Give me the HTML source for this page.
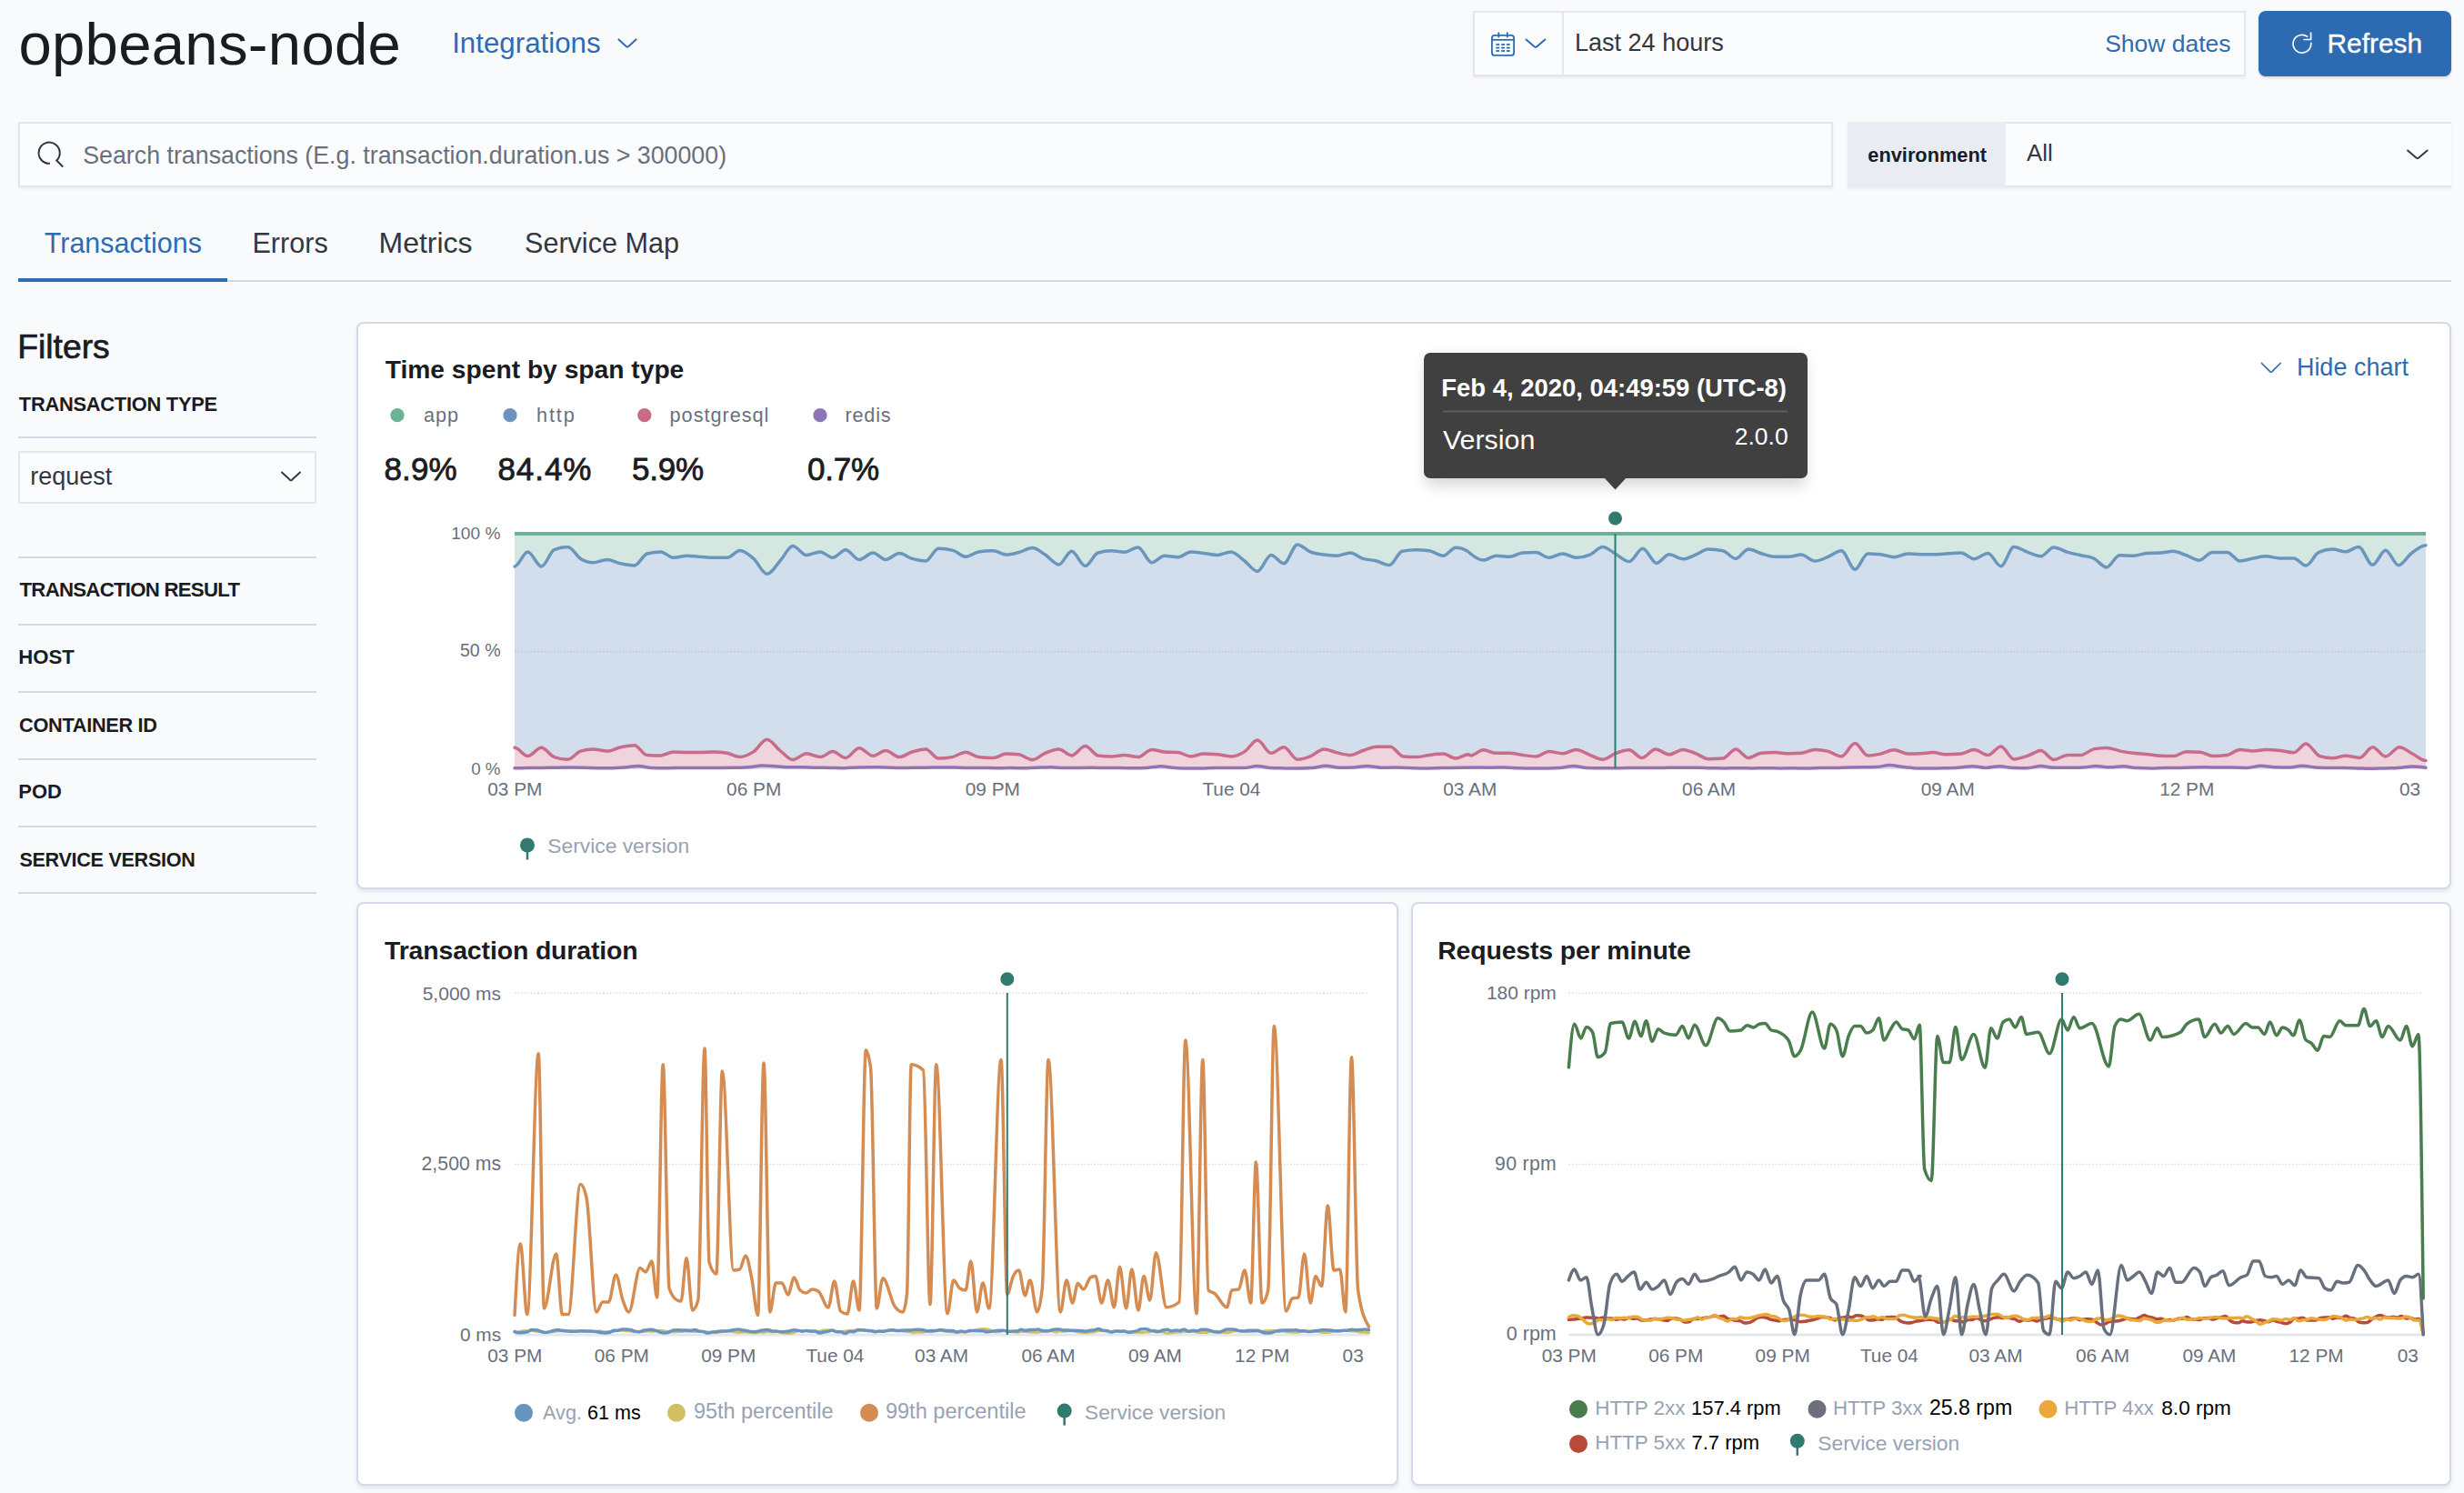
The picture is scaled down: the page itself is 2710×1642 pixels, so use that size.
<!DOCTYPE html>
<html><head><meta charset="utf-8"><style>
html,body{margin:0;padding:0;}
body{width:2710px;height:1642px;position:relative;overflow:hidden;background:#f9fafc;font-family:"Liberation Sans",sans-serif;}
.t{position:absolute;white-space:nowrap;line-height:1;}
.b{position:absolute;box-sizing:border-box;}
svg{position:absolute;left:0;top:0;}
</style></head><body>
<!-- header boxes -->
<div class="b" style="left:1620px;top:12px;width:850px;height:72px;background:#fbfcfd;border:2px solid #e3e6ee;box-shadow:0 2px 2px rgba(152,162,179,.15);"></div>
<div class="b" style="left:1718px;top:14px;width:2px;height:68px;background:#e3e6ee;"></div>
<div class="b" style="left:2484px;top:12px;width:212px;height:72px;background:#2c6ab1;border-radius:8px;box-shadow:0 2px 3px rgba(0,0,0,.12);"></div>
<div class="b" style="left:20px;top:134px;width:1996px;height:72px;background:#fbfcfd;border:2px solid #e3e6ee;box-shadow:0 2px 2px rgba(152,162,179,.15);"></div>
<div class="b" style="left:2032px;top:134px;width:664px;height:72px;background:#fbfcfd;border:2px solid #e3e6ee;border-right:none;box-shadow:0 2px 2px rgba(152,162,179,.15);"></div>
<div class="b" style="left:2032px;top:134px;width:174px;height:72px;background:#e9edf3;"></div>
<!-- tabs -->
<div class="b" style="left:20px;top:308px;width:2676px;height:2px;background:#d3dae6;"></div>
<div class="b" style="left:20px;top:306px;width:230px;height:4px;background:#2f6bb0;"></div>
<!-- filters lines -->
<div class="b" style="left:20px;top:480px;width:328px;height:2px;background:#d3dae6;"></div>
<div class="b" style="left:20px;top:496px;width:328px;height:58px;background:#fbfcfd;border:2px solid #e3e6ee;border-radius:2px;"></div>
<div class="b" style="left:20px;top:612px;width:328px;height:2px;background:#d3dae6;"></div>
<div class="b" style="left:20px;top:686px;width:328px;height:2px;background:#d3dae6;"></div>
<div class="b" style="left:20px;top:760px;width:328px;height:2px;background:#d3dae6;"></div>
<div class="b" style="left:20px;top:834px;width:328px;height:2px;background:#d3dae6;"></div>
<div class="b" style="left:20px;top:908px;width:328px;height:2px;background:#d3dae6;"></div>
<div class="b" style="left:20px;top:981px;width:328px;height:2px;background:#d3dae6;"></div>
<!-- panels -->
<div class="b" style="left:392px;top:354px;width:2304px;height:624px;background:#fff;border:2px solid #d3dae6;border-radius:8px;box-shadow:0 3px 4px rgba(152,162,179,.22);"></div>
<div class="b" style="left:392px;top:992px;width:1146px;height:642px;background:#fff;border:2px solid #d3dae6;border-radius:8px;box-shadow:0 3px 4px rgba(152,162,179,.22);"></div>
<div class="b" style="left:1552px;top:992px;width:1144px;height:642px;background:#fff;border:2px solid #d3dae6;border-radius:8px;box-shadow:0 3px 4px rgba(152,162,179,.22);"></div>
<svg width="2710" height="1642" viewBox="0 0 2710 1642">
<defs><filter id="blur" x="-20%" y="-20%" width="140%" height="140%"><feGaussianBlur stdDeviation="8"/></filter></defs>
<path d="M566.0,587.0 C1266.7,587.0 1967.3,587.0 2668.0,587.0 L2668.0,599.7 C2668.0,599.7 2668.0,599.7 2668.0,599.7 C2662.7,599.7 2657.5,604.6 2652.2,608.5 C2647.5,612.1 2642.7,621.7 2638.0,621.7 C2633.2,621.7 2628.5,605.2 2623.7,605.2 C2619.0,605.2 2614.2,621.3 2609.5,621.3 C2604.4,621.3 2599.2,601.5 2594.1,601.5 C2589.4,601.5 2584.6,606.8 2579.9,606.8 C2575.1,606.8 2570.4,604.1 2565.6,604.1 C2560.5,604.1 2555.4,605.2 2550.3,607.4 C2545.5,609.5 2540.8,622.1 2536.1,622.1 C2531.7,622.1 2527.3,614.0 2522.9,614.0 C2517.8,614.0 2512.7,614.0 2507.6,614.0 C2502.4,614.0 2497.3,611.8 2492.2,611.8 C2487.5,611.8 2482.7,613.2 2478.0,614.0 C2473.2,614.9 2468.5,616.9 2463.7,616.9 C2459.0,616.9 2454.2,607.4 2449.5,607.4 C2444.0,607.4 2438.5,607.4 2433.0,607.4 C2428.3,607.4 2423.6,616.2 2418.8,616.2 C2414.1,616.2 2409.3,612.4 2404.6,610.7 C2399.8,609.1 2395.1,606.3 2390.3,606.3 C2385.6,606.3 2380.8,607.8 2376.1,608.1 C2371.0,608.4 2365.8,608.2 2360.7,608.5 C2356.0,608.8 2351.2,611.2 2346.5,611.2 C2341.4,611.2 2336.3,610.7 2331.1,610.7 C2326.4,610.7 2321.6,623.9 2316.9,623.9 C2312.1,623.9 2307.4,616.2 2302.7,614.0 C2297.9,611.8 2293.2,611.8 2288.4,610.7 C2283.7,609.6 2278.9,608.8 2274.2,607.4 C2269.0,605.9 2263.9,601.9 2258.8,601.9 C2254.1,601.9 2249.3,611.8 2244.6,611.8 C2239.8,611.8 2235.1,609.1 2230.3,607.4 C2225.2,605.7 2220.1,601.5 2215.0,601.5 C2210.2,601.5 2205.5,622.8 2200.7,622.8 C2196.0,622.8 2191.2,608.5 2186.5,608.5 C2181.4,608.5 2176.3,614.7 2171.2,614.7 C2166.4,614.7 2161.7,608.1 2156.9,608.1 C2151.3,608.1 2145.6,608.8 2140.0,609.0 C2135.4,609.3 2130.8,609.7 2126.2,609.7 C2121.6,609.7 2116.9,609.7 2112.3,609.7 C2107.6,609.7 2102.9,609.0 2098.3,609.0 C2093.3,609.0 2088.2,612.7 2083.2,612.7 C2078.2,612.7 2073.2,610.1 2068.2,609.7 C2063.5,609.3 2058.8,609.0 2054.2,609.0 C2049.5,609.0 2044.9,626.2 2040.2,626.2 C2035.2,626.2 2030.2,605.8 2025.1,605.8 C2020.1,605.8 2015.1,610.8 2010.1,612.7 C2005.4,614.5 2000.8,617.0 1996.1,617.0 C1991.1,617.0 1986.1,610.1 1981.0,610.1 C1976.4,610.1 1971.7,612.3 1967.1,612.3 C1962.0,612.3 1957.0,612.3 1952.0,612.3 C1947.3,612.3 1942.7,610.3 1938.0,609.0 C1933.0,607.6 1928.0,604.1 1923.0,604.1 C1918.3,604.1 1913.6,614.4 1909.0,614.4 C1904.3,614.4 1899.7,606.8 1895.0,605.8 C1889.6,604.7 1884.3,604.1 1878.9,604.1 C1874.2,604.1 1869.6,608.3 1864.9,610.1 C1860.2,611.9 1855.6,614.8 1850.9,614.8 C1845.9,614.8 1840.9,609.7 1835.9,609.7 C1831.2,609.7 1826.5,619.4 1821.9,619.4 C1816.9,619.4 1811.8,603.2 1806.8,603.2 C1801.8,603.2 1796.8,617.6 1791.8,617.6 C1786.7,617.6 1781.7,611.8 1776.7,609.0 C1772.0,606.5 1767.4,601.5 1762.7,601.5 C1758.1,601.5 1753.4,608.1 1748.7,610.1 C1743.7,612.2 1738.7,613.3 1733.7,613.3 C1728.7,613.3 1723.6,609.0 1718.6,609.0 C1713.6,609.0 1708.6,613.3 1703.6,613.3 C1698.9,613.3 1694.2,607.5 1689.6,607.5 C1684.6,607.5 1679.5,607.7 1674.5,608.0 C1669.9,608.2 1665.2,612.3 1660.5,612.3 C1655.5,612.3 1650.5,611.2 1645.5,611.2 C1640.8,611.2 1636.2,616.1 1631.5,616.1 C1626.8,616.1 1622.2,612.8 1617.5,609.0 C1616.7,608.4 1615.8,607.5 1615.0,606.9 C1610.4,603.7 1605.8,602.2 1601.2,602.2 C1596.6,602.2 1591.9,611.2 1587.3,611.2 C1582.2,611.2 1577.2,606.5 1572.2,605.8 C1567.2,605.1 1562.2,604.7 1557.1,604.7 C1552.1,604.7 1547.1,605.2 1542.1,606.2 C1537.4,607.2 1532.8,621.5 1528.1,621.5 C1523.4,621.5 1518.8,618.2 1514.1,617.0 C1509.1,615.7 1504.1,616.0 1499.1,614.4 C1494.4,612.9 1489.7,608.0 1485.1,608.0 C1480.1,608.0 1475.0,611.2 1470.0,611.2 C1465.4,611.2 1460.7,610.8 1456.0,610.1 C1451.0,609.4 1446.0,608.9 1441.0,606.9 C1436.3,605.0 1431.7,598.9 1427.0,598.9 C1422.0,598.9 1417.0,619.8 1412.0,619.8 C1407.3,619.8 1402.6,610.5 1398.0,610.5 C1393.0,610.5 1387.9,628.4 1382.9,628.4 C1378.3,628.4 1373.6,620.5 1368.9,617.0 C1363.9,613.3 1358.9,606.9 1353.9,606.9 C1348.9,606.9 1343.8,610.5 1338.8,610.5 C1333.8,610.5 1328.8,609.0 1323.8,608.4 C1319.1,607.8 1314.4,606.9 1309.8,606.9 C1305.1,606.9 1300.5,612.7 1295.8,612.7 C1290.8,612.7 1285.8,611.2 1280.7,611.2 C1276.1,611.2 1271.4,618.7 1266.8,618.7 C1261.7,618.7 1256.7,601.9 1251.7,601.9 C1246.7,601.9 1241.7,607.3 1236.6,607.3 C1232.0,607.3 1227.3,605.8 1222.7,605.8 C1217.6,605.8 1212.6,606.5 1207.6,608.0 C1202.9,609.3 1198.3,622.4 1193.6,622.4 C1188.6,622.4 1183.6,606.2 1178.6,606.2 C1173.9,606.2 1169.2,620.9 1164.6,620.9 C1159.6,620.9 1154.5,613.2 1149.5,610.1 C1144.9,607.2 1140.2,602.6 1135.5,602.6 C1130.5,602.6 1125.5,606.3 1120.5,607.5 C1115.8,608.7 1111.2,610.1 1106.5,610.1 C1101.8,610.1 1097.2,605.8 1092.5,605.8 C1091.7,605.8 1090.8,605.8 1090.0,605.8 C1085.4,605.8 1080.8,606.2 1076.2,606.9 C1071.6,607.6 1066.9,612.3 1062.3,612.3 C1057.6,612.3 1052.9,606.6 1048.3,605.4 C1042.9,603.9 1037.5,603.2 1032.1,603.2 C1027.5,603.2 1022.8,617.0 1018.2,617.0 C1013.1,617.0 1008.1,615.9 1003.1,614.4 C998.4,613.0 993.8,608.6 989.1,608.6 C984.1,608.6 979.1,615.5 974.1,615.5 C969.4,615.5 964.7,608.0 960.1,608.0 C955.1,608.0 950.0,615.5 945.0,615.5 C940.0,615.5 935.0,604.7 930.0,604.7 C925.3,604.7 920.7,613.3 916.0,613.3 C911.3,613.3 906.7,606.9 902.0,606.9 C897.0,606.9 892.0,610.5 887.0,610.5 C881.9,610.5 876.9,600.4 871.9,600.4 C867.6,600.4 863.3,610.8 859.0,615.5 C853.8,621.2 848.7,631.2 843.5,631.2 C838.6,631.2 833.8,618.7 828.9,614.4 C823.9,610.0 818.8,605.4 813.8,605.4 C809.2,605.4 804.5,613.3 799.8,613.3 C794.8,613.3 789.8,613.3 784.8,613.3 C779.8,613.3 774.7,612.6 769.7,612.3 C765.1,611.9 760.4,611.2 755.7,611.2 C750.7,611.2 745.7,613.3 740.7,613.3 C736.0,613.3 731.4,606.9 726.7,606.9 C721.7,606.9 716.7,607.6 711.6,609.0 C707.0,610.4 702.3,621.9 697.7,621.9 C692.6,621.9 687.6,620.9 682.6,619.8 C677.6,618.7 672.6,615.5 667.6,615.5 C662.5,615.5 657.5,618.7 652.5,618.7 C647.8,618.7 643.2,617.3 638.5,614.4 C633.9,611.5 629.2,601.5 624.5,601.5 C619.5,601.5 614.5,602.6 609.5,604.7 C604.8,606.7 600.2,623.0 595.5,623.0 C590.5,623.0 585.5,606.9 580.4,606.9 C575.6,606.9 570.8,623.0 566.0,623.0 C566.0,623.0 566.0,623.0 566.0,623.0 Z" fill="#d4e8e1" stroke="none"/>
<path d="M566.0,623.0 C566.0,623.0 566.0,623.0 566.0,623.0 C570.8,623.0 575.6,606.9 580.4,606.9 C585.5,606.9 590.5,623.0 595.5,623.0 C600.2,623.0 604.8,606.7 609.5,604.7 C614.5,602.6 619.5,601.5 624.5,601.5 C629.2,601.5 633.9,611.5 638.5,614.4 C643.2,617.3 647.8,618.7 652.5,618.7 C657.5,618.7 662.5,615.5 667.6,615.5 C672.6,615.5 677.6,618.7 682.6,619.8 C687.6,620.9 692.6,621.9 697.7,621.9 C702.3,621.9 707.0,610.4 711.6,609.0 C716.7,607.6 721.7,606.9 726.7,606.9 C731.4,606.9 736.0,613.3 740.7,613.3 C745.7,613.3 750.7,611.2 755.7,611.2 C760.4,611.2 765.1,611.9 769.7,612.3 C774.7,612.6 779.8,613.3 784.8,613.3 C789.8,613.3 794.8,613.3 799.8,613.3 C804.5,613.3 809.2,605.4 813.8,605.4 C818.8,605.4 823.9,610.0 828.9,614.4 C833.8,618.7 838.6,631.2 843.5,631.2 C848.7,631.2 853.8,621.2 859.0,615.5 C863.3,610.8 867.6,600.4 871.9,600.4 C876.9,600.4 881.9,610.5 887.0,610.5 C892.0,610.5 897.0,606.9 902.0,606.9 C906.7,606.9 911.3,613.3 916.0,613.3 C920.7,613.3 925.3,604.7 930.0,604.7 C935.0,604.7 940.0,615.5 945.0,615.5 C950.0,615.5 955.1,608.0 960.1,608.0 C964.7,608.0 969.4,615.5 974.1,615.5 C979.1,615.5 984.1,608.6 989.1,608.6 C993.8,608.6 998.4,613.0 1003.1,614.4 C1008.1,615.9 1013.1,617.0 1018.2,617.0 C1022.8,617.0 1027.5,603.2 1032.1,603.2 C1037.5,603.2 1042.9,603.9 1048.3,605.4 C1052.9,606.6 1057.6,612.3 1062.3,612.3 C1066.9,612.3 1071.6,607.6 1076.2,606.9 C1080.8,606.2 1085.4,605.8 1090.0,605.8 C1090.8,605.8 1091.7,605.8 1092.5,605.8 C1097.2,605.8 1101.8,610.1 1106.5,610.1 C1111.2,610.1 1115.8,608.7 1120.5,607.5 C1125.5,606.3 1130.5,602.6 1135.5,602.6 C1140.2,602.6 1144.9,607.2 1149.5,610.1 C1154.5,613.2 1159.6,620.9 1164.6,620.9 C1169.2,620.9 1173.9,606.2 1178.6,606.2 C1183.6,606.2 1188.6,622.4 1193.6,622.4 C1198.3,622.4 1202.9,609.3 1207.6,608.0 C1212.6,606.5 1217.6,605.8 1222.7,605.8 C1227.3,605.8 1232.0,607.3 1236.6,607.3 C1241.7,607.3 1246.7,601.9 1251.7,601.9 C1256.7,601.9 1261.7,618.7 1266.8,618.7 C1271.4,618.7 1276.1,611.2 1280.7,611.2 C1285.8,611.2 1290.8,612.7 1295.8,612.7 C1300.5,612.7 1305.1,606.9 1309.8,606.9 C1314.4,606.9 1319.1,607.8 1323.8,608.4 C1328.8,609.0 1333.8,610.5 1338.8,610.5 C1343.8,610.5 1348.9,606.9 1353.9,606.9 C1358.9,606.9 1363.9,613.3 1368.9,617.0 C1373.6,620.5 1378.3,628.4 1382.9,628.4 C1387.9,628.4 1393.0,610.5 1398.0,610.5 C1402.6,610.5 1407.3,619.8 1412.0,619.8 C1417.0,619.8 1422.0,598.9 1427.0,598.9 C1431.7,598.9 1436.3,605.0 1441.0,606.9 C1446.0,608.9 1451.0,609.4 1456.0,610.1 C1460.7,610.8 1465.4,611.2 1470.0,611.2 C1475.0,611.2 1480.1,608.0 1485.1,608.0 C1489.7,608.0 1494.4,612.9 1499.1,614.4 C1504.1,616.0 1509.1,615.7 1514.1,617.0 C1518.8,618.2 1523.4,621.5 1528.1,621.5 C1532.8,621.5 1537.4,607.2 1542.1,606.2 C1547.1,605.2 1552.1,604.7 1557.1,604.7 C1562.2,604.7 1567.2,605.1 1572.2,605.8 C1577.2,606.5 1582.2,611.2 1587.3,611.2 C1591.9,611.2 1596.6,602.2 1601.2,602.2 C1605.8,602.2 1610.4,603.7 1615.0,606.9 C1615.8,607.5 1616.7,608.4 1617.5,609.0 C1622.2,612.8 1626.8,616.1 1631.5,616.1 C1636.2,616.1 1640.8,611.2 1645.5,611.2 C1650.5,611.2 1655.5,612.3 1660.5,612.3 C1665.2,612.3 1669.9,608.2 1674.5,608.0 C1679.5,607.7 1684.6,607.5 1689.6,607.5 C1694.2,607.5 1698.9,613.3 1703.6,613.3 C1708.6,613.3 1713.6,609.0 1718.6,609.0 C1723.6,609.0 1728.7,613.3 1733.7,613.3 C1738.7,613.3 1743.7,612.2 1748.7,610.1 C1753.4,608.1 1758.1,601.5 1762.7,601.5 C1767.4,601.5 1772.0,606.5 1776.7,609.0 C1781.7,611.8 1786.7,617.6 1791.8,617.6 C1796.8,617.6 1801.8,603.2 1806.8,603.2 C1811.8,603.2 1816.9,619.4 1821.9,619.4 C1826.5,619.4 1831.2,609.7 1835.9,609.7 C1840.9,609.7 1845.9,614.8 1850.9,614.8 C1855.6,614.8 1860.2,611.9 1864.9,610.1 C1869.6,608.3 1874.2,604.1 1878.9,604.1 C1884.3,604.1 1889.6,604.7 1895.0,605.8 C1899.7,606.8 1904.3,614.4 1909.0,614.4 C1913.6,614.4 1918.3,604.1 1923.0,604.1 C1928.0,604.1 1933.0,607.6 1938.0,609.0 C1942.7,610.3 1947.3,612.3 1952.0,612.3 C1957.0,612.3 1962.0,612.3 1967.1,612.3 C1971.7,612.3 1976.4,610.1 1981.0,610.1 C1986.1,610.1 1991.1,617.0 1996.1,617.0 C2000.8,617.0 2005.4,614.5 2010.1,612.7 C2015.1,610.8 2020.1,605.8 2025.1,605.8 C2030.2,605.8 2035.2,626.2 2040.2,626.2 C2044.9,626.2 2049.5,609.0 2054.2,609.0 C2058.8,609.0 2063.5,609.3 2068.2,609.7 C2073.2,610.1 2078.2,612.7 2083.2,612.7 C2088.2,612.7 2093.3,609.0 2098.3,609.0 C2102.9,609.0 2107.6,609.7 2112.3,609.7 C2116.9,609.7 2121.6,609.7 2126.2,609.7 C2130.8,609.7 2135.4,609.3 2140.0,609.0 C2145.6,608.8 2151.3,608.1 2156.9,608.1 C2161.7,608.1 2166.4,614.7 2171.2,614.7 C2176.3,614.7 2181.4,608.5 2186.5,608.5 C2191.2,608.5 2196.0,622.8 2200.7,622.8 C2205.5,622.8 2210.2,601.5 2215.0,601.5 C2220.1,601.5 2225.2,605.7 2230.3,607.4 C2235.1,609.1 2239.8,611.8 2244.6,611.8 C2249.3,611.8 2254.1,601.9 2258.8,601.9 C2263.9,601.9 2269.0,605.9 2274.2,607.4 C2278.9,608.8 2283.7,609.6 2288.4,610.7 C2293.2,611.8 2297.9,611.8 2302.7,614.0 C2307.4,616.2 2312.1,623.9 2316.9,623.9 C2321.6,623.9 2326.4,610.7 2331.1,610.7 C2336.3,610.7 2341.4,611.2 2346.5,611.2 C2351.2,611.2 2356.0,608.8 2360.7,608.5 C2365.8,608.2 2371.0,608.4 2376.1,608.1 C2380.8,607.8 2385.6,606.3 2390.3,606.3 C2395.1,606.3 2399.8,609.1 2404.6,610.7 C2409.3,612.4 2414.1,616.2 2418.8,616.2 C2423.6,616.2 2428.3,607.4 2433.0,607.4 C2438.5,607.4 2444.0,607.4 2449.5,607.4 C2454.2,607.4 2459.0,616.9 2463.7,616.9 C2468.5,616.9 2473.2,614.9 2478.0,614.0 C2482.7,613.2 2487.5,611.8 2492.2,611.8 C2497.3,611.8 2502.4,614.0 2507.6,614.0 C2512.7,614.0 2517.8,614.0 2522.9,614.0 C2527.3,614.0 2531.7,622.1 2536.1,622.1 C2540.8,622.1 2545.5,609.5 2550.3,607.4 C2555.4,605.2 2560.5,604.1 2565.6,604.1 C2570.4,604.1 2575.1,606.8 2579.9,606.8 C2584.6,606.8 2589.4,601.5 2594.1,601.5 C2599.2,601.5 2604.4,621.3 2609.5,621.3 C2614.2,621.3 2619.0,605.2 2623.7,605.2 C2628.5,605.2 2633.2,621.7 2638.0,621.7 C2642.7,621.7 2647.5,612.1 2652.2,608.5 C2657.5,604.6 2662.7,599.7 2668.0,599.7 C2668.0,599.7 2668.0,599.7 2668.0,599.7 L2668.0,836.4 C2667.8,836.4 2667.7,836.4 2667.5,836.4 C2662.8,836.4 2658.0,831.4 2653.3,829.0 C2648.6,826.5 2643.8,821.7 2639.1,821.7 C2633.9,821.7 2628.8,832.0 2623.7,832.0 C2619.0,832.0 2614.2,821.7 2609.5,821.7 C2604.7,821.7 2600.0,833.4 2595.2,833.4 C2590.1,833.4 2585.0,831.2 2579.9,831.2 C2575.1,831.2 2570.4,833.8 2565.6,833.8 C2560.9,833.8 2556.1,833.1 2551.4,831.6 C2546.3,830.0 2541.2,818.0 2536.1,818.0 C2531.7,818.0 2527.3,827.7 2522.9,827.7 C2517.8,827.7 2512.7,826.0 2507.6,825.5 C2502.4,825.0 2497.3,824.6 2492.2,824.6 C2487.5,824.6 2482.7,826.1 2478.0,826.1 C2473.2,826.1 2468.5,824.6 2463.7,824.6 C2459.0,824.6 2454.2,829.8 2449.5,830.5 C2444.4,831.2 2439.3,831.6 2434.1,831.6 C2429.4,831.6 2424.6,827.5 2419.9,827.2 C2414.8,826.9 2409.7,826.8 2404.6,826.8 C2399.8,826.8 2395.1,831.6 2390.3,831.6 C2385.6,831.6 2380.8,831.5 2376.1,831.2 C2371.0,830.9 2365.8,829.9 2360.7,829.4 C2356.0,829.0 2351.2,828.9 2346.5,828.3 C2341.7,827.8 2337.0,827.1 2332.2,826.1 C2327.1,825.1 2322.0,822.4 2316.9,822.4 C2312.1,822.4 2307.4,822.9 2302.7,823.9 C2297.9,825.0 2293.2,830.5 2288.4,830.5 C2283.7,830.5 2278.9,830.5 2274.2,830.5 C2269.0,830.5 2263.9,835.5 2258.8,835.5 C2254.1,835.5 2249.3,825.5 2244.6,825.5 C2239.8,825.5 2235.1,829.6 2230.3,831.2 C2225.2,832.8 2220.1,834.9 2215.0,834.9 C2210.2,834.9 2205.5,821.1 2200.7,821.1 C2196.0,821.1 2191.2,830.5 2186.5,830.5 C2181.4,830.5 2176.3,824.6 2171.2,824.6 C2166.4,824.6 2161.7,828.5 2156.9,829.0 C2151.3,829.5 2145.6,829.8 2140.0,829.8 C2135.4,829.8 2130.8,827.6 2126.2,827.6 C2121.6,827.6 2116.9,828.5 2112.3,828.7 C2107.6,829.0 2102.9,829.1 2098.3,829.1 C2093.3,829.1 2088.2,824.8 2083.2,824.8 C2078.2,824.8 2073.2,828.1 2068.2,829.1 C2063.5,830.1 2058.8,830.9 2054.2,830.9 C2049.5,830.9 2044.9,817.5 2040.2,817.5 C2035.2,817.5 2030.2,831.9 2025.1,831.9 C2020.1,831.9 2015.1,827.4 2010.1,826.1 C2005.4,825.0 2000.8,824.4 1996.1,824.4 C1991.1,824.4 1986.1,828.0 1981.0,828.3 C1976.4,828.6 1971.7,828.7 1967.1,828.7 C1962.0,828.7 1957.0,827.6 1952.0,827.6 C1947.0,827.6 1942.0,827.9 1937.0,828.3 C1932.3,828.7 1927.6,833.5 1923.0,833.5 C1918.3,833.5 1913.6,824.0 1909.0,824.0 C1904.3,824.0 1899.7,833.7 1895.0,834.1 C1889.6,834.5 1884.3,834.7 1878.9,834.7 C1874.2,834.7 1869.6,830.4 1864.9,828.7 C1860.2,827.0 1855.6,824.4 1850.9,824.4 C1845.9,824.4 1840.9,829.8 1835.9,829.8 C1830.8,829.8 1825.8,824.0 1820.8,824.0 C1815.8,824.0 1810.8,833.5 1805.7,833.5 C1801.1,833.5 1796.4,824.8 1791.8,824.8 C1786.7,824.8 1781.7,826.9 1776.7,828.7 C1772.0,830.4 1767.4,835.2 1762.7,835.2 C1758.1,835.2 1753.4,832.2 1748.7,830.4 C1743.7,828.6 1738.7,824.4 1733.7,824.4 C1728.7,824.4 1723.6,828.7 1718.6,828.7 C1713.6,828.7 1708.6,826.6 1703.6,826.6 C1698.9,826.6 1694.2,831.9 1689.6,831.9 C1684.6,831.9 1679.5,831.1 1674.5,830.4 C1669.9,829.8 1665.2,828.3 1660.5,828.3 C1655.5,828.3 1650.5,828.3 1645.5,828.3 C1640.8,828.3 1636.2,824.8 1631.5,824.8 C1626.8,824.8 1622.2,830.9 1617.5,830.9 C1616.7,830.9 1615.8,829.8 1615.0,829.8 C1610.4,829.8 1605.8,834.1 1601.2,834.1 C1596.6,834.1 1591.9,829.1 1587.3,829.1 C1582.2,829.1 1577.2,829.8 1572.2,830.4 C1567.5,831.0 1562.9,832.6 1558.2,832.6 C1553.2,832.6 1548.2,832.4 1543.2,831.9 C1538.5,831.5 1533.8,821.2 1529.2,821.2 C1524.2,821.2 1519.1,821.2 1514.1,821.2 C1509.1,821.2 1504.1,823.9 1499.1,825.5 C1494.4,827.0 1489.7,830.4 1485.1,830.4 C1480.1,830.4 1475.0,828.8 1470.0,827.6 C1465.4,826.6 1460.7,824.0 1456.0,824.0 C1451.0,824.0 1446.0,830.1 1441.0,831.9 C1436.3,833.7 1431.7,835.2 1427.0,835.2 C1422.0,835.2 1417.0,821.8 1412.0,821.8 C1407.3,821.8 1402.6,828.3 1398.0,828.3 C1393.0,828.3 1387.9,814.1 1382.9,814.1 C1378.3,814.1 1373.6,823.6 1368.9,826.6 C1363.9,829.8 1358.9,831.9 1353.9,831.9 C1348.9,831.9 1343.8,830.2 1338.8,829.8 C1333.8,829.4 1328.8,829.1 1323.8,829.1 C1319.1,829.1 1314.4,831.9 1309.8,831.9 C1305.1,831.9 1300.5,828.0 1295.8,827.6 C1290.8,827.2 1285.8,827.4 1280.7,827.0 C1276.1,826.6 1271.4,824.4 1266.8,824.4 C1261.7,824.4 1256.7,832.6 1251.7,832.6 C1246.7,832.6 1241.7,830.4 1236.6,830.4 C1232.0,830.4 1227.3,831.9 1222.7,831.9 C1217.6,831.9 1212.6,831.6 1207.6,830.9 C1202.9,830.2 1198.3,820.5 1193.6,820.5 C1188.6,820.5 1183.6,830.9 1178.6,830.9 C1173.9,830.9 1169.2,824.0 1164.6,824.0 C1159.6,824.0 1154.5,826.2 1149.5,828.3 C1144.9,830.2 1140.2,835.6 1135.5,835.6 C1130.5,835.6 1125.5,830.3 1120.5,829.8 C1115.8,829.4 1111.2,829.1 1106.5,829.1 C1101.8,829.1 1097.2,833.5 1092.5,833.5 C1091.7,833.5 1090.8,833.5 1090.0,833.5 C1085.4,833.5 1080.8,833.2 1076.2,832.6 C1071.6,832.0 1066.9,827.2 1062.3,827.2 C1057.2,827.2 1052.2,831.6 1047.2,832.6 C1042.2,833.6 1037.2,834.1 1032.1,834.1 C1027.5,834.1 1022.8,824.0 1018.2,824.0 C1013.1,824.0 1008.1,825.5 1003.1,827.0 C998.4,828.4 993.8,832.6 989.1,832.6 C984.1,832.6 979.1,825.5 974.1,825.5 C969.4,825.5 964.7,831.3 960.1,831.3 C955.1,831.3 950.0,822.7 945.0,822.7 C940.0,822.7 935.0,833.5 930.0,833.5 C925.3,833.5 920.7,826.6 916.0,826.6 C911.3,826.6 906.7,832.6 902.0,832.6 C897.0,832.6 892.0,828.7 887.0,828.7 C881.9,828.7 876.9,835.6 871.9,835.6 C867.2,835.6 862.6,829.2 857.9,825.5 C853.1,821.7 848.3,813.2 843.5,813.2 C838.6,813.2 833.8,823.4 828.9,826.6 C823.9,829.8 818.8,832.4 813.8,832.4 C809.2,832.4 804.5,829.1 799.8,828.3 C794.8,827.4 789.8,827.0 784.8,827.0 C779.8,827.0 774.7,827.6 769.7,827.6 C765.1,827.6 760.4,827.6 755.7,827.6 C750.7,827.6 745.7,827.0 740.7,827.0 C736.0,827.0 731.4,830.9 726.7,830.9 C721.7,830.9 716.7,830.7 711.6,830.4 C707.0,830.2 702.3,819.7 697.7,819.7 C692.6,819.7 687.6,820.8 682.6,821.8 C677.6,822.9 672.6,826.1 667.6,826.1 C662.5,826.1 657.5,824.0 652.5,824.0 C647.8,824.0 643.2,824.7 638.5,826.1 C633.9,827.6 629.2,835.2 624.5,835.2 C619.5,835.2 614.5,834.3 609.5,832.6 C604.8,831.0 600.2,822.3 595.5,822.3 C590.5,822.3 585.5,831.5 580.4,831.5 C575.6,831.5 570.8,822.3 566.0,822.3 C566.0,822.3 566.0,822.3 566.0,822.3 Z" fill="#d2deeb" stroke="none"/>
<path d="M566.0,822.3 C566.0,822.3 566.0,822.3 566.0,822.3 C570.8,822.3 575.6,831.5 580.4,831.5 C585.5,831.5 590.5,822.3 595.5,822.3 C600.2,822.3 604.8,831.0 609.5,832.6 C614.5,834.3 619.5,835.2 624.5,835.2 C629.2,835.2 633.9,827.6 638.5,826.1 C643.2,824.7 647.8,824.0 652.5,824.0 C657.5,824.0 662.5,826.1 667.6,826.1 C672.6,826.1 677.6,822.9 682.6,821.8 C687.6,820.8 692.6,819.7 697.7,819.7 C702.3,819.7 707.0,830.2 711.6,830.4 C716.7,830.7 721.7,830.9 726.7,830.9 C731.4,830.9 736.0,827.0 740.7,827.0 C745.7,827.0 750.7,827.6 755.7,827.6 C760.4,827.6 765.1,827.6 769.7,827.6 C774.7,827.6 779.8,827.0 784.8,827.0 C789.8,827.0 794.8,827.4 799.8,828.3 C804.5,829.1 809.2,832.4 813.8,832.4 C818.8,832.4 823.9,829.8 828.9,826.6 C833.8,823.4 838.6,813.2 843.5,813.2 C848.3,813.2 853.1,821.7 857.9,825.5 C862.6,829.2 867.2,835.6 871.9,835.6 C876.9,835.6 881.9,828.7 887.0,828.7 C892.0,828.7 897.0,832.6 902.0,832.6 C906.7,832.6 911.3,826.6 916.0,826.6 C920.7,826.6 925.3,833.5 930.0,833.5 C935.0,833.5 940.0,822.7 945.0,822.7 C950.0,822.7 955.1,831.3 960.1,831.3 C964.7,831.3 969.4,825.5 974.1,825.5 C979.1,825.5 984.1,832.6 989.1,832.6 C993.8,832.6 998.4,828.4 1003.1,827.0 C1008.1,825.5 1013.1,824.0 1018.2,824.0 C1022.8,824.0 1027.5,834.1 1032.1,834.1 C1037.2,834.1 1042.2,833.6 1047.2,832.6 C1052.2,831.6 1057.2,827.2 1062.3,827.2 C1066.9,827.2 1071.6,832.0 1076.2,832.6 C1080.8,833.2 1085.4,833.5 1090.0,833.5 C1090.8,833.5 1091.7,833.5 1092.5,833.5 C1097.2,833.5 1101.8,829.1 1106.5,829.1 C1111.2,829.1 1115.8,829.4 1120.5,829.8 C1125.5,830.3 1130.5,835.6 1135.5,835.6 C1140.2,835.6 1144.9,830.2 1149.5,828.3 C1154.5,826.2 1159.6,824.0 1164.6,824.0 C1169.2,824.0 1173.9,830.9 1178.6,830.9 C1183.6,830.9 1188.6,820.5 1193.6,820.5 C1198.3,820.5 1202.9,830.2 1207.6,830.9 C1212.6,831.6 1217.6,831.9 1222.7,831.9 C1227.3,831.9 1232.0,830.4 1236.6,830.4 C1241.7,830.4 1246.7,832.6 1251.7,832.6 C1256.7,832.6 1261.7,824.4 1266.8,824.4 C1271.4,824.4 1276.1,826.6 1280.7,827.0 C1285.8,827.4 1290.8,827.2 1295.8,827.6 C1300.5,828.0 1305.1,831.9 1309.8,831.9 C1314.4,831.9 1319.1,829.1 1323.8,829.1 C1328.8,829.1 1333.8,829.4 1338.8,829.8 C1343.8,830.2 1348.9,831.9 1353.9,831.9 C1358.9,831.9 1363.9,829.8 1368.9,826.6 C1373.6,823.6 1378.3,814.1 1382.9,814.1 C1387.9,814.1 1393.0,828.3 1398.0,828.3 C1402.6,828.3 1407.3,821.8 1412.0,821.8 C1417.0,821.8 1422.0,835.2 1427.0,835.2 C1431.7,835.2 1436.3,833.7 1441.0,831.9 C1446.0,830.1 1451.0,824.0 1456.0,824.0 C1460.7,824.0 1465.4,826.6 1470.0,827.6 C1475.0,828.8 1480.1,830.4 1485.1,830.4 C1489.7,830.4 1494.4,827.0 1499.1,825.5 C1504.1,823.9 1509.1,821.2 1514.1,821.2 C1519.1,821.2 1524.2,821.2 1529.2,821.2 C1533.8,821.2 1538.5,831.5 1543.2,831.9 C1548.2,832.4 1553.2,832.6 1558.2,832.6 C1562.9,832.6 1567.5,831.0 1572.2,830.4 C1577.2,829.8 1582.2,829.1 1587.3,829.1 C1591.9,829.1 1596.6,834.1 1601.2,834.1 C1605.8,834.1 1610.4,829.8 1615.0,829.8 C1615.8,829.8 1616.7,830.9 1617.5,830.9 C1622.2,830.9 1626.8,824.8 1631.5,824.8 C1636.2,824.8 1640.8,828.3 1645.5,828.3 C1650.5,828.3 1655.5,828.3 1660.5,828.3 C1665.2,828.3 1669.9,829.8 1674.5,830.4 C1679.5,831.1 1684.6,831.9 1689.6,831.9 C1694.2,831.9 1698.9,826.6 1703.6,826.6 C1708.6,826.6 1713.6,828.7 1718.6,828.7 C1723.6,828.7 1728.7,824.4 1733.7,824.4 C1738.7,824.4 1743.7,828.6 1748.7,830.4 C1753.4,832.2 1758.1,835.2 1762.7,835.2 C1767.4,835.2 1772.0,830.4 1776.7,828.7 C1781.7,826.9 1786.7,824.8 1791.8,824.8 C1796.4,824.8 1801.1,833.5 1805.7,833.5 C1810.8,833.5 1815.8,824.0 1820.8,824.0 C1825.8,824.0 1830.8,829.8 1835.9,829.8 C1840.9,829.8 1845.9,824.4 1850.9,824.4 C1855.6,824.4 1860.2,827.0 1864.9,828.7 C1869.6,830.4 1874.2,834.7 1878.9,834.7 C1884.3,834.7 1889.6,834.5 1895.0,834.1 C1899.7,833.7 1904.3,824.0 1909.0,824.0 C1913.6,824.0 1918.3,833.5 1923.0,833.5 C1927.6,833.5 1932.3,828.7 1937.0,828.3 C1942.0,827.9 1947.0,827.6 1952.0,827.6 C1957.0,827.6 1962.0,828.7 1967.1,828.7 C1971.7,828.7 1976.4,828.6 1981.0,828.3 C1986.1,828.0 1991.1,824.4 1996.1,824.4 C2000.8,824.4 2005.4,825.0 2010.1,826.1 C2015.1,827.4 2020.1,831.9 2025.1,831.9 C2030.2,831.9 2035.2,817.5 2040.2,817.5 C2044.9,817.5 2049.5,830.9 2054.2,830.9 C2058.8,830.9 2063.5,830.1 2068.2,829.1 C2073.2,828.1 2078.2,824.8 2083.2,824.8 C2088.2,824.8 2093.3,829.1 2098.3,829.1 C2102.9,829.1 2107.6,829.0 2112.3,828.7 C2116.9,828.5 2121.6,827.6 2126.2,827.6 C2130.8,827.6 2135.4,829.8 2140.0,829.8 C2145.6,829.8 2151.3,829.5 2156.9,829.0 C2161.7,828.5 2166.4,824.6 2171.2,824.6 C2176.3,824.6 2181.4,830.5 2186.5,830.5 C2191.2,830.5 2196.0,821.1 2200.7,821.1 C2205.5,821.1 2210.2,834.9 2215.0,834.9 C2220.1,834.9 2225.2,832.8 2230.3,831.2 C2235.1,829.6 2239.8,825.5 2244.6,825.5 C2249.3,825.5 2254.1,835.5 2258.8,835.5 C2263.9,835.5 2269.0,830.5 2274.2,830.5 C2278.9,830.5 2283.7,830.5 2288.4,830.5 C2293.2,830.5 2297.9,825.0 2302.7,823.9 C2307.4,822.9 2312.1,822.4 2316.9,822.4 C2322.0,822.4 2327.1,825.1 2332.2,826.1 C2337.0,827.1 2341.7,827.8 2346.5,828.3 C2351.2,828.9 2356.0,829.0 2360.7,829.4 C2365.8,829.9 2371.0,830.9 2376.1,831.2 C2380.8,831.5 2385.6,831.6 2390.3,831.6 C2395.1,831.6 2399.8,826.8 2404.6,826.8 C2409.7,826.8 2414.8,826.9 2419.9,827.2 C2424.6,827.5 2429.4,831.6 2434.1,831.6 C2439.3,831.6 2444.4,831.2 2449.5,830.5 C2454.2,829.8 2459.0,824.6 2463.7,824.6 C2468.5,824.6 2473.2,826.1 2478.0,826.1 C2482.7,826.1 2487.5,824.6 2492.2,824.6 C2497.3,824.6 2502.4,825.0 2507.6,825.5 C2512.7,826.0 2517.8,827.7 2522.9,827.7 C2527.3,827.7 2531.7,818.0 2536.1,818.0 C2541.2,818.0 2546.3,830.0 2551.4,831.6 C2556.1,833.1 2560.9,833.8 2565.6,833.8 C2570.4,833.8 2575.1,831.2 2579.9,831.2 C2585.0,831.2 2590.1,833.4 2595.2,833.4 C2600.0,833.4 2604.7,821.7 2609.5,821.7 C2614.2,821.7 2619.0,832.0 2623.7,832.0 C2628.8,832.0 2633.9,821.7 2639.1,821.7 C2643.8,821.7 2648.6,826.5 2653.3,829.0 C2658.0,831.4 2662.8,836.4 2667.5,836.4 C2667.7,836.4 2667.8,836.4 2668.0,836.4 L2668.0,844.2 C2663.0,843.6 2657.9,842.9 2652.9,842.9 C2647.8,842.9 2642.8,844.1 2637.8,844.4 C2632.7,844.7 2627.7,844.7 2622.6,844.9 C2617.6,845.0 2612.6,845.2 2607.5,845.2 C2602.5,845.2 2597.4,845.0 2592.4,844.9 C2587.3,844.8 2582.3,844.6 2577.3,844.6 C2572.2,844.5 2567.2,844.5 2562.1,844.5 C2557.1,844.4 2552.1,844.3 2547.0,843.9 C2542.0,843.6 2536.9,842.3 2531.9,842.3 C2526.9,842.3 2521.8,844.1 2516.8,844.1 C2511.7,844.1 2506.7,844.0 2501.7,843.8 C2496.6,843.6 2491.6,842.3 2486.5,842.3 C2481.5,842.3 2476.5,844.4 2471.4,844.4 C2466.4,844.4 2461.3,843.9 2456.3,843.9 C2451.2,843.9 2446.2,844.0 2441.2,844.0 C2436.1,844.0 2431.1,843.8 2426.0,843.8 C2421.0,843.8 2416.0,843.9 2410.9,844.0 C2405.9,844.1 2400.8,844.4 2395.8,844.5 C2390.8,844.5 2385.7,844.5 2380.7,844.5 C2375.6,844.6 2370.6,844.9 2365.6,844.9 C2360.5,844.9 2355.5,844.8 2350.4,844.6 C2345.4,844.5 2340.4,842.7 2335.3,842.7 C2330.3,842.7 2325.2,843.8 2320.2,843.8 C2315.1,843.8 2310.1,842.6 2305.1,842.6 C2300.0,842.6 2295.0,843.9 2289.9,844.1 C2284.9,844.3 2279.9,844.3 2274.8,844.3 C2269.8,844.3 2264.7,844.3 2259.7,844.3 C2254.7,844.3 2249.6,842.6 2244.6,842.6 C2239.5,842.6 2234.5,844.7 2229.5,844.7 C2224.4,844.7 2219.4,844.6 2214.3,844.5 C2209.3,844.3 2204.2,842.7 2199.2,842.7 C2194.2,842.7 2189.1,844.4 2184.1,844.4 C2179.0,844.4 2174.0,842.7 2169.0,842.7 C2163.9,842.7 2158.9,843.9 2153.8,844.3 C2148.8,844.6 2143.8,844.7 2138.7,844.8 C2133.7,844.9 2128.6,845.0 2123.6,845.0 C2118.6,845.0 2113.5,845.0 2108.5,845.0 C2103.4,844.9 2098.4,844.1 2093.4,843.6 C2088.3,843.0 2083.3,841.6 2078.2,841.6 C2073.2,841.6 2068.1,843.5 2063.1,843.6 C2058.1,843.8 2053.0,843.8 2048.0,843.8 C2042.9,843.9 2037.9,843.9 2032.9,844.0 C2027.8,844.1 2022.8,844.5 2017.7,844.5 C2012.7,844.5 2007.7,844.4 2002.6,844.4 C1997.6,844.4 1992.5,845.0 1987.5,845.0 C1982.5,845.0 1977.4,844.8 1972.4,844.8 C1967.3,844.8 1962.3,844.9 1957.3,844.9 C1952.2,844.9 1947.2,844.7 1942.1,844.7 C1937.1,844.7 1932.0,844.9 1927.0,844.9 C1922.0,844.9 1916.9,844.7 1911.9,844.7 C1906.8,844.7 1901.8,844.9 1896.8,844.9 C1891.7,844.9 1886.7,844.8 1881.6,844.8 C1876.6,844.7 1871.6,844.2 1866.5,844.2 C1861.5,844.2 1856.4,844.3 1851.4,844.3 C1846.4,844.3 1841.3,844.3 1836.3,844.3 C1831.2,844.3 1826.2,844.6 1821.2,844.6 C1816.1,844.6 1811.1,844.6 1806.0,844.6 C1801.0,844.6 1795.9,844.5 1790.9,844.5 C1785.9,844.5 1780.8,844.8 1775.8,844.8 C1770.7,844.8 1765.7,844.8 1760.7,844.8 C1755.6,844.8 1750.6,844.7 1745.5,844.4 C1740.5,844.1 1735.5,842.4 1730.4,842.4 C1725.4,842.4 1720.3,844.3 1715.3,844.6 C1710.3,844.8 1705.2,844.9 1700.2,845.0 C1695.1,845.0 1690.1,845.0 1685.1,845.0 C1680.0,845.0 1675.0,844.9 1669.9,844.8 C1664.9,844.6 1659.8,844.0 1654.8,844.0 C1649.8,844.0 1644.7,844.2 1639.7,844.2 C1634.6,844.2 1629.6,844.1 1624.6,844.1 C1619.5,844.1 1614.5,844.2 1609.4,844.3 C1604.4,844.3 1599.4,844.3 1594.3,844.4 C1589.3,844.5 1584.2,844.7 1579.2,844.8 C1574.2,844.9 1569.1,845.0 1564.1,845.0 C1559.0,845.0 1554.0,844.8 1548.9,844.6 C1543.9,844.5 1538.9,844.1 1533.8,844.1 C1528.8,844.1 1523.7,844.2 1518.7,844.2 C1513.7,844.2 1508.6,842.5 1503.6,842.5 C1498.5,842.5 1493.5,843.8 1488.5,844.0 C1483.4,844.2 1478.4,844.3 1473.3,844.3 C1468.3,844.3 1463.3,842.2 1458.2,842.2 C1453.2,842.2 1448.1,844.2 1443.1,844.6 C1438.1,844.9 1433.0,845.1 1428.0,845.1 C1422.9,845.1 1417.9,845.0 1412.8,844.9 C1407.8,844.8 1402.8,844.8 1397.7,844.5 C1392.7,844.3 1387.6,842.6 1382.6,842.6 C1377.6,842.6 1372.5,844.6 1367.5,844.6 C1362.4,844.6 1357.4,844.5 1352.4,844.5 C1347.3,844.5 1342.3,844.5 1337.2,844.5 C1332.2,844.5 1327.2,844.9 1322.1,845.0 C1317.1,845.1 1312.0,845.1 1307.0,845.1 C1302.0,845.1 1296.9,844.8 1291.9,844.5 C1286.8,844.1 1281.8,842.8 1276.7,842.8 C1271.7,842.8 1266.7,844.2 1261.6,844.4 C1256.6,844.7 1251.5,844.8 1246.5,844.8 C1241.5,844.8 1236.4,844.6 1231.4,844.6 C1226.3,844.6 1221.3,844.6 1216.3,844.6 C1211.2,844.6 1206.2,844.3 1201.1,844.3 C1196.1,844.3 1191.1,844.3 1186.0,844.4 C1181.0,844.4 1175.9,844.6 1170.9,844.6 C1165.9,844.6 1160.8,843.7 1155.8,843.7 C1150.7,843.7 1145.7,844.0 1140.6,844.2 C1135.6,844.3 1130.6,844.7 1125.5,844.7 C1120.5,844.7 1115.4,844.6 1110.4,844.6 C1105.4,844.6 1100.3,844.7 1095.3,844.7 C1090.2,844.7 1085.2,844.5 1080.2,844.5 C1075.1,844.4 1070.1,844.5 1065.0,844.4 C1060.0,844.4 1055.0,844.2 1049.9,844.1 C1044.9,844.0 1039.8,843.9 1034.8,843.9 C1029.8,843.9 1024.7,844.1 1019.7,844.2 C1014.6,844.2 1009.6,844.2 1004.5,844.3 C999.5,844.3 994.5,844.5 989.4,844.5 C984.4,844.5 979.3,843.9 974.3,843.9 C969.3,843.9 964.2,843.8 959.2,843.8 C954.1,843.8 949.1,843.9 944.1,844.0 C939.0,844.1 934.0,844.7 928.9,844.7 C923.9,844.7 918.9,844.5 913.8,844.4 C908.8,844.3 903.7,844.4 898.7,844.3 C893.6,844.3 888.6,843.8 883.6,843.8 C878.5,843.8 873.5,843.8 868.4,843.8 C863.4,843.8 858.4,843.0 853.3,842.7 C848.3,842.4 843.2,842.1 838.2,842.1 C833.2,842.1 828.1,843.4 823.1,843.7 C818.0,844.1 813.0,844.3 808.0,844.3 C802.9,844.4 797.9,844.4 792.8,844.4 C787.8,844.5 782.8,844.5 777.7,844.5 C772.7,844.5 767.6,844.4 762.6,844.4 C757.5,844.4 752.5,844.4 747.5,844.5 C742.4,844.6 737.4,844.8 732.3,844.8 C727.3,844.8 722.3,844.8 717.2,844.6 C712.2,844.5 707.1,842.4 702.1,842.4 C697.1,842.4 692.0,843.6 687.0,844.0 C681.9,844.4 676.9,844.8 671.9,844.8 C666.8,844.8 661.8,844.8 656.7,844.7 C651.7,844.6 646.7,844.4 641.6,844.3 C636.6,844.2 631.5,844.1 626.5,844.1 C621.4,844.1 616.4,844.2 611.4,844.2 C606.3,844.3 601.3,844.3 596.2,844.4 C591.2,844.5 586.2,844.6 581.1,844.6 C576.1,844.6 571.0,844.7 566.0,844.7 Z" fill="#efd4de" stroke="none"/>
<path d="M566.0,844.7 C571.0,844.7 576.1,844.6 581.1,844.6 C586.2,844.6 591.2,844.5 596.2,844.4 C601.3,844.3 606.3,844.3 611.4,844.2 C616.4,844.2 621.4,844.1 626.5,844.1 C631.5,844.1 636.6,844.2 641.6,844.3 C646.7,844.4 651.7,844.6 656.7,844.7 C661.8,844.8 666.8,844.8 671.9,844.8 C676.9,844.8 681.9,844.4 687.0,844.0 C692.0,843.6 697.1,842.4 702.1,842.4 C707.1,842.4 712.2,844.5 717.2,844.6 C722.3,844.8 727.3,844.8 732.3,844.8 C737.4,844.8 742.4,844.6 747.5,844.5 C752.5,844.4 757.5,844.4 762.6,844.4 C767.6,844.4 772.7,844.5 777.7,844.5 C782.8,844.5 787.8,844.5 792.8,844.4 C797.9,844.4 802.9,844.4 808.0,844.3 C813.0,844.3 818.0,844.1 823.1,843.7 C828.1,843.4 833.2,842.1 838.2,842.1 C843.2,842.1 848.3,842.4 853.3,842.7 C858.4,843.0 863.4,843.8 868.4,843.8 C873.5,843.8 878.5,843.8 883.6,843.8 C888.6,843.8 893.6,844.3 898.7,844.3 C903.7,844.4 908.8,844.3 913.8,844.4 C918.9,844.5 923.9,844.7 928.9,844.7 C934.0,844.7 939.0,844.1 944.1,844.0 C949.1,843.9 954.1,843.8 959.2,843.8 C964.2,843.8 969.3,843.9 974.3,843.9 C979.3,843.9 984.4,844.5 989.4,844.5 C994.5,844.5 999.5,844.3 1004.5,844.3 C1009.6,844.2 1014.6,844.2 1019.7,844.2 C1024.7,844.1 1029.8,843.9 1034.8,843.9 C1039.8,843.9 1044.9,844.0 1049.9,844.1 C1055.0,844.2 1060.0,844.4 1065.0,844.4 C1070.1,844.5 1075.1,844.4 1080.2,844.5 C1085.2,844.5 1090.2,844.7 1095.3,844.7 C1100.3,844.7 1105.4,844.6 1110.4,844.6 C1115.4,844.6 1120.5,844.7 1125.5,844.7 C1130.6,844.7 1135.6,844.3 1140.6,844.2 C1145.7,844.0 1150.7,843.7 1155.8,843.7 C1160.8,843.7 1165.9,844.6 1170.9,844.6 C1175.9,844.6 1181.0,844.4 1186.0,844.4 C1191.1,844.3 1196.1,844.3 1201.1,844.3 C1206.2,844.3 1211.2,844.6 1216.3,844.6 C1221.3,844.6 1226.3,844.6 1231.4,844.6 C1236.4,844.6 1241.5,844.8 1246.5,844.8 C1251.5,844.8 1256.6,844.7 1261.6,844.4 C1266.7,844.2 1271.7,842.8 1276.7,842.8 C1281.8,842.8 1286.8,844.1 1291.9,844.5 C1296.9,844.8 1302.0,845.1 1307.0,845.1 C1312.0,845.1 1317.1,845.1 1322.1,845.0 C1327.2,844.9 1332.2,844.5 1337.2,844.5 C1342.3,844.5 1347.3,844.5 1352.4,844.5 C1357.4,844.5 1362.4,844.6 1367.5,844.6 C1372.5,844.6 1377.6,842.6 1382.6,842.6 C1387.6,842.6 1392.7,844.3 1397.7,844.5 C1402.8,844.8 1407.8,844.8 1412.8,844.9 C1417.9,845.0 1422.9,845.1 1428.0,845.1 C1433.0,845.1 1438.1,844.9 1443.1,844.6 C1448.1,844.2 1453.2,842.2 1458.2,842.2 C1463.3,842.2 1468.3,844.3 1473.3,844.3 C1478.4,844.3 1483.4,844.2 1488.5,844.0 C1493.5,843.8 1498.5,842.5 1503.6,842.5 C1508.6,842.5 1513.7,844.2 1518.7,844.2 C1523.7,844.2 1528.8,844.1 1533.8,844.1 C1538.9,844.1 1543.9,844.5 1548.9,844.6 C1554.0,844.8 1559.0,845.0 1564.1,845.0 C1569.1,845.0 1574.2,844.9 1579.2,844.8 C1584.2,844.7 1589.3,844.5 1594.3,844.4 C1599.4,844.3 1604.4,844.3 1609.4,844.3 C1614.5,844.2 1619.5,844.1 1624.6,844.1 C1629.6,844.1 1634.6,844.2 1639.7,844.2 C1644.7,844.2 1649.8,844.0 1654.8,844.0 C1659.8,844.0 1664.9,844.6 1669.9,844.8 C1675.0,844.9 1680.0,845.0 1685.1,845.0 C1690.1,845.0 1695.1,845.0 1700.2,845.0 C1705.2,844.9 1710.3,844.8 1715.3,844.6 C1720.3,844.3 1725.4,842.4 1730.4,842.4 C1735.5,842.4 1740.5,844.1 1745.5,844.4 C1750.6,844.7 1755.6,844.8 1760.7,844.8 C1765.7,844.8 1770.7,844.8 1775.8,844.8 C1780.8,844.8 1785.9,844.5 1790.9,844.5 C1795.9,844.5 1801.0,844.6 1806.0,844.6 C1811.1,844.6 1816.1,844.6 1821.2,844.6 C1826.2,844.6 1831.2,844.3 1836.3,844.3 C1841.3,844.3 1846.4,844.3 1851.4,844.3 C1856.4,844.3 1861.5,844.2 1866.5,844.2 C1871.6,844.2 1876.6,844.7 1881.6,844.8 C1886.7,844.8 1891.7,844.9 1896.8,844.9 C1901.8,844.9 1906.8,844.7 1911.9,844.7 C1916.9,844.7 1922.0,844.9 1927.0,844.9 C1932.0,844.9 1937.1,844.7 1942.1,844.7 C1947.2,844.7 1952.2,844.9 1957.3,844.9 C1962.3,844.9 1967.3,844.8 1972.4,844.8 C1977.4,844.8 1982.5,845.0 1987.5,845.0 C1992.5,845.0 1997.6,844.4 2002.6,844.4 C2007.7,844.4 2012.7,844.5 2017.7,844.5 C2022.8,844.5 2027.8,844.1 2032.9,844.0 C2037.9,843.9 2042.9,843.9 2048.0,843.8 C2053.0,843.8 2058.1,843.8 2063.1,843.6 C2068.1,843.5 2073.2,841.6 2078.2,841.6 C2083.3,841.6 2088.3,843.0 2093.4,843.6 C2098.4,844.1 2103.4,844.9 2108.5,845.0 C2113.5,845.0 2118.6,845.0 2123.6,845.0 C2128.6,845.0 2133.7,844.9 2138.7,844.8 C2143.8,844.7 2148.8,844.6 2153.8,844.3 C2158.9,843.9 2163.9,842.7 2169.0,842.7 C2174.0,842.7 2179.0,844.4 2184.1,844.4 C2189.1,844.4 2194.2,842.7 2199.2,842.7 C2204.2,842.7 2209.3,844.3 2214.3,844.5 C2219.4,844.6 2224.4,844.7 2229.5,844.7 C2234.5,844.7 2239.5,842.6 2244.6,842.6 C2249.6,842.6 2254.7,844.3 2259.7,844.3 C2264.7,844.3 2269.8,844.3 2274.8,844.3 C2279.9,844.3 2284.9,844.3 2289.9,844.1 C2295.0,843.9 2300.0,842.6 2305.1,842.6 C2310.1,842.6 2315.1,843.8 2320.2,843.8 C2325.2,843.8 2330.3,842.7 2335.3,842.7 C2340.4,842.7 2345.4,844.5 2350.4,844.6 C2355.5,844.8 2360.5,844.9 2365.6,844.9 C2370.6,844.9 2375.6,844.6 2380.7,844.5 C2385.7,844.5 2390.8,844.5 2395.8,844.5 C2400.8,844.4 2405.9,844.1 2410.9,844.0 C2416.0,843.9 2421.0,843.8 2426.0,843.8 C2431.1,843.8 2436.1,844.0 2441.2,844.0 C2446.2,844.0 2451.2,843.9 2456.3,843.9 C2461.3,843.9 2466.4,844.4 2471.4,844.4 C2476.5,844.4 2481.5,842.3 2486.5,842.3 C2491.6,842.3 2496.6,843.6 2501.7,843.8 C2506.7,844.0 2511.7,844.1 2516.8,844.1 C2521.8,844.1 2526.9,842.3 2531.9,842.3 C2536.9,842.3 2542.0,843.6 2547.0,843.9 C2552.1,844.3 2557.1,844.4 2562.1,844.5 C2567.2,844.5 2572.2,844.5 2577.3,844.6 C2582.3,844.6 2587.3,844.8 2592.4,844.9 C2597.4,845.0 2602.5,845.2 2607.5,845.2 C2612.6,845.2 2617.6,845.0 2622.6,844.9 C2627.7,844.7 2632.7,844.7 2637.8,844.4 C2642.8,844.1 2647.8,842.9 2652.9,842.9 C2657.9,842.9 2663.0,843.6 2668.0,844.2 L2668.0,846.0 C1967.3,846.0 1266.7,846.0 566.0,846.0 Z" fill="#e2dbea" stroke="none"/>
<line x1="566" y1="716.6" x2="2668" y2="716.6" stroke="#c3cad6" stroke-width="1.6" stroke-dasharray="1.6 2"/>
<line x1="566" y1="587" x2="2668" y2="587" stroke="#69b296" stroke-width="4"/>
<path d="M566.0,623.0 C566.0,623.0 566.0,623.0 566.0,623.0 C570.8,623.0 575.6,606.9 580.4,606.9 C585.5,606.9 590.5,623.0 595.5,623.0 C600.2,623.0 604.8,606.7 609.5,604.7 C614.5,602.6 619.5,601.5 624.5,601.5 C629.2,601.5 633.9,611.5 638.5,614.4 C643.2,617.3 647.8,618.7 652.5,618.7 C657.5,618.7 662.5,615.5 667.6,615.5 C672.6,615.5 677.6,618.7 682.6,619.8 C687.6,620.9 692.6,621.9 697.7,621.9 C702.3,621.9 707.0,610.4 711.6,609.0 C716.7,607.6 721.7,606.9 726.7,606.9 C731.4,606.9 736.0,613.3 740.7,613.3 C745.7,613.3 750.7,611.2 755.7,611.2 C760.4,611.2 765.1,611.9 769.7,612.3 C774.7,612.6 779.8,613.3 784.8,613.3 C789.8,613.3 794.8,613.3 799.8,613.3 C804.5,613.3 809.2,605.4 813.8,605.4 C818.8,605.4 823.9,610.0 828.9,614.4 C833.8,618.7 838.6,631.2 843.5,631.2 C848.7,631.2 853.8,621.2 859.0,615.5 C863.3,610.8 867.6,600.4 871.9,600.4 C876.9,600.4 881.9,610.5 887.0,610.5 C892.0,610.5 897.0,606.9 902.0,606.9 C906.7,606.9 911.3,613.3 916.0,613.3 C920.7,613.3 925.3,604.7 930.0,604.7 C935.0,604.7 940.0,615.5 945.0,615.5 C950.0,615.5 955.1,608.0 960.1,608.0 C964.7,608.0 969.4,615.5 974.1,615.5 C979.1,615.5 984.1,608.6 989.1,608.6 C993.8,608.6 998.4,613.0 1003.1,614.4 C1008.1,615.9 1013.1,617.0 1018.2,617.0 C1022.8,617.0 1027.5,603.2 1032.1,603.2 C1037.5,603.2 1042.9,603.9 1048.3,605.4 C1052.9,606.6 1057.6,612.3 1062.3,612.3 C1066.9,612.3 1071.6,607.6 1076.2,606.9 C1080.8,606.2 1085.4,605.8 1090.0,605.8 C1090.8,605.8 1091.7,605.8 1092.5,605.8 C1097.2,605.8 1101.8,610.1 1106.5,610.1 C1111.2,610.1 1115.8,608.7 1120.5,607.5 C1125.5,606.3 1130.5,602.6 1135.5,602.6 C1140.2,602.6 1144.9,607.2 1149.5,610.1 C1154.5,613.2 1159.6,620.9 1164.6,620.9 C1169.2,620.9 1173.9,606.2 1178.6,606.2 C1183.6,606.2 1188.6,622.4 1193.6,622.4 C1198.3,622.4 1202.9,609.3 1207.6,608.0 C1212.6,606.5 1217.6,605.8 1222.7,605.8 C1227.3,605.8 1232.0,607.3 1236.6,607.3 C1241.7,607.3 1246.7,601.9 1251.7,601.9 C1256.7,601.9 1261.7,618.7 1266.8,618.7 C1271.4,618.7 1276.1,611.2 1280.7,611.2 C1285.8,611.2 1290.8,612.7 1295.8,612.7 C1300.5,612.7 1305.1,606.9 1309.8,606.9 C1314.4,606.9 1319.1,607.8 1323.8,608.4 C1328.8,609.0 1333.8,610.5 1338.8,610.5 C1343.8,610.5 1348.9,606.9 1353.9,606.9 C1358.9,606.9 1363.9,613.3 1368.9,617.0 C1373.6,620.5 1378.3,628.4 1382.9,628.4 C1387.9,628.4 1393.0,610.5 1398.0,610.5 C1402.6,610.5 1407.3,619.8 1412.0,619.8 C1417.0,619.8 1422.0,598.9 1427.0,598.9 C1431.7,598.9 1436.3,605.0 1441.0,606.9 C1446.0,608.9 1451.0,609.4 1456.0,610.1 C1460.7,610.8 1465.4,611.2 1470.0,611.2 C1475.0,611.2 1480.1,608.0 1485.1,608.0 C1489.7,608.0 1494.4,612.9 1499.1,614.4 C1504.1,616.0 1509.1,615.7 1514.1,617.0 C1518.8,618.2 1523.4,621.5 1528.1,621.5 C1532.8,621.5 1537.4,607.2 1542.1,606.2 C1547.1,605.2 1552.1,604.7 1557.1,604.7 C1562.2,604.7 1567.2,605.1 1572.2,605.8 C1577.2,606.5 1582.2,611.2 1587.3,611.2 C1591.9,611.2 1596.6,602.2 1601.2,602.2 C1605.8,602.2 1610.4,603.7 1615.0,606.9 C1615.8,607.5 1616.7,608.4 1617.5,609.0 C1622.2,612.8 1626.8,616.1 1631.5,616.1 C1636.2,616.1 1640.8,611.2 1645.5,611.2 C1650.5,611.2 1655.5,612.3 1660.5,612.3 C1665.2,612.3 1669.9,608.2 1674.5,608.0 C1679.5,607.7 1684.6,607.5 1689.6,607.5 C1694.2,607.5 1698.9,613.3 1703.6,613.3 C1708.6,613.3 1713.6,609.0 1718.6,609.0 C1723.6,609.0 1728.7,613.3 1733.7,613.3 C1738.7,613.3 1743.7,612.2 1748.7,610.1 C1753.4,608.1 1758.1,601.5 1762.7,601.5 C1767.4,601.5 1772.0,606.5 1776.7,609.0 C1781.7,611.8 1786.7,617.6 1791.8,617.6 C1796.8,617.6 1801.8,603.2 1806.8,603.2 C1811.8,603.2 1816.9,619.4 1821.9,619.4 C1826.5,619.4 1831.2,609.7 1835.9,609.7 C1840.9,609.7 1845.9,614.8 1850.9,614.8 C1855.6,614.8 1860.2,611.9 1864.9,610.1 C1869.6,608.3 1874.2,604.1 1878.9,604.1 C1884.3,604.1 1889.6,604.7 1895.0,605.8 C1899.7,606.8 1904.3,614.4 1909.0,614.4 C1913.6,614.4 1918.3,604.1 1923.0,604.1 C1928.0,604.1 1933.0,607.6 1938.0,609.0 C1942.7,610.3 1947.3,612.3 1952.0,612.3 C1957.0,612.3 1962.0,612.3 1967.1,612.3 C1971.7,612.3 1976.4,610.1 1981.0,610.1 C1986.1,610.1 1991.1,617.0 1996.1,617.0 C2000.8,617.0 2005.4,614.5 2010.1,612.7 C2015.1,610.8 2020.1,605.8 2025.1,605.8 C2030.2,605.8 2035.2,626.2 2040.2,626.2 C2044.9,626.2 2049.5,609.0 2054.2,609.0 C2058.8,609.0 2063.5,609.3 2068.2,609.7 C2073.2,610.1 2078.2,612.7 2083.2,612.7 C2088.2,612.7 2093.3,609.0 2098.3,609.0 C2102.9,609.0 2107.6,609.7 2112.3,609.7 C2116.9,609.7 2121.6,609.7 2126.2,609.7 C2130.8,609.7 2135.4,609.3 2140.0,609.0 C2145.6,608.8 2151.3,608.1 2156.9,608.1 C2161.7,608.1 2166.4,614.7 2171.2,614.7 C2176.3,614.7 2181.4,608.5 2186.5,608.5 C2191.2,608.5 2196.0,622.8 2200.7,622.8 C2205.5,622.8 2210.2,601.5 2215.0,601.5 C2220.1,601.5 2225.2,605.7 2230.3,607.4 C2235.1,609.1 2239.8,611.8 2244.6,611.8 C2249.3,611.8 2254.1,601.9 2258.8,601.9 C2263.9,601.9 2269.0,605.9 2274.2,607.4 C2278.9,608.8 2283.7,609.6 2288.4,610.7 C2293.2,611.8 2297.9,611.8 2302.7,614.0 C2307.4,616.2 2312.1,623.9 2316.9,623.9 C2321.6,623.9 2326.4,610.7 2331.1,610.7 C2336.3,610.7 2341.4,611.2 2346.5,611.2 C2351.2,611.2 2356.0,608.8 2360.7,608.5 C2365.8,608.2 2371.0,608.4 2376.1,608.1 C2380.8,607.8 2385.6,606.3 2390.3,606.3 C2395.1,606.3 2399.8,609.1 2404.6,610.7 C2409.3,612.4 2414.1,616.2 2418.8,616.2 C2423.6,616.2 2428.3,607.4 2433.0,607.4 C2438.5,607.4 2444.0,607.4 2449.5,607.4 C2454.2,607.4 2459.0,616.9 2463.7,616.9 C2468.5,616.9 2473.2,614.9 2478.0,614.0 C2482.7,613.2 2487.5,611.8 2492.2,611.8 C2497.3,611.8 2502.4,614.0 2507.6,614.0 C2512.7,614.0 2517.8,614.0 2522.9,614.0 C2527.3,614.0 2531.7,622.1 2536.1,622.1 C2540.8,622.1 2545.5,609.5 2550.3,607.4 C2555.4,605.2 2560.5,604.1 2565.6,604.1 C2570.4,604.1 2575.1,606.8 2579.9,606.8 C2584.6,606.8 2589.4,601.5 2594.1,601.5 C2599.2,601.5 2604.4,621.3 2609.5,621.3 C2614.2,621.3 2619.0,605.2 2623.7,605.2 C2628.5,605.2 2633.2,621.7 2638.0,621.7 C2642.7,621.7 2647.5,612.1 2652.2,608.5 C2657.5,604.6 2662.7,599.7 2668.0,599.7 C2668.0,599.7 2668.0,599.7 2668.0,599.7" fill="none" stroke="#6a96be" stroke-width="3.5" stroke-linejoin="round" stroke-linecap="round" />
<path d="M566.0,822.3 C566.0,822.3 566.0,822.3 566.0,822.3 C570.8,822.3 575.6,831.5 580.4,831.5 C585.5,831.5 590.5,822.3 595.5,822.3 C600.2,822.3 604.8,831.0 609.5,832.6 C614.5,834.3 619.5,835.2 624.5,835.2 C629.2,835.2 633.9,827.6 638.5,826.1 C643.2,824.7 647.8,824.0 652.5,824.0 C657.5,824.0 662.5,826.1 667.6,826.1 C672.6,826.1 677.6,822.9 682.6,821.8 C687.6,820.8 692.6,819.7 697.7,819.7 C702.3,819.7 707.0,830.2 711.6,830.4 C716.7,830.7 721.7,830.9 726.7,830.9 C731.4,830.9 736.0,827.0 740.7,827.0 C745.7,827.0 750.7,827.6 755.7,827.6 C760.4,827.6 765.1,827.6 769.7,827.6 C774.7,827.6 779.8,827.0 784.8,827.0 C789.8,827.0 794.8,827.4 799.8,828.3 C804.5,829.1 809.2,832.4 813.8,832.4 C818.8,832.4 823.9,829.8 828.9,826.6 C833.8,823.4 838.6,813.2 843.5,813.2 C848.3,813.2 853.1,821.7 857.9,825.5 C862.6,829.2 867.2,835.6 871.9,835.6 C876.9,835.6 881.9,828.7 887.0,828.7 C892.0,828.7 897.0,832.6 902.0,832.6 C906.7,832.6 911.3,826.6 916.0,826.6 C920.7,826.6 925.3,833.5 930.0,833.5 C935.0,833.5 940.0,822.7 945.0,822.7 C950.0,822.7 955.1,831.3 960.1,831.3 C964.7,831.3 969.4,825.5 974.1,825.5 C979.1,825.5 984.1,832.6 989.1,832.6 C993.8,832.6 998.4,828.4 1003.1,827.0 C1008.1,825.5 1013.1,824.0 1018.2,824.0 C1022.8,824.0 1027.5,834.1 1032.1,834.1 C1037.2,834.1 1042.2,833.6 1047.2,832.6 C1052.2,831.6 1057.2,827.2 1062.3,827.2 C1066.9,827.2 1071.6,832.0 1076.2,832.6 C1080.8,833.2 1085.4,833.5 1090.0,833.5 C1090.8,833.5 1091.7,833.5 1092.5,833.5 C1097.2,833.5 1101.8,829.1 1106.5,829.1 C1111.2,829.1 1115.8,829.4 1120.5,829.8 C1125.5,830.3 1130.5,835.6 1135.5,835.6 C1140.2,835.6 1144.9,830.2 1149.5,828.3 C1154.5,826.2 1159.6,824.0 1164.6,824.0 C1169.2,824.0 1173.9,830.9 1178.6,830.9 C1183.6,830.9 1188.6,820.5 1193.6,820.5 C1198.3,820.5 1202.9,830.2 1207.6,830.9 C1212.6,831.6 1217.6,831.9 1222.7,831.9 C1227.3,831.9 1232.0,830.4 1236.6,830.4 C1241.7,830.4 1246.7,832.6 1251.7,832.6 C1256.7,832.6 1261.7,824.4 1266.8,824.4 C1271.4,824.4 1276.1,826.6 1280.7,827.0 C1285.8,827.4 1290.8,827.2 1295.8,827.6 C1300.5,828.0 1305.1,831.9 1309.8,831.9 C1314.4,831.9 1319.1,829.1 1323.8,829.1 C1328.8,829.1 1333.8,829.4 1338.8,829.8 C1343.8,830.2 1348.9,831.9 1353.9,831.9 C1358.9,831.9 1363.9,829.8 1368.9,826.6 C1373.6,823.6 1378.3,814.1 1382.9,814.1 C1387.9,814.1 1393.0,828.3 1398.0,828.3 C1402.6,828.3 1407.3,821.8 1412.0,821.8 C1417.0,821.8 1422.0,835.2 1427.0,835.2 C1431.7,835.2 1436.3,833.7 1441.0,831.9 C1446.0,830.1 1451.0,824.0 1456.0,824.0 C1460.7,824.0 1465.4,826.6 1470.0,827.6 C1475.0,828.8 1480.1,830.4 1485.1,830.4 C1489.7,830.4 1494.4,827.0 1499.1,825.5 C1504.1,823.9 1509.1,821.2 1514.1,821.2 C1519.1,821.2 1524.2,821.2 1529.2,821.2 C1533.8,821.2 1538.5,831.5 1543.2,831.9 C1548.2,832.4 1553.2,832.6 1558.2,832.6 C1562.9,832.6 1567.5,831.0 1572.2,830.4 C1577.2,829.8 1582.2,829.1 1587.3,829.1 C1591.9,829.1 1596.6,834.1 1601.2,834.1 C1605.8,834.1 1610.4,829.8 1615.0,829.8 C1615.8,829.8 1616.7,830.9 1617.5,830.9 C1622.2,830.9 1626.8,824.8 1631.5,824.8 C1636.2,824.8 1640.8,828.3 1645.5,828.3 C1650.5,828.3 1655.5,828.3 1660.5,828.3 C1665.2,828.3 1669.9,829.8 1674.5,830.4 C1679.5,831.1 1684.6,831.9 1689.6,831.9 C1694.2,831.9 1698.9,826.6 1703.6,826.6 C1708.6,826.6 1713.6,828.7 1718.6,828.7 C1723.6,828.7 1728.7,824.4 1733.7,824.4 C1738.7,824.4 1743.7,828.6 1748.7,830.4 C1753.4,832.2 1758.1,835.2 1762.7,835.2 C1767.4,835.2 1772.0,830.4 1776.7,828.7 C1781.7,826.9 1786.7,824.8 1791.8,824.8 C1796.4,824.8 1801.1,833.5 1805.7,833.5 C1810.8,833.5 1815.8,824.0 1820.8,824.0 C1825.8,824.0 1830.8,829.8 1835.9,829.8 C1840.9,829.8 1845.9,824.4 1850.9,824.4 C1855.6,824.4 1860.2,827.0 1864.9,828.7 C1869.6,830.4 1874.2,834.7 1878.9,834.7 C1884.3,834.7 1889.6,834.5 1895.0,834.1 C1899.7,833.7 1904.3,824.0 1909.0,824.0 C1913.6,824.0 1918.3,833.5 1923.0,833.5 C1927.6,833.5 1932.3,828.7 1937.0,828.3 C1942.0,827.9 1947.0,827.6 1952.0,827.6 C1957.0,827.6 1962.0,828.7 1967.1,828.7 C1971.7,828.7 1976.4,828.6 1981.0,828.3 C1986.1,828.0 1991.1,824.4 1996.1,824.4 C2000.8,824.4 2005.4,825.0 2010.1,826.1 C2015.1,827.4 2020.1,831.9 2025.1,831.9 C2030.2,831.9 2035.2,817.5 2040.2,817.5 C2044.9,817.5 2049.5,830.9 2054.2,830.9 C2058.8,830.9 2063.5,830.1 2068.2,829.1 C2073.2,828.1 2078.2,824.8 2083.2,824.8 C2088.2,824.8 2093.3,829.1 2098.3,829.1 C2102.9,829.1 2107.6,829.0 2112.3,828.7 C2116.9,828.5 2121.6,827.6 2126.2,827.6 C2130.8,827.6 2135.4,829.8 2140.0,829.8 C2145.6,829.8 2151.3,829.5 2156.9,829.0 C2161.7,828.5 2166.4,824.6 2171.2,824.6 C2176.3,824.6 2181.4,830.5 2186.5,830.5 C2191.2,830.5 2196.0,821.1 2200.7,821.1 C2205.5,821.1 2210.2,834.9 2215.0,834.9 C2220.1,834.9 2225.2,832.8 2230.3,831.2 C2235.1,829.6 2239.8,825.5 2244.6,825.5 C2249.3,825.5 2254.1,835.5 2258.8,835.5 C2263.9,835.5 2269.0,830.5 2274.2,830.5 C2278.9,830.5 2283.7,830.5 2288.4,830.5 C2293.2,830.5 2297.9,825.0 2302.7,823.9 C2307.4,822.9 2312.1,822.4 2316.9,822.4 C2322.0,822.4 2327.1,825.1 2332.2,826.1 C2337.0,827.1 2341.7,827.8 2346.5,828.3 C2351.2,828.9 2356.0,829.0 2360.7,829.4 C2365.8,829.9 2371.0,830.9 2376.1,831.2 C2380.8,831.5 2385.6,831.6 2390.3,831.6 C2395.1,831.6 2399.8,826.8 2404.6,826.8 C2409.7,826.8 2414.8,826.9 2419.9,827.2 C2424.6,827.5 2429.4,831.6 2434.1,831.6 C2439.3,831.6 2444.4,831.2 2449.5,830.5 C2454.2,829.8 2459.0,824.6 2463.7,824.6 C2468.5,824.6 2473.2,826.1 2478.0,826.1 C2482.7,826.1 2487.5,824.6 2492.2,824.6 C2497.3,824.6 2502.4,825.0 2507.6,825.5 C2512.7,826.0 2517.8,827.7 2522.9,827.7 C2527.3,827.7 2531.7,818.0 2536.1,818.0 C2541.2,818.0 2546.3,830.0 2551.4,831.6 C2556.1,833.1 2560.9,833.8 2565.6,833.8 C2570.4,833.8 2575.1,831.2 2579.9,831.2 C2585.0,831.2 2590.1,833.4 2595.2,833.4 C2600.0,833.4 2604.7,821.7 2609.5,821.7 C2614.2,821.7 2619.0,832.0 2623.7,832.0 C2628.8,832.0 2633.9,821.7 2639.1,821.7 C2643.8,821.7 2648.6,826.5 2653.3,829.0 C2658.0,831.4 2662.8,836.4 2667.5,836.4 C2667.7,836.4 2667.8,836.4 2668.0,836.4" fill="none" stroke="#c96b8a" stroke-width="3.5" stroke-linejoin="round" stroke-linecap="round" />
<path d="M566.0,844.7 C571.0,844.7 576.1,844.6 581.1,844.6 C586.2,844.6 591.2,844.5 596.2,844.4 C601.3,844.3 606.3,844.3 611.4,844.2 C616.4,844.2 621.4,844.1 626.5,844.1 C631.5,844.1 636.6,844.2 641.6,844.3 C646.7,844.4 651.7,844.6 656.7,844.7 C661.8,844.8 666.8,844.8 671.9,844.8 C676.9,844.8 681.9,844.4 687.0,844.0 C692.0,843.6 697.1,842.4 702.1,842.4 C707.1,842.4 712.2,844.5 717.2,844.6 C722.3,844.8 727.3,844.8 732.3,844.8 C737.4,844.8 742.4,844.6 747.5,844.5 C752.5,844.4 757.5,844.4 762.6,844.4 C767.6,844.4 772.7,844.5 777.7,844.5 C782.8,844.5 787.8,844.5 792.8,844.4 C797.9,844.4 802.9,844.4 808.0,844.3 C813.0,844.3 818.0,844.1 823.1,843.7 C828.1,843.4 833.2,842.1 838.2,842.1 C843.2,842.1 848.3,842.4 853.3,842.7 C858.4,843.0 863.4,843.8 868.4,843.8 C873.5,843.8 878.5,843.8 883.6,843.8 C888.6,843.8 893.6,844.3 898.7,844.3 C903.7,844.4 908.8,844.3 913.8,844.4 C918.9,844.5 923.9,844.7 928.9,844.7 C934.0,844.7 939.0,844.1 944.1,844.0 C949.1,843.9 954.1,843.8 959.2,843.8 C964.2,843.8 969.3,843.9 974.3,843.9 C979.3,843.9 984.4,844.5 989.4,844.5 C994.5,844.5 999.5,844.3 1004.5,844.3 C1009.6,844.2 1014.6,844.2 1019.7,844.2 C1024.7,844.1 1029.8,843.9 1034.8,843.9 C1039.8,843.9 1044.9,844.0 1049.9,844.1 C1055.0,844.2 1060.0,844.4 1065.0,844.4 C1070.1,844.5 1075.1,844.4 1080.2,844.5 C1085.2,844.5 1090.2,844.7 1095.3,844.7 C1100.3,844.7 1105.4,844.6 1110.4,844.6 C1115.4,844.6 1120.5,844.7 1125.5,844.7 C1130.6,844.7 1135.6,844.3 1140.6,844.2 C1145.7,844.0 1150.7,843.7 1155.8,843.7 C1160.8,843.7 1165.9,844.6 1170.9,844.6 C1175.9,844.6 1181.0,844.4 1186.0,844.4 C1191.1,844.3 1196.1,844.3 1201.1,844.3 C1206.2,844.3 1211.2,844.6 1216.3,844.6 C1221.3,844.6 1226.3,844.6 1231.4,844.6 C1236.4,844.6 1241.5,844.8 1246.5,844.8 C1251.5,844.8 1256.6,844.7 1261.6,844.4 C1266.7,844.2 1271.7,842.8 1276.7,842.8 C1281.8,842.8 1286.8,844.1 1291.9,844.5 C1296.9,844.8 1302.0,845.1 1307.0,845.1 C1312.0,845.1 1317.1,845.1 1322.1,845.0 C1327.2,844.9 1332.2,844.5 1337.2,844.5 C1342.3,844.5 1347.3,844.5 1352.4,844.5 C1357.4,844.5 1362.4,844.6 1367.5,844.6 C1372.5,844.6 1377.6,842.6 1382.6,842.6 C1387.6,842.6 1392.7,844.3 1397.7,844.5 C1402.8,844.8 1407.8,844.8 1412.8,844.9 C1417.9,845.0 1422.9,845.1 1428.0,845.1 C1433.0,845.1 1438.1,844.9 1443.1,844.6 C1448.1,844.2 1453.2,842.2 1458.2,842.2 C1463.3,842.2 1468.3,844.3 1473.3,844.3 C1478.4,844.3 1483.4,844.2 1488.5,844.0 C1493.5,843.8 1498.5,842.5 1503.6,842.5 C1508.6,842.5 1513.7,844.2 1518.7,844.2 C1523.7,844.2 1528.8,844.1 1533.8,844.1 C1538.9,844.1 1543.9,844.5 1548.9,844.6 C1554.0,844.8 1559.0,845.0 1564.1,845.0 C1569.1,845.0 1574.2,844.9 1579.2,844.8 C1584.2,844.7 1589.3,844.5 1594.3,844.4 C1599.4,844.3 1604.4,844.3 1609.4,844.3 C1614.5,844.2 1619.5,844.1 1624.6,844.1 C1629.6,844.1 1634.6,844.2 1639.7,844.2 C1644.7,844.2 1649.8,844.0 1654.8,844.0 C1659.8,844.0 1664.9,844.6 1669.9,844.8 C1675.0,844.9 1680.0,845.0 1685.1,845.0 C1690.1,845.0 1695.1,845.0 1700.2,845.0 C1705.2,844.9 1710.3,844.8 1715.3,844.6 C1720.3,844.3 1725.4,842.4 1730.4,842.4 C1735.5,842.4 1740.5,844.1 1745.5,844.4 C1750.6,844.7 1755.6,844.8 1760.7,844.8 C1765.7,844.8 1770.7,844.8 1775.8,844.8 C1780.8,844.8 1785.9,844.5 1790.9,844.5 C1795.9,844.5 1801.0,844.6 1806.0,844.6 C1811.1,844.6 1816.1,844.6 1821.2,844.6 C1826.2,844.6 1831.2,844.3 1836.3,844.3 C1841.3,844.3 1846.4,844.3 1851.4,844.3 C1856.4,844.3 1861.5,844.2 1866.5,844.2 C1871.6,844.2 1876.6,844.7 1881.6,844.8 C1886.7,844.8 1891.7,844.9 1896.8,844.9 C1901.8,844.9 1906.8,844.7 1911.9,844.7 C1916.9,844.7 1922.0,844.9 1927.0,844.9 C1932.0,844.9 1937.1,844.7 1942.1,844.7 C1947.2,844.7 1952.2,844.9 1957.3,844.9 C1962.3,844.9 1967.3,844.8 1972.4,844.8 C1977.4,844.8 1982.5,845.0 1987.5,845.0 C1992.5,845.0 1997.6,844.4 2002.6,844.4 C2007.7,844.4 2012.7,844.5 2017.7,844.5 C2022.8,844.5 2027.8,844.1 2032.9,844.0 C2037.9,843.9 2042.9,843.9 2048.0,843.8 C2053.0,843.8 2058.1,843.8 2063.1,843.6 C2068.1,843.5 2073.2,841.6 2078.2,841.6 C2083.3,841.6 2088.3,843.0 2093.4,843.6 C2098.4,844.1 2103.4,844.9 2108.5,845.0 C2113.5,845.0 2118.6,845.0 2123.6,845.0 C2128.6,845.0 2133.7,844.9 2138.7,844.8 C2143.8,844.7 2148.8,844.6 2153.8,844.3 C2158.9,843.9 2163.9,842.7 2169.0,842.7 C2174.0,842.7 2179.0,844.4 2184.1,844.4 C2189.1,844.4 2194.2,842.7 2199.2,842.7 C2204.2,842.7 2209.3,844.3 2214.3,844.5 C2219.4,844.6 2224.4,844.7 2229.5,844.7 C2234.5,844.7 2239.5,842.6 2244.6,842.6 C2249.6,842.6 2254.7,844.3 2259.7,844.3 C2264.7,844.3 2269.8,844.3 2274.8,844.3 C2279.9,844.3 2284.9,844.3 2289.9,844.1 C2295.0,843.9 2300.0,842.6 2305.1,842.6 C2310.1,842.6 2315.1,843.8 2320.2,843.8 C2325.2,843.8 2330.3,842.7 2335.3,842.7 C2340.4,842.7 2345.4,844.5 2350.4,844.6 C2355.5,844.8 2360.5,844.9 2365.6,844.9 C2370.6,844.9 2375.6,844.6 2380.7,844.5 C2385.7,844.5 2390.8,844.5 2395.8,844.5 C2400.8,844.4 2405.9,844.1 2410.9,844.0 C2416.0,843.9 2421.0,843.8 2426.0,843.8 C2431.1,843.8 2436.1,844.0 2441.2,844.0 C2446.2,844.0 2451.2,843.9 2456.3,843.9 C2461.3,843.9 2466.4,844.4 2471.4,844.4 C2476.5,844.4 2481.5,842.3 2486.5,842.3 C2491.6,842.3 2496.6,843.6 2501.7,843.8 C2506.7,844.0 2511.7,844.1 2516.8,844.1 C2521.8,844.1 2526.9,842.3 2531.9,842.3 C2536.9,842.3 2542.0,843.6 2547.0,843.9 C2552.1,844.3 2557.1,844.4 2562.1,844.5 C2567.2,844.5 2572.2,844.5 2577.3,844.6 C2582.3,844.6 2587.3,844.8 2592.4,844.9 C2597.4,845.0 2602.5,845.2 2607.5,845.2 C2612.6,845.2 2617.6,845.0 2622.6,844.9 C2627.7,844.7 2632.7,844.7 2637.8,844.4 C2642.8,844.1 2647.8,842.9 2652.9,842.9 C2657.9,842.9 2663.0,843.6 2668.0,844.2" fill="none" stroke="#9473b5" stroke-width="3.5" stroke-linejoin="round" stroke-linecap="round" />
<line x1="1776.5" y1="587" x2="1776.5" y2="845" stroke="#2e7d73" stroke-width="2"/>
<circle cx="1776.5" cy="570" r="7.5" fill="#317a72"/>
<line x1="566" y1="1092.3" x2="1505.5" y2="1092.3" stroke="#d9dce2" stroke-width="1.6" stroke-dasharray="1.6 2"/>
<line x1="566" y1="1280.5" x2="1505.5" y2="1280.5" stroke="#d9dce2" stroke-width="1.6" stroke-dasharray="1.6 2"/>
<line x1="566" y1="1468" x2="1505.5" y2="1468" stroke="#e4e7ec" stroke-width="3"/>
<path d="M566.0,1464.8 C567.6,1464.8 569.1,1464.8 570.7,1464.7 C572.3,1464.7 573.9,1463.8 575.4,1463.8 C577.0,1463.8 578.6,1463.8 580.2,1463.8 C581.7,1463.7 583.3,1463.2 584.9,1463.2 C586.5,1463.2 588.0,1464.0 589.6,1464.2 C591.2,1464.3 592.8,1464.3 594.3,1464.4 C595.9,1464.6 597.5,1465.5 599.0,1465.5 C600.6,1465.5 602.2,1465.1 603.8,1464.9 C605.3,1464.8 606.9,1464.8 608.5,1464.6 C610.1,1464.5 611.6,1464.2 613.2,1464.0 C614.8,1463.8 616.4,1463.7 617.9,1463.7 C619.5,1463.7 621.1,1464.1 622.7,1464.1 C624.2,1464.1 625.8,1464.0 627.4,1464.0 C628.9,1464.0 630.5,1464.2 632.1,1464.2 C633.7,1464.2 635.2,1463.6 636.8,1463.5 C638.4,1463.3 640.0,1463.3 641.5,1463.3 C643.1,1463.3 644.7,1464.0 646.3,1464.2 C647.8,1464.5 649.4,1464.6 651.0,1464.6 C652.6,1464.6 654.1,1464.5 655.7,1464.5 C657.3,1464.4 658.8,1463.8 660.4,1463.8 C662.0,1463.8 663.6,1464.8 665.1,1464.8 C666.7,1464.8 668.3,1464.7 669.9,1464.6 C671.4,1464.6 673.0,1464.6 674.6,1464.4 C676.2,1464.2 677.7,1463.5 679.3,1463.4 C680.9,1463.3 682.5,1463.2 684.0,1463.2 C685.6,1463.2 687.2,1463.6 688.7,1463.7 C690.3,1463.8 691.9,1463.8 693.5,1464.0 C695.0,1464.2 696.6,1464.9 698.2,1464.9 C699.8,1464.9 701.3,1464.2 702.9,1464.2 C704.5,1464.2 706.1,1464.4 707.6,1464.4 C709.2,1464.4 710.8,1464.1 712.4,1464.1 C713.9,1464.1 715.5,1464.4 717.1,1464.4 C718.6,1464.4 720.2,1463.8 721.8,1463.6 C723.4,1463.4 724.9,1463.3 726.5,1463.3 C728.1,1463.3 729.7,1463.8 731.2,1464.0 C732.8,1464.2 734.4,1464.1 736.0,1464.3 C737.5,1464.5 739.1,1465.1 740.7,1465.1 C742.3,1465.1 743.8,1464.4 745.4,1464.4 C747.0,1464.4 748.5,1464.4 750.1,1464.4 C751.7,1464.4 753.3,1464.0 754.8,1464.0 C756.4,1464.0 758.0,1464.3 759.6,1464.3 C761.1,1464.4 762.7,1464.4 764.3,1464.4 C765.9,1464.5 767.4,1464.6 769.0,1464.6 C770.6,1464.6 772.2,1464.3 773.7,1464.3 C775.3,1464.3 776.9,1464.8 778.4,1465.0 C780.0,1465.2 781.6,1465.3 783.2,1465.4 C784.7,1465.5 786.3,1465.6 787.9,1465.6 C789.5,1465.6 791.0,1465.1 792.6,1464.7 C794.2,1464.4 795.8,1463.7 797.3,1463.7 C798.9,1463.7 800.5,1463.8 802.1,1464.0 C803.6,1464.2 805.2,1464.5 806.8,1464.8 C808.4,1465.0 809.9,1465.4 811.5,1465.4 C813.1,1465.4 814.6,1465.2 816.2,1465.2 C817.8,1465.1 819.4,1465.1 820.9,1465.1 C822.5,1465.1 824.1,1465.5 825.7,1465.6 C827.2,1465.7 828.8,1465.8 830.4,1465.8 C832.0,1465.8 833.5,1465.1 835.1,1465.1 C836.7,1465.1 838.3,1465.5 839.8,1465.5 C841.4,1465.5 843.0,1464.4 844.5,1464.4 C846.1,1464.4 847.7,1465.1 849.3,1465.1 C850.8,1465.1 852.4,1464.6 854.0,1464.6 C855.6,1464.6 857.1,1465.3 858.7,1465.6 C860.3,1465.9 861.9,1465.9 863.4,1466.1 C865.0,1466.3 866.6,1466.6 868.2,1466.6 C869.7,1466.6 871.3,1466.1 872.9,1465.6 C874.4,1465.1 876.0,1464.1 877.6,1463.8 C879.2,1463.6 880.7,1463.5 882.3,1463.5 C883.9,1463.5 885.5,1463.5 887.0,1463.6 C888.6,1463.6 890.2,1464.4 891.8,1464.4 C893.3,1464.4 894.9,1464.4 896.5,1464.4 C898.1,1464.4 899.6,1464.3 901.2,1464.1 C902.8,1463.9 904.3,1463.2 905.9,1463.1 C907.5,1462.9 909.1,1462.8 910.6,1462.8 C912.2,1462.8 913.8,1463.3 915.4,1463.6 C916.9,1463.9 918.5,1464.5 920.1,1464.5 C921.7,1464.5 923.2,1464.5 924.8,1464.4 C926.4,1464.3 928.0,1464.2 929.5,1464.0 C931.1,1463.8 932.7,1463.4 934.2,1463.3 C935.8,1463.3 937.4,1463.3 939.0,1463.2 C940.5,1463.2 942.1,1463.2 943.7,1463.2 C945.3,1463.2 946.8,1463.1 948.4,1463.1 C950.0,1463.1 951.6,1463.3 953.1,1463.5 C954.7,1463.6 956.3,1463.7 957.9,1463.9 C959.4,1464.2 961.0,1464.9 962.6,1464.9 C964.1,1464.9 965.7,1464.4 967.3,1464.2 C968.9,1464.0 970.4,1464.1 972.0,1463.9 C973.6,1463.7 975.2,1463.2 976.7,1463.2 C978.3,1463.2 979.9,1463.2 981.5,1463.2 C983.0,1463.3 984.6,1463.6 986.2,1463.7 C987.8,1463.7 989.3,1463.7 990.9,1463.8 C992.5,1463.8 994.0,1464.3 995.6,1464.4 C997.2,1464.4 998.8,1464.4 1000.3,1464.5 C1001.9,1464.5 1003.5,1465.8 1005.1,1465.8 C1006.6,1465.8 1008.2,1465.0 1009.8,1465.0 C1011.4,1465.0 1012.9,1465.3 1014.5,1465.3 C1016.1,1465.3 1017.7,1464.2 1019.2,1464.2 C1020.8,1464.2 1022.4,1464.9 1023.9,1464.9 C1025.5,1464.9 1027.1,1463.9 1028.7,1463.7 C1030.2,1463.6 1031.8,1463.5 1033.4,1463.5 C1035.0,1463.5 1036.5,1463.7 1038.1,1463.9 C1039.7,1464.1 1041.3,1464.4 1042.8,1464.6 C1044.4,1464.8 1046.0,1464.9 1047.6,1464.9 C1049.1,1464.9 1050.7,1464.4 1052.3,1464.4 C1053.8,1464.4 1055.4,1465.0 1057.0,1465.0 C1058.6,1465.0 1060.1,1465.0 1061.7,1464.9 C1063.3,1464.9 1064.9,1464.3 1066.4,1464.0 C1068.0,1463.7 1069.6,1463.4 1071.2,1463.1 C1072.7,1462.7 1074.3,1462.3 1075.9,1462.1 C1077.5,1461.8 1079.0,1461.6 1080.6,1461.6 C1082.2,1461.6 1083.7,1461.6 1085.3,1461.7 C1086.9,1461.7 1088.5,1462.7 1090.0,1463.3 C1091.6,1463.8 1093.2,1464.9 1094.8,1464.9 C1096.3,1464.9 1097.9,1464.8 1099.5,1464.6 C1101.1,1464.4 1102.6,1463.5 1104.2,1463.5 C1105.8,1463.5 1107.4,1463.8 1108.9,1464.0 C1110.5,1464.2 1112.1,1464.5 1113.6,1464.7 C1115.2,1464.9 1116.8,1465.2 1118.4,1465.2 C1119.9,1465.2 1121.5,1464.6 1123.1,1464.6 C1124.7,1464.5 1126.2,1464.5 1127.8,1464.5 C1129.4,1464.5 1131.0,1464.8 1132.5,1464.9 C1134.1,1465.0 1135.7,1465.1 1137.3,1465.2 C1138.8,1465.2 1140.4,1465.3 1142.0,1465.3 C1143.5,1465.3 1145.1,1464.4 1146.7,1464.4 C1148.3,1464.4 1149.8,1464.4 1151.4,1464.3 C1153.0,1464.3 1154.6,1463.9 1156.1,1463.9 C1157.7,1463.9 1159.3,1465.0 1160.9,1465.0 C1162.4,1465.0 1164.0,1464.1 1165.6,1464.1 C1167.2,1464.1 1168.7,1464.3 1170.3,1464.3 C1171.9,1464.3 1173.4,1463.8 1175.0,1463.8 C1176.6,1463.8 1178.2,1463.8 1179.7,1463.8 C1181.3,1463.8 1182.9,1464.4 1184.5,1464.7 C1186.0,1465.0 1187.6,1465.2 1189.2,1465.4 C1190.8,1465.6 1192.3,1465.8 1193.9,1465.8 C1195.5,1465.8 1197.1,1465.5 1198.6,1465.4 C1200.2,1465.2 1201.8,1465.1 1203.3,1464.8 C1204.9,1464.6 1206.5,1463.9 1208.1,1463.8 C1209.6,1463.6 1211.2,1463.6 1212.8,1463.5 C1214.4,1463.4 1215.9,1463.3 1217.5,1463.3 C1219.1,1463.3 1220.7,1464.6 1222.2,1464.6 C1223.8,1464.6 1225.4,1464.0 1227.0,1464.0 C1228.5,1463.9 1230.1,1463.9 1231.7,1463.9 C1233.2,1463.8 1234.8,1463.7 1236.4,1463.7 C1238.0,1463.7 1239.5,1464.7 1241.1,1464.9 C1242.7,1465.1 1244.3,1465.1 1245.8,1465.2 C1247.4,1465.2 1249.0,1465.2 1250.6,1465.3 C1252.1,1465.3 1253.7,1465.4 1255.3,1465.4 C1256.9,1465.4 1258.4,1465.1 1260.0,1465.0 C1261.6,1464.9 1263.1,1464.9 1264.7,1464.8 C1266.3,1464.7 1267.9,1463.1 1269.4,1463.1 C1271.0,1463.1 1272.6,1463.9 1274.2,1464.2 C1275.7,1464.5 1277.3,1464.5 1278.9,1464.9 C1280.5,1465.2 1282.0,1466.2 1283.6,1466.2 C1285.2,1466.2 1286.8,1465.9 1288.3,1465.8 C1289.9,1465.6 1291.5,1465.5 1293.1,1465.3 C1294.6,1465.2 1296.2,1465.1 1297.8,1465.0 C1299.3,1464.9 1300.9,1464.6 1302.5,1464.5 C1304.1,1464.4 1305.6,1464.4 1307.2,1464.4 C1308.8,1464.3 1310.4,1464.3 1311.9,1464.3 C1313.5,1464.3 1315.1,1465.0 1316.7,1465.2 C1318.2,1465.4 1319.8,1465.5 1321.4,1465.5 C1323.0,1465.5 1324.5,1465.5 1326.1,1465.5 C1327.7,1465.5 1329.2,1464.7 1330.8,1464.5 C1332.4,1464.2 1334.0,1463.9 1335.5,1463.9 C1337.1,1463.9 1338.7,1464.5 1340.3,1464.7 C1341.8,1464.9 1343.4,1465.1 1345.0,1465.2 C1346.6,1465.4 1348.1,1465.6 1349.7,1465.6 C1351.3,1465.6 1352.9,1464.9 1354.4,1464.6 C1356.0,1464.3 1357.6,1463.9 1359.1,1463.8 C1360.7,1463.8 1362.3,1463.7 1363.9,1463.7 C1365.4,1463.7 1367.0,1464.2 1368.6,1464.4 C1370.2,1464.5 1371.7,1464.7 1373.3,1464.7 C1374.9,1464.7 1376.5,1464.7 1378.0,1464.6 C1379.6,1464.6 1381.2,1464.1 1382.8,1464.1 C1384.3,1464.1 1385.9,1464.3 1387.5,1464.3 C1389.0,1464.3 1390.6,1463.7 1392.2,1463.7 C1393.8,1463.7 1395.3,1463.7 1396.9,1463.6 C1398.5,1463.6 1400.1,1463.2 1401.6,1463.2 C1403.2,1463.2 1404.8,1464.4 1406.4,1464.4 C1407.9,1464.4 1409.5,1464.1 1411.1,1464.1 C1412.7,1464.1 1414.2,1464.7 1415.8,1464.8 C1417.4,1465.0 1418.9,1465.1 1420.5,1465.2 C1422.1,1465.2 1423.7,1465.4 1425.2,1465.4 C1426.8,1465.4 1428.4,1465.0 1430.0,1464.8 C1431.5,1464.6 1433.1,1464.1 1434.7,1464.1 C1436.3,1464.1 1437.8,1464.3 1439.4,1464.3 C1441.0,1464.3 1442.6,1464.1 1444.1,1464.1 C1445.7,1464.1 1447.3,1464.1 1448.8,1464.2 C1450.4,1464.3 1452.0,1465.0 1453.6,1465.2 C1455.1,1465.5 1456.7,1465.6 1458.3,1465.6 C1459.9,1465.6 1461.4,1465.5 1463.0,1465.3 C1464.6,1465.1 1466.2,1463.8 1467.7,1463.8 C1469.3,1463.8 1470.9,1464.0 1472.5,1464.0 C1474.0,1464.0 1475.6,1463.5 1477.2,1463.5 C1478.7,1463.5 1480.3,1463.5 1481.9,1463.5 C1483.5,1463.5 1485.0,1463.9 1486.6,1464.0 C1488.2,1464.1 1489.8,1464.0 1491.3,1464.1 C1492.9,1464.3 1494.5,1465.1 1496.1,1465.2 C1497.6,1465.3 1499.2,1465.3 1500.8,1465.3 C1502.4,1465.4 1503.9,1465.6 1505.5,1465.8" fill="none" stroke="#d1bf62" stroke-width="3" stroke-linejoin="round" stroke-linecap="round" />
<path d="M566.0,1446.5 C568.1,1407.2 570.2,1368.0 572.3,1368.0 C574.8,1368.0 577.3,1445.6 579.8,1445.6 C583.9,1445.6 588.1,1158.7 592.2,1158.7 C594.3,1158.7 596.3,1439.0 598.4,1439.0 C602.8,1439.0 607.3,1379.0 611.7,1379.0 C613.9,1379.0 616.2,1445.6 618.4,1445.6 C620.6,1445.6 622.8,1445.6 625.0,1445.6 C629.4,1445.6 633.9,1302.4 638.3,1302.4 C640.5,1302.4 642.8,1307.3 645.0,1317.0 C648.7,1333.0 652.3,1443.0 656.0,1443.0 C658.2,1443.0 660.5,1432.0 662.7,1432.0 C664.9,1432.0 667.2,1432.0 669.4,1432.0 C672.1,1432.0 674.7,1402.0 677.4,1402.0 C679.9,1402.0 682.5,1423.0 685.0,1430.0 C687.2,1436.1 689.4,1443.0 691.6,1443.0 C695.7,1443.0 699.9,1394.6 704.0,1394.6 C706.1,1394.6 708.1,1399.0 710.2,1399.0 C712.4,1399.0 714.6,1387.0 716.8,1387.0 C718.7,1387.0 720.7,1427.0 722.6,1427.0 C724.8,1427.0 727.0,1170.7 729.2,1170.7 C731.5,1170.7 733.7,1410.0 736.0,1416.8 C738.9,1425.6 741.9,1428.6 744.8,1430.0 C746.2,1430.7 747.6,1431.0 749.0,1431.0 C751.0,1431.0 753.0,1383.5 755.0,1383.5 C757.2,1383.5 759.4,1441.0 761.6,1441.0 C763.7,1441.0 765.7,1437.3 767.8,1430.0 C770.2,1421.5 772.6,1153.0 775.0,1153.0 C776.7,1153.0 778.3,1382.4 780.0,1388.0 C782.6,1396.7 785.2,1401.0 787.8,1401.0 C790.0,1401.0 792.2,1178.0 794.4,1178.0 C798.5,1178.0 802.7,1397.0 806.8,1397.0 C809.0,1397.0 811.3,1396.7 813.5,1396.0 C815.7,1395.4 817.8,1381.0 820.0,1381.0 C822.3,1381.0 824.5,1395.0 826.8,1406.0 C829.0,1416.9 831.3,1446.5 833.5,1446.5 C835.7,1446.5 837.8,1169.0 840.0,1169.0 C842.3,1169.0 844.5,1443.0 846.8,1443.0 C849.0,1443.0 851.2,1411.0 853.4,1411.0 C855.6,1411.0 857.8,1411.0 860.0,1411.0 C862.2,1411.0 864.5,1424.0 866.7,1424.0 C868.9,1424.0 871.2,1405.0 873.4,1405.0 C875.6,1405.0 877.8,1417.0 880.0,1419.0 C882.2,1421.0 884.5,1422.0 886.7,1422.0 C888.9,1422.0 891.1,1418.0 893.3,1418.0 C895.5,1418.0 897.8,1418.7 900.0,1420.0 C903.7,1422.2 907.3,1438.0 911.0,1438.0 C913.2,1438.0 915.5,1409.0 917.7,1409.0 C919.9,1409.0 922.2,1440.2 924.4,1442.0 C926.9,1444.0 929.5,1445.0 932.0,1445.0 C934.2,1445.0 936.3,1409.0 938.5,1409.0 C940.7,1409.0 942.8,1441.0 945.0,1441.0 C947.4,1441.0 949.9,1155.0 952.3,1155.0 C954.1,1155.0 955.8,1161.7 957.6,1175.0 C959.8,1191.9 962.1,1439.0 964.3,1439.0 C966.5,1439.0 968.8,1405.7 971.0,1405.7 C975.4,1405.7 979.8,1431.0 984.2,1437.0 C987.1,1441.0 990.1,1443.0 993.0,1443.0 C994.5,1443.0 996.0,1436.3 997.5,1423.0 C999.1,1409.1 1000.6,1170.7 1002.2,1170.7 C1006.6,1170.7 1011.1,1172.8 1015.5,1177.0 C1018.0,1179.4 1020.5,1434.5 1023.0,1434.5 C1025.2,1434.5 1027.5,1170.7 1029.7,1170.7 C1033.8,1170.7 1037.9,1444.7 1042.0,1444.7 C1044.3,1444.7 1046.5,1408.0 1048.8,1408.0 C1051.0,1408.0 1053.2,1415.3 1055.4,1416.8 C1057.6,1418.3 1059.8,1419.0 1062.0,1419.0 C1063.9,1419.0 1065.9,1387.0 1067.8,1387.0 C1070.0,1387.0 1072.3,1443.0 1074.5,1443.0 C1076.7,1443.0 1078.8,1411.0 1081.0,1411.0 C1083.3,1411.0 1085.5,1439.0 1087.8,1439.0 C1092.2,1439.0 1096.6,1165.4 1101.0,1165.4 C1103.3,1165.4 1105.5,1423.5 1107.8,1423.5 C1110.0,1423.5 1112.2,1407.9 1114.4,1403.5 C1116.5,1399.3 1118.5,1397.0 1120.6,1397.0 C1122.8,1397.0 1125.1,1424.8 1127.3,1424.8 C1129.2,1424.8 1131.1,1408.0 1133.0,1408.0 C1135.5,1408.0 1138.1,1443.0 1140.6,1443.0 C1142.5,1443.0 1144.4,1434.3 1146.3,1416.8 C1148.5,1396.3 1150.8,1165.4 1153.0,1165.4 C1157.4,1165.4 1161.9,1443.0 1166.3,1443.0 C1168.5,1443.0 1170.8,1408.0 1173.0,1408.0 C1175.2,1408.0 1177.4,1433.0 1179.6,1433.0 C1181.5,1433.0 1183.5,1411.5 1185.4,1411.5 C1187.5,1411.5 1189.5,1418.0 1191.6,1418.0 C1194.3,1418.0 1196.9,1406.1 1199.6,1404.8 C1201.4,1403.9 1203.1,1403.5 1204.9,1403.5 C1207.1,1403.5 1209.3,1433.0 1211.5,1433.0 C1213.9,1433.0 1216.2,1408.0 1218.6,1408.0 C1220.8,1408.0 1223.1,1437.7 1225.3,1437.7 C1227.4,1437.7 1229.4,1393.3 1231.5,1393.3 C1233.9,1393.3 1236.2,1439.0 1238.6,1439.0 C1240.7,1439.0 1242.7,1396.0 1244.8,1396.0 C1247.2,1396.0 1249.5,1441.0 1251.9,1441.0 C1253.9,1441.0 1256.0,1403.5 1258.0,1403.5 C1260.2,1403.5 1262.5,1430.0 1264.7,1430.0 C1266.9,1430.0 1269.2,1377.8 1271.4,1377.8 C1275.2,1377.8 1279.1,1437.7 1282.9,1437.7 C1287.6,1437.7 1292.3,1435.8 1297.0,1432.0 C1299.3,1430.2 1301.5,1144.0 1303.8,1144.0 C1307.9,1144.0 1311.9,1444.7 1316.0,1444.7 C1318.3,1444.7 1320.5,1165.4 1322.8,1165.4 C1324.9,1165.4 1326.9,1416.8 1329.0,1419.0 C1331.2,1421.3 1333.5,1420.9 1335.7,1422.5 C1340.3,1425.8 1344.8,1437.7 1349.4,1437.7 C1351.2,1437.7 1353.0,1419.5 1354.8,1419.0 C1357.3,1418.3 1359.8,1418.7 1362.3,1418.0 C1364.5,1417.4 1366.8,1397.0 1369.0,1397.0 C1371.2,1397.0 1373.4,1433.0 1375.6,1433.0 C1377.5,1433.0 1379.5,1278.0 1381.4,1278.0 C1383.6,1278.0 1385.8,1433.0 1388.0,1433.0 C1390.2,1433.0 1392.5,1428.3 1394.7,1419.0 C1396.9,1409.8 1399.1,1128.6 1401.3,1128.6 C1405.7,1128.6 1410.2,1442.0 1414.6,1442.0 C1416.8,1442.0 1419.1,1428.7 1421.3,1428.0 C1423.5,1427.3 1425.8,1427.7 1428.0,1427.0 C1430.2,1426.3 1432.4,1379.0 1434.6,1379.0 C1436.8,1379.0 1439.0,1433.0 1441.2,1433.0 C1443.1,1433.0 1445.1,1403.5 1447.0,1403.5 C1449.2,1403.5 1451.4,1414.6 1453.6,1414.6 C1455.8,1414.6 1458.1,1326.0 1460.3,1326.0 C1462.5,1326.0 1464.8,1397.0 1467.0,1397.0 C1469.2,1397.0 1471.4,1396.0 1473.6,1396.0 C1475.7,1396.0 1477.7,1443.0 1479.8,1443.0 C1482.0,1443.0 1484.3,1162.7 1486.5,1162.7 C1488.9,1162.7 1491.2,1403.1 1493.6,1419.0 C1497.6,1445.7 1501.5,1452.3 1505.5,1459.0" fill="none" stroke="#d48c53" stroke-width="3.5" stroke-linejoin="round" stroke-linecap="round" />
<path d="M566.0,1464.5 C567.6,1465.1 569.1,1465.8 570.7,1465.8 C572.3,1465.8 573.9,1465.6 575.4,1465.5 C577.0,1465.3 578.6,1465.2 580.2,1464.7 C581.7,1464.3 583.3,1462.6 584.9,1462.6 C586.5,1462.6 588.0,1462.7 589.6,1462.8 C591.2,1462.9 592.8,1463.6 594.3,1464.1 C595.9,1464.6 597.5,1465.6 599.0,1465.6 C600.6,1465.6 602.2,1465.3 603.8,1464.9 C605.3,1464.6 606.9,1463.9 608.5,1463.5 C610.1,1463.1 611.6,1462.5 613.2,1462.5 C614.8,1462.5 616.4,1463.1 617.9,1463.3 C619.5,1463.5 621.1,1463.6 622.7,1463.7 C624.2,1463.9 625.8,1464.2 627.4,1464.2 C628.9,1464.2 630.5,1464.2 632.1,1464.2 C633.7,1464.2 635.2,1464.2 636.8,1464.1 C638.4,1464.1 640.0,1464.0 641.5,1464.0 C643.1,1463.9 644.7,1463.9 646.3,1463.9 C647.8,1463.9 649.4,1464.0 651.0,1464.1 C652.6,1464.1 654.1,1464.2 655.7,1464.4 C657.3,1464.6 658.8,1465.2 660.4,1465.5 C662.0,1465.7 663.6,1465.9 665.1,1465.9 C666.7,1465.9 668.3,1465.8 669.9,1465.6 C671.4,1465.4 673.0,1463.4 674.6,1463.3 C676.2,1463.3 677.7,1463.3 679.3,1463.2 C680.9,1463.1 682.5,1461.9 684.0,1461.9 C685.6,1461.9 687.2,1462.0 688.7,1462.1 C690.3,1462.2 691.9,1462.2 693.5,1462.4 C695.0,1462.6 696.6,1463.7 698.2,1464.1 C699.8,1464.5 701.3,1464.9 702.9,1464.9 C704.5,1464.9 706.1,1463.7 707.6,1463.3 C709.2,1462.9 710.8,1462.8 712.4,1462.6 C713.9,1462.4 715.5,1462.3 717.1,1462.3 C718.6,1462.3 720.2,1463.2 721.8,1463.7 C723.4,1464.3 724.9,1465.0 726.5,1465.4 C728.1,1465.8 729.7,1466.0 731.2,1466.0 C732.8,1466.0 734.4,1465.6 736.0,1465.1 C737.5,1464.6 739.1,1463.0 740.7,1462.9 C742.3,1462.8 743.8,1462.7 745.4,1462.7 C747.0,1462.7 748.5,1463.1 750.1,1463.1 C751.7,1463.1 753.3,1463.1 754.8,1463.1 C756.4,1463.1 758.0,1463.2 759.6,1463.2 C761.1,1463.2 762.7,1462.6 764.3,1462.6 C765.9,1462.6 767.4,1463.7 769.0,1464.0 C770.6,1464.4 772.2,1464.3 773.7,1464.6 C775.3,1465.0 776.9,1466.1 778.4,1466.1 C780.0,1466.1 781.6,1465.3 783.2,1465.1 C784.7,1464.8 786.3,1464.9 787.9,1464.7 C789.5,1464.5 791.0,1463.9 792.6,1463.9 C794.2,1463.9 795.8,1464.0 797.3,1464.0 C798.9,1464.0 800.5,1463.7 802.1,1463.5 C803.6,1463.2 805.2,1463.0 806.8,1462.7 C808.4,1462.5 809.9,1462.0 811.5,1462.0 C813.1,1462.0 814.6,1462.5 816.2,1462.8 C817.8,1463.0 819.4,1463.2 820.9,1463.5 C822.5,1463.8 824.1,1464.4 825.7,1464.5 C827.2,1464.6 828.8,1464.7 830.4,1464.7 C832.0,1464.7 833.5,1463.9 835.1,1463.7 C836.7,1463.4 838.3,1463.2 839.8,1463.0 C841.4,1462.8 843.0,1462.5 844.5,1462.5 C846.1,1462.5 847.7,1463.7 849.3,1463.9 C850.8,1464.0 852.4,1464.0 854.0,1464.1 C855.6,1464.3 857.1,1464.7 858.7,1464.7 C860.3,1464.7 861.9,1464.6 863.4,1464.5 C865.0,1464.5 866.6,1464.3 868.2,1464.0 C869.7,1463.7 871.3,1462.8 872.9,1462.8 C874.4,1462.8 876.0,1462.9 877.6,1463.2 C879.2,1463.4 880.7,1464.2 882.3,1464.2 C883.9,1464.2 885.5,1463.6 887.0,1463.6 C888.6,1463.6 890.2,1463.9 891.8,1463.9 C893.3,1464.0 894.9,1464.0 896.5,1464.0 C898.1,1464.1 899.6,1466.1 901.2,1466.1 C902.8,1466.1 904.3,1465.3 905.9,1465.0 C907.5,1464.7 909.1,1464.8 910.6,1464.4 C912.2,1464.1 913.8,1462.9 915.4,1462.9 C916.9,1462.9 918.5,1464.7 920.1,1464.7 C921.7,1464.8 923.2,1464.7 924.8,1464.8 C926.4,1464.8 928.0,1466.5 929.5,1466.5 C931.1,1466.5 932.7,1464.5 934.2,1464.5 C935.8,1464.5 937.4,1464.7 939.0,1464.7 C940.5,1464.7 942.1,1462.6 943.7,1462.6 C945.3,1462.6 946.8,1462.7 948.4,1462.8 C950.0,1462.9 951.6,1463.2 953.1,1463.3 C954.7,1463.5 956.3,1463.4 957.9,1463.6 C959.4,1463.8 961.0,1464.5 962.6,1464.5 C964.1,1464.5 965.7,1464.1 967.3,1464.1 C968.9,1464.1 970.4,1464.2 972.0,1464.2 C973.6,1464.2 975.2,1463.5 976.7,1463.2 C978.3,1463.0 979.9,1462.7 981.5,1462.7 C983.0,1462.7 984.6,1463.4 986.2,1463.4 C987.8,1463.4 989.3,1463.4 990.9,1463.3 C992.5,1463.3 994.0,1463.2 995.6,1463.1 C997.2,1463.0 998.8,1463.0 1000.3,1462.9 C1001.9,1462.9 1003.5,1462.7 1005.1,1462.6 C1006.6,1462.5 1008.2,1462.3 1009.8,1462.3 C1011.4,1462.3 1012.9,1462.4 1014.5,1462.5 C1016.1,1462.6 1017.7,1463.7 1019.2,1463.7 C1020.8,1463.7 1022.4,1463.6 1023.9,1463.6 C1025.5,1463.6 1027.1,1463.6 1028.7,1463.6 C1030.2,1463.6 1031.8,1462.6 1033.4,1462.6 C1035.0,1462.6 1036.5,1462.8 1038.1,1463.0 C1039.7,1463.1 1041.3,1463.5 1042.8,1463.5 C1044.4,1463.6 1046.0,1463.5 1047.6,1463.6 C1049.1,1463.6 1050.7,1465.2 1052.3,1465.2 C1053.8,1465.2 1055.4,1464.1 1057.0,1464.1 C1058.6,1464.1 1060.1,1464.7 1061.7,1464.7 C1063.3,1464.7 1064.9,1463.6 1066.4,1463.6 C1068.0,1463.6 1069.6,1463.6 1071.2,1463.6 C1072.7,1463.6 1074.3,1463.7 1075.9,1463.8 C1077.5,1463.8 1079.0,1463.8 1080.6,1463.8 C1082.2,1463.8 1083.7,1464.7 1085.3,1464.7 C1086.9,1464.7 1088.5,1464.4 1090.0,1464.3 C1091.6,1464.1 1093.2,1463.8 1094.8,1463.7 C1096.3,1463.5 1097.9,1463.2 1099.5,1463.2 C1101.1,1463.2 1102.6,1463.2 1104.2,1463.3 C1105.8,1463.3 1107.4,1464.6 1108.9,1464.6 C1110.5,1464.6 1112.1,1464.1 1113.6,1464.1 C1115.2,1464.0 1116.8,1464.0 1118.4,1464.0 C1119.9,1464.0 1121.5,1462.3 1123.1,1462.3 C1124.7,1462.3 1126.2,1463.3 1127.8,1463.3 C1129.4,1463.3 1131.0,1462.7 1132.5,1462.6 C1134.1,1462.6 1135.7,1462.6 1137.3,1462.6 C1138.8,1462.5 1140.4,1462.1 1142.0,1462.1 C1143.5,1462.1 1145.1,1463.4 1146.7,1463.5 C1148.3,1463.6 1149.8,1463.7 1151.4,1463.7 C1153.0,1463.7 1154.6,1463.3 1156.1,1463.0 C1157.7,1462.7 1159.3,1461.9 1160.9,1461.9 C1162.4,1461.9 1164.0,1462.0 1165.6,1462.1 C1167.2,1462.3 1168.7,1463.1 1170.3,1463.1 C1171.9,1463.1 1173.4,1463.0 1175.0,1463.0 C1176.6,1463.0 1178.2,1463.2 1179.7,1463.3 C1181.3,1463.3 1182.9,1463.4 1184.5,1463.4 C1186.0,1463.4 1187.6,1463.4 1189.2,1463.4 C1190.8,1463.5 1192.3,1464.2 1193.9,1464.2 C1195.5,1464.2 1197.1,1463.4 1198.6,1463.2 C1200.2,1463.0 1201.8,1463.1 1203.3,1462.9 C1204.9,1462.7 1206.5,1461.5 1208.1,1461.5 C1209.6,1461.5 1211.2,1462.9 1212.8,1463.2 C1214.4,1463.6 1215.9,1463.5 1217.5,1463.8 C1219.1,1464.1 1220.7,1465.1 1222.2,1465.1 C1223.8,1465.1 1225.4,1463.9 1227.0,1463.9 C1228.5,1463.9 1230.1,1464.2 1231.7,1464.2 C1233.2,1464.2 1234.8,1464.1 1236.4,1464.1 C1238.0,1464.1 1239.5,1465.3 1241.1,1465.3 C1242.7,1465.3 1244.3,1464.9 1245.8,1464.6 C1247.4,1464.3 1249.0,1464.0 1250.6,1463.6 C1252.1,1463.1 1253.7,1461.8 1255.3,1461.7 C1256.9,1461.6 1258.4,1461.5 1260.0,1461.5 C1261.6,1461.5 1263.1,1462.6 1264.7,1463.0 C1266.3,1463.4 1267.9,1464.0 1269.4,1464.1 C1271.0,1464.3 1272.6,1464.4 1274.2,1464.4 C1275.7,1464.4 1277.3,1463.4 1278.9,1463.0 C1280.5,1462.7 1282.0,1462.3 1283.6,1462.3 C1285.2,1462.3 1286.8,1463.8 1288.3,1463.8 C1289.9,1463.8 1291.5,1462.9 1293.1,1462.9 C1294.6,1462.9 1296.2,1463.4 1297.8,1463.4 C1299.3,1463.4 1300.9,1461.9 1302.5,1461.9 C1304.1,1461.9 1305.6,1464.3 1307.2,1464.3 C1308.8,1464.3 1310.4,1463.3 1311.9,1463.3 C1313.5,1463.3 1315.1,1463.8 1316.7,1463.8 C1318.2,1463.8 1319.8,1462.2 1321.4,1462.2 C1323.0,1462.2 1324.5,1462.2 1326.1,1462.2 C1327.7,1462.3 1329.2,1462.9 1330.8,1463.3 C1332.4,1463.7 1334.0,1464.5 1335.5,1464.8 C1337.1,1465.0 1338.7,1465.1 1340.3,1465.1 C1341.8,1465.1 1343.4,1464.2 1345.0,1463.7 C1346.6,1463.2 1348.1,1462.0 1349.7,1462.0 C1351.3,1462.0 1352.9,1462.0 1354.4,1462.0 C1356.0,1462.0 1357.6,1462.3 1359.1,1462.5 C1360.7,1462.8 1362.3,1463.6 1363.9,1463.7 C1365.4,1463.8 1367.0,1463.9 1368.6,1463.9 C1370.2,1463.9 1371.7,1463.2 1373.3,1463.2 C1374.9,1463.2 1376.5,1463.2 1378.0,1463.2 C1379.6,1463.2 1381.2,1463.2 1382.8,1463.2 C1384.3,1463.2 1385.9,1464.3 1387.5,1464.8 C1389.0,1465.2 1390.6,1466.0 1392.2,1466.0 C1393.8,1466.0 1395.3,1466.0 1396.9,1465.9 C1398.5,1465.9 1400.1,1465.0 1401.6,1464.6 C1403.2,1464.2 1404.8,1463.6 1406.4,1463.4 C1407.9,1463.2 1409.5,1463.1 1411.1,1463.1 C1412.7,1463.1 1414.2,1463.1 1415.8,1463.1 C1417.4,1463.1 1418.9,1463.1 1420.5,1463.1 C1422.1,1463.1 1423.7,1462.8 1425.2,1462.8 C1426.8,1462.8 1428.4,1463.7 1430.0,1463.7 C1431.5,1463.7 1433.1,1463.7 1434.7,1463.7 C1436.3,1463.7 1437.8,1464.5 1439.4,1464.5 C1441.0,1464.5 1442.6,1464.1 1444.1,1464.0 C1445.7,1463.8 1447.3,1463.8 1448.8,1463.6 C1450.4,1463.4 1452.0,1462.8 1453.6,1462.8 C1455.1,1462.8 1456.7,1462.8 1458.3,1462.8 C1459.9,1462.8 1461.4,1462.8 1463.0,1462.9 C1464.6,1463.0 1466.2,1463.6 1467.7,1463.7 C1469.3,1463.7 1470.9,1463.8 1472.5,1463.8 C1474.0,1463.8 1475.6,1463.4 1477.2,1463.3 C1478.7,1463.2 1480.3,1463.2 1481.9,1463.2 C1483.5,1463.1 1485.0,1462.3 1486.6,1462.3 C1488.2,1462.3 1489.8,1462.8 1491.3,1462.8 C1492.9,1462.8 1494.5,1462.7 1496.1,1462.6 C1497.6,1462.5 1499.2,1462.1 1500.8,1462.1 C1502.4,1462.1 1503.9,1462.3 1505.5,1462.5" fill="none" stroke="#6a94c0" stroke-width="3.5" stroke-linejoin="round" stroke-linecap="round" />
<line x1="1107.8" y1="1092" x2="1107.8" y2="1468" stroke="#2e7d73" stroke-width="2"/>
<circle cx="1107.8" cy="1076.7" r="7.5" fill="#317a72"/>
<line x1="1725.4" y1="1092.3" x2="2665" y2="1092.3" stroke="#d9dce2" stroke-width="1.6" stroke-dasharray="1.6 2"/>
<line x1="1725.4" y1="1280.5" x2="2665" y2="1280.5" stroke="#d9dce2" stroke-width="1.6" stroke-dasharray="1.6 2"/>
<line x1="1725.4" y1="1468" x2="2665" y2="1468" stroke="#e4e7ec" stroke-width="3"/>
<path d="M1725.4,1451.3 C1727.0,1451.2 1728.5,1451.2 1730.1,1451.1 C1731.7,1451.0 1733.3,1450.7 1734.8,1450.5 C1736.4,1450.3 1738.0,1450.2 1739.6,1449.9 C1741.1,1449.7 1742.7,1449.0 1744.3,1449.0 C1745.9,1449.0 1747.4,1449.2 1749.0,1449.2 C1750.6,1449.2 1752.2,1449.0 1753.7,1449.0 C1755.3,1449.0 1756.9,1450.2 1758.5,1450.2 C1760.0,1450.2 1761.6,1449.1 1763.2,1449.1 C1764.7,1449.1 1766.3,1450.0 1767.9,1450.0 C1769.5,1450.1 1771.0,1450.0 1772.6,1450.1 C1774.2,1450.1 1775.8,1451.3 1777.3,1451.3 C1778.9,1451.3 1780.5,1450.5 1782.1,1450.5 C1783.6,1450.5 1785.2,1451.0 1786.8,1451.0 C1788.4,1451.0 1789.9,1449.3 1791.5,1449.3 C1793.1,1449.3 1794.7,1450.3 1796.2,1450.3 C1797.8,1450.3 1799.4,1449.9 1800.9,1449.9 C1802.5,1449.9 1804.1,1452.1 1805.7,1452.1 C1807.2,1452.1 1808.8,1452.1 1810.4,1452.0 C1812.0,1452.0 1813.5,1451.3 1815.1,1451.0 C1816.7,1450.7 1818.3,1450.4 1819.8,1450.4 C1821.4,1450.4 1823.0,1450.5 1824.6,1450.7 C1826.1,1450.9 1827.7,1451.6 1829.3,1451.9 C1830.8,1452.2 1832.4,1452.4 1834.0,1452.4 C1835.6,1452.4 1837.1,1450.0 1838.7,1450.0 C1840.3,1450.0 1841.9,1450.1 1843.4,1450.1 C1845.0,1450.2 1846.6,1450.6 1848.2,1451.2 C1849.7,1451.9 1851.3,1454.1 1852.9,1454.1 C1854.5,1454.1 1856.0,1453.9 1857.6,1453.7 C1859.2,1453.5 1860.8,1450.7 1862.3,1450.6 C1863.9,1450.6 1865.5,1450.6 1867.0,1450.6 C1868.6,1450.5 1870.2,1450.4 1871.8,1450.1 C1873.3,1449.9 1874.9,1449.3 1876.5,1449.0 C1878.1,1448.8 1879.6,1448.8 1881.2,1448.4 C1882.8,1448.1 1884.4,1446.9 1885.9,1446.9 C1887.5,1446.9 1889.1,1448.3 1890.7,1448.3 C1892.2,1448.3 1893.8,1447.2 1895.4,1447.2 C1897.0,1447.2 1898.5,1449.6 1900.1,1450.3 C1901.7,1451.0 1903.2,1451.0 1904.8,1451.3 C1906.4,1451.6 1908.0,1452.1 1909.5,1452.3 C1911.1,1452.6 1912.7,1452.5 1914.3,1452.9 C1915.8,1453.2 1917.4,1455.1 1919.0,1455.1 C1920.6,1455.1 1922.1,1454.9 1923.7,1454.6 C1925.3,1454.4 1926.9,1453.3 1928.4,1452.4 C1930.0,1451.5 1931.6,1449.6 1933.2,1449.2 C1934.7,1448.8 1936.3,1448.5 1937.9,1448.5 C1939.4,1448.5 1941.0,1448.8 1942.6,1449.3 C1944.2,1449.7 1945.7,1450.7 1947.3,1451.1 C1948.9,1451.6 1950.5,1451.8 1952.0,1452.0 C1953.6,1452.3 1955.2,1452.7 1956.8,1452.7 C1958.3,1452.7 1959.9,1451.5 1961.5,1451.4 C1963.1,1451.2 1964.6,1451.3 1966.2,1451.2 C1967.8,1451.1 1969.3,1450.9 1970.9,1450.9 C1972.5,1450.9 1974.1,1452.0 1975.6,1452.4 C1977.2,1452.9 1978.8,1453.7 1980.4,1453.7 C1981.9,1453.7 1983.5,1453.5 1985.1,1453.3 C1986.7,1453.1 1988.2,1452.6 1989.8,1452.3 C1991.4,1452.0 1993.0,1451.9 1994.5,1451.5 C1996.1,1451.1 1997.7,1450.4 1999.3,1449.9 C2000.8,1449.4 2002.4,1448.4 2004.0,1448.4 C2005.5,1448.4 2007.1,1448.5 2008.7,1448.7 C2010.3,1448.8 2011.8,1449.2 2013.4,1449.7 C2015.0,1450.3 2016.6,1451.9 2018.1,1451.9 C2019.7,1451.9 2021.3,1449.6 2022.9,1449.4 C2024.4,1449.1 2026.0,1449.3 2027.6,1449.0 C2029.2,1448.8 2030.7,1448.0 2032.3,1448.0 C2033.9,1448.0 2035.5,1448.9 2037.0,1448.9 C2038.6,1448.9 2040.2,1446.8 2041.7,1446.8 C2043.3,1446.8 2044.9,1446.9 2046.5,1447.1 C2048.0,1447.3 2049.6,1448.3 2051.2,1449.1 C2052.8,1449.9 2054.3,1452.1 2055.9,1452.1 C2057.5,1452.1 2059.1,1452.0 2060.6,1451.8 C2062.2,1451.6 2063.8,1450.7 2065.4,1450.7 C2066.9,1450.7 2068.5,1451.2 2070.1,1451.2 C2071.7,1451.2 2073.2,1448.8 2074.8,1448.7 C2076.4,1448.6 2077.9,1448.7 2079.5,1448.6 C2081.1,1448.5 2082.7,1448.4 2084.2,1448.4 C2085.8,1448.4 2087.4,1451.3 2089.0,1452.2 C2090.5,1453.2 2092.1,1453.8 2093.7,1454.3 C2095.3,1454.7 2096.8,1455.0 2098.4,1455.0 C2100.0,1455.0 2101.6,1454.8 2103.1,1454.5 C2104.7,1454.3 2106.3,1453.2 2107.9,1453.0 C2109.4,1452.7 2111.0,1452.8 2112.6,1452.6 C2114.1,1452.4 2115.7,1451.8 2117.3,1451.6 C2118.9,1451.4 2120.4,1451.2 2122.0,1451.2 C2123.6,1451.2 2125.2,1451.3 2126.7,1451.4 C2128.3,1451.5 2129.9,1454.2 2131.5,1454.2 C2133.0,1454.2 2134.6,1454.1 2136.2,1454.0 C2137.8,1454.0 2139.3,1453.5 2140.9,1453.0 C2142.5,1452.5 2144.0,1451.0 2145.6,1451.0 C2147.2,1451.0 2148.8,1452.7 2150.3,1452.7 C2151.9,1452.7 2153.5,1452.7 2155.1,1452.7 C2156.6,1452.7 2158.2,1454.1 2159.8,1454.1 C2161.4,1454.1 2162.9,1451.6 2164.5,1451.5 C2166.1,1451.4 2167.7,1451.5 2169.2,1451.4 C2170.8,1451.2 2172.4,1449.5 2174.0,1449.5 C2175.5,1449.5 2177.1,1450.9 2178.7,1451.5 C2180.2,1452.0 2181.8,1452.8 2183.4,1452.8 C2185.0,1452.8 2186.5,1451.9 2188.1,1451.4 C2189.7,1450.8 2191.3,1449.9 2192.8,1449.4 C2194.4,1449.0 2196.0,1448.7 2197.6,1448.7 C2199.1,1448.7 2200.7,1449.6 2202.3,1449.6 C2203.9,1449.6 2205.4,1448.9 2207.0,1448.9 C2208.6,1448.9 2210.2,1449.4 2211.7,1449.7 C2213.3,1450.1 2214.9,1450.4 2216.4,1451.0 C2218.0,1451.6 2219.6,1453.3 2221.2,1453.3 C2222.7,1453.3 2224.3,1451.6 2225.9,1451.6 C2227.5,1451.6 2229.0,1452.2 2230.6,1452.2 C2232.2,1452.2 2233.8,1451.4 2235.3,1451.4 C2236.9,1451.4 2238.5,1453.1 2240.1,1453.1 C2241.6,1453.1 2243.2,1451.4 2244.8,1450.9 C2246.4,1450.5 2247.9,1450.5 2249.5,1450.2 C2251.1,1450.0 2252.6,1449.2 2254.2,1449.2 C2255.8,1449.2 2257.4,1449.3 2258.9,1449.5 C2260.5,1449.6 2262.1,1451.2 2263.7,1451.2 C2265.2,1451.2 2266.8,1451.3 2268.4,1451.3 C2270.0,1451.3 2271.5,1451.2 2273.1,1451.0 C2274.7,1450.9 2276.3,1450.6 2277.8,1450.3 C2279.4,1450.1 2281.0,1449.6 2282.5,1449.6 C2284.1,1449.6 2285.7,1451.7 2287.3,1451.7 C2288.8,1451.7 2290.4,1451.0 2292.0,1450.9 C2293.6,1450.9 2295.1,1450.8 2296.7,1450.8 C2298.3,1450.8 2299.9,1450.9 2301.4,1451.2 C2303.0,1451.4 2304.6,1453.4 2306.2,1454.4 C2307.7,1455.4 2309.3,1457.1 2310.9,1457.1 C2312.5,1457.1 2314.0,1456.4 2315.6,1455.8 C2317.2,1455.2 2318.7,1453.9 2320.3,1453.6 C2321.9,1453.2 2323.5,1453.2 2325.0,1453.0 C2326.6,1452.9 2328.2,1453.0 2329.8,1452.8 C2331.3,1452.7 2332.9,1452.0 2334.5,1451.5 C2336.1,1451.0 2337.6,1449.9 2339.2,1449.9 C2340.8,1449.9 2342.4,1450.4 2343.9,1450.5 C2345.5,1450.7 2347.1,1450.7 2348.7,1450.7 C2350.2,1450.7 2351.8,1449.4 2353.4,1448.7 C2354.9,1448.0 2356.5,1446.6 2358.1,1446.6 C2359.7,1446.6 2361.2,1447.8 2362.8,1448.3 C2364.4,1448.7 2366.0,1448.9 2367.5,1449.3 C2369.1,1449.7 2370.7,1450.7 2372.3,1450.7 C2373.8,1450.7 2375.4,1450.2 2377.0,1450.2 C2378.6,1450.2 2380.1,1451.8 2381.7,1451.8 C2383.3,1451.8 2384.9,1451.6 2386.4,1451.6 C2388.0,1451.6 2389.6,1451.9 2391.1,1451.9 C2392.7,1451.9 2394.3,1450.2 2395.9,1450.2 C2397.4,1450.2 2399.0,1450.2 2400.6,1450.2 C2402.2,1450.1 2403.7,1448.4 2405.3,1448.4 C2406.9,1448.4 2408.5,1450.5 2410.0,1450.7 C2411.6,1451.0 2413.2,1451.0 2414.8,1451.1 C2416.3,1451.2 2417.9,1451.4 2419.5,1451.4 C2421.1,1451.4 2422.6,1449.9 2424.2,1449.7 C2425.8,1449.6 2427.3,1449.5 2428.9,1449.5 C2430.5,1449.5 2432.1,1451.1 2433.6,1451.1 C2435.2,1451.1 2436.8,1450.1 2438.4,1449.7 C2439.9,1449.4 2441.5,1449.2 2443.1,1448.8 C2444.7,1448.5 2446.2,1447.6 2447.8,1447.6 C2449.4,1447.6 2451.0,1451.1 2452.5,1452.3 C2454.1,1453.4 2455.7,1454.3 2457.2,1454.5 C2458.8,1454.7 2460.4,1454.8 2462.0,1454.8 C2463.5,1454.8 2465.1,1452.7 2466.7,1452.7 C2468.3,1452.7 2469.8,1454.0 2471.4,1454.0 C2473.0,1454.0 2474.6,1453.9 2476.1,1453.9 C2477.7,1453.8 2479.3,1453.0 2480.9,1452.6 C2482.4,1452.3 2484.0,1451.7 2485.6,1451.7 C2487.2,1451.7 2488.7,1452.2 2490.3,1452.5 C2491.9,1452.8 2493.4,1453.7 2495.0,1453.7 C2496.6,1453.7 2498.2,1451.7 2499.7,1451.7 C2501.3,1451.7 2502.9,1452.9 2504.5,1453.3 C2506.0,1453.8 2507.6,1454.1 2509.2,1454.5 C2510.8,1454.9 2512.3,1455.7 2513.9,1455.7 C2515.5,1455.7 2517.1,1455.3 2518.6,1454.3 C2520.2,1453.4 2521.8,1450.1 2523.4,1450.1 C2524.9,1450.1 2526.5,1450.2 2528.1,1450.2 C2529.6,1450.2 2531.2,1449.2 2532.8,1449.2 C2534.4,1449.2 2535.9,1452.0 2537.5,1452.0 C2539.1,1452.0 2540.7,1452.0 2542.2,1452.0 C2543.8,1452.0 2545.4,1452.0 2547.0,1451.9 C2548.5,1451.8 2550.1,1449.7 2551.7,1449.5 C2553.3,1449.2 2554.8,1449.3 2556.4,1449.1 C2558.0,1449.0 2559.6,1448.7 2561.1,1448.7 C2562.7,1448.7 2564.3,1450.2 2565.8,1450.2 C2567.4,1450.2 2569.0,1449.1 2570.6,1449.1 C2572.1,1449.1 2573.7,1449.6 2575.3,1449.6 C2576.9,1449.6 2578.4,1447.3 2580.0,1447.3 C2581.6,1447.3 2583.2,1448.9 2584.7,1449.4 C2586.3,1449.8 2587.9,1449.6 2589.5,1450.1 C2591.0,1450.5 2592.6,1453.3 2594.2,1453.9 C2595.7,1454.5 2597.3,1454.8 2598.9,1454.8 C2600.5,1454.8 2602.0,1454.7 2603.6,1454.5 C2605.2,1454.3 2606.8,1452.3 2608.3,1451.2 C2609.9,1450.1 2611.5,1448.8 2613.1,1448.0 C2614.6,1447.2 2616.2,1446.6 2617.8,1446.6 C2619.4,1446.6 2620.9,1447.6 2622.5,1448.1 C2624.1,1448.5 2625.7,1449.2 2627.2,1449.2 C2628.8,1449.2 2630.4,1448.3 2631.9,1448.3 C2633.5,1448.3 2635.1,1449.2 2636.7,1449.2 C2638.2,1449.2 2639.8,1447.4 2641.4,1447.4 C2643.0,1447.4 2644.5,1450.0 2646.1,1450.0 C2647.7,1450.0 2649.3,1449.5 2650.8,1449.5 C2652.4,1449.5 2654.0,1450.9 2655.6,1450.9 C2657.1,1450.9 2658.7,1450.4 2660.3,1450.4 C2661.9,1450.4 2663.4,1458.2 2665.0,1466.0" fill="none" stroke="#b84a3a" stroke-width="3.5" stroke-linejoin="round" stroke-linecap="round" />
<path d="M1725.4,1448.7 C1727.0,1447.7 1728.5,1446.7 1730.1,1446.7 C1731.7,1446.7 1733.3,1446.9 1734.8,1447.3 C1736.4,1447.7 1738.0,1449.0 1739.6,1450.2 C1741.1,1451.3 1742.7,1453.4 1744.3,1454.4 C1745.9,1455.4 1747.4,1456.0 1749.0,1456.0 C1750.6,1456.0 1752.2,1455.4 1753.7,1454.7 C1755.3,1453.9 1756.9,1451.6 1758.5,1451.6 C1760.0,1451.6 1761.6,1451.7 1763.2,1451.7 C1764.7,1451.7 1766.3,1450.8 1767.9,1450.8 C1769.5,1450.8 1771.0,1451.5 1772.6,1451.5 C1774.2,1451.5 1775.8,1449.5 1777.3,1449.5 C1778.9,1449.5 1780.5,1449.7 1782.1,1449.7 C1783.6,1449.7 1785.2,1449.3 1786.8,1449.3 C1788.4,1449.3 1789.9,1449.5 1791.5,1449.5 C1793.1,1449.5 1794.7,1448.1 1796.2,1448.1 C1797.8,1448.1 1799.4,1448.2 1800.9,1448.2 C1802.5,1448.3 1804.1,1450.3 1805.7,1451.0 C1807.2,1451.6 1808.8,1452.0 1810.4,1452.1 C1812.0,1452.2 1813.5,1452.3 1815.1,1452.3 C1816.7,1452.3 1818.3,1450.3 1819.8,1450.3 C1821.4,1450.3 1823.0,1451.2 1824.6,1451.2 C1826.1,1451.2 1827.7,1450.5 1829.3,1450.1 C1830.8,1449.8 1832.4,1449.3 1834.0,1449.3 C1835.6,1449.3 1837.1,1449.4 1838.7,1449.5 C1840.3,1449.7 1841.9,1450.9 1843.4,1451.1 C1845.0,1451.4 1846.6,1451.3 1848.2,1451.5 C1849.7,1451.7 1851.3,1452.3 1852.9,1452.3 C1854.5,1452.3 1856.0,1451.2 1857.6,1451.2 C1859.2,1451.1 1860.8,1451.1 1862.3,1451.1 C1863.9,1451.1 1865.5,1448.7 1867.0,1448.7 C1868.6,1448.7 1870.2,1451.2 1871.8,1451.2 C1873.3,1451.2 1874.9,1449.0 1876.5,1448.9 C1878.1,1448.7 1879.6,1448.8 1881.2,1448.7 C1882.8,1448.6 1884.4,1446.3 1885.9,1446.3 C1887.5,1446.3 1889.1,1448.6 1890.7,1449.4 C1892.2,1450.1 1893.8,1450.2 1895.4,1450.9 C1897.0,1451.5 1898.5,1453.1 1900.1,1453.1 C1901.7,1453.1 1903.2,1450.5 1904.8,1450.5 C1906.4,1450.5 1908.0,1450.7 1909.5,1450.7 C1911.1,1450.7 1912.7,1448.7 1914.3,1448.7 C1915.8,1448.7 1917.4,1449.8 1919.0,1449.8 C1920.6,1449.8 1922.1,1449.7 1923.7,1449.5 C1925.3,1449.3 1926.9,1449.2 1928.4,1448.8 C1930.0,1448.4 1931.6,1447.6 1933.2,1447.1 C1934.7,1446.7 1936.3,1446.4 1937.9,1446.1 C1939.4,1445.8 1941.0,1445.4 1942.6,1445.4 C1944.2,1445.4 1945.7,1446.6 1947.3,1447.1 C1948.9,1447.5 1950.5,1447.4 1952.0,1447.9 C1953.6,1448.4 1955.2,1449.3 1956.8,1450.0 C1958.3,1450.8 1959.9,1452.6 1961.5,1452.6 C1963.1,1452.6 1964.6,1452.4 1966.2,1452.0 C1967.8,1451.5 1969.3,1450.6 1970.9,1449.8 C1972.5,1449.0 1974.1,1447.7 1975.6,1447.1 C1977.2,1446.5 1978.8,1446.3 1980.4,1446.3 C1981.9,1446.3 1983.5,1446.4 1985.1,1446.6 C1986.7,1446.9 1988.2,1447.8 1989.8,1448.0 C1991.4,1448.2 1993.0,1448.3 1994.5,1448.3 C1996.1,1448.3 1997.7,1447.5 1999.3,1447.5 C2000.8,1447.5 2002.4,1447.6 2004.0,1447.8 C2005.5,1447.9 2007.1,1448.0 2008.7,1448.4 C2010.3,1448.8 2011.8,1451.1 2013.4,1451.1 C2015.0,1451.1 2016.6,1450.4 2018.1,1450.4 C2019.7,1450.4 2021.3,1451.3 2022.9,1451.3 C2024.4,1451.3 2026.0,1450.9 2027.6,1450.9 C2029.2,1450.9 2030.7,1452.2 2032.3,1452.2 C2033.9,1452.2 2035.5,1452.0 2037.0,1452.0 C2038.6,1452.0 2040.2,1452.4 2041.7,1452.4 C2043.3,1452.4 2044.9,1452.0 2046.5,1451.4 C2048.0,1450.9 2049.6,1449.7 2051.2,1449.2 C2052.8,1448.8 2054.3,1448.8 2055.9,1448.6 C2057.5,1448.4 2059.1,1447.8 2060.6,1447.8 C2062.2,1447.8 2063.8,1449.7 2065.4,1449.7 C2066.9,1449.7 2068.5,1448.4 2070.1,1448.4 C2071.7,1448.4 2073.2,1450.6 2074.8,1450.6 C2076.4,1450.6 2077.9,1450.4 2079.5,1450.4 C2081.1,1450.4 2082.7,1450.6 2084.2,1450.6 C2085.8,1450.6 2087.4,1447.0 2089.0,1446.7 C2090.5,1446.4 2092.1,1446.3 2093.7,1446.3 C2095.3,1446.3 2096.8,1447.2 2098.4,1447.6 C2100.0,1448.0 2101.6,1448.5 2103.1,1448.7 C2104.7,1449.0 2106.3,1449.2 2107.9,1449.2 C2109.4,1449.2 2111.0,1448.5 2112.6,1448.5 C2114.1,1448.5 2115.7,1450.0 2117.3,1450.0 C2118.9,1450.0 2120.4,1449.1 2122.0,1449.1 C2123.6,1449.1 2125.2,1449.6 2126.7,1449.8 C2128.3,1450.0 2129.9,1449.9 2131.5,1450.3 C2133.0,1450.6 2134.6,1454.1 2136.2,1454.1 C2137.8,1454.1 2139.3,1453.4 2140.9,1453.0 C2142.5,1452.5 2144.0,1452.2 2145.6,1451.3 C2147.2,1450.3 2148.8,1447.3 2150.3,1447.3 C2151.9,1447.3 2153.5,1449.4 2155.1,1449.4 C2156.6,1449.4 2158.2,1448.6 2159.8,1448.6 C2161.4,1448.6 2162.9,1449.0 2164.5,1449.0 C2166.1,1449.0 2167.7,1448.1 2169.2,1448.1 C2170.8,1448.1 2172.4,1448.3 2174.0,1448.3 C2175.5,1448.3 2177.1,1447.9 2178.7,1447.7 C2180.2,1447.5 2181.8,1447.5 2183.4,1447.2 C2185.0,1446.9 2186.5,1446.2 2188.1,1445.9 C2189.7,1445.6 2191.3,1445.3 2192.8,1445.3 C2194.4,1445.3 2196.0,1445.3 2197.6,1445.4 C2199.1,1445.4 2200.7,1447.3 2202.3,1448.0 C2203.9,1448.7 2205.4,1449.5 2207.0,1449.5 C2208.6,1449.5 2210.2,1448.3 2211.7,1447.9 C2213.3,1447.5 2214.9,1447.2 2216.4,1447.2 C2218.0,1447.2 2219.6,1447.7 2221.2,1448.3 C2222.7,1449.0 2224.3,1450.7 2225.9,1451.0 C2227.5,1451.3 2229.0,1451.5 2230.6,1451.5 C2232.2,1451.5 2233.8,1449.5 2235.3,1449.5 C2236.9,1449.5 2238.5,1449.6 2240.1,1449.6 C2241.6,1449.6 2243.2,1449.2 2244.8,1449.0 C2246.4,1448.9 2247.9,1448.9 2249.5,1448.7 C2251.1,1448.5 2252.6,1447.0 2254.2,1447.0 C2255.8,1447.0 2257.4,1448.7 2258.9,1449.4 C2260.5,1450.1 2262.1,1450.4 2263.7,1451.0 C2265.2,1451.7 2266.8,1453.3 2268.4,1453.3 C2270.0,1453.3 2271.5,1451.0 2273.1,1451.0 C2274.7,1451.0 2276.3,1451.9 2277.8,1451.9 C2279.4,1451.9 2281.0,1449.8 2282.5,1449.8 C2284.1,1449.8 2285.7,1450.0 2287.3,1450.2 C2288.8,1450.5 2290.4,1451.4 2292.0,1452.0 C2293.6,1452.6 2295.1,1453.6 2296.7,1453.6 C2298.3,1453.6 2299.9,1453.5 2301.4,1453.2 C2303.0,1452.9 2304.6,1450.6 2306.2,1450.2 C2307.7,1449.9 2309.3,1449.7 2310.9,1449.7 C2312.5,1449.7 2314.0,1451.7 2315.6,1451.7 C2317.2,1451.7 2318.7,1451.5 2320.3,1451.2 C2321.9,1450.9 2323.5,1449.5 2325.0,1448.8 C2326.6,1448.1 2328.2,1447.1 2329.8,1447.1 C2331.3,1447.1 2332.9,1447.3 2334.5,1447.7 C2336.1,1448.1 2337.6,1449.2 2339.2,1449.8 C2340.8,1450.5 2342.4,1451.4 2343.9,1451.7 C2345.5,1451.9 2347.1,1451.8 2348.7,1452.0 C2350.2,1452.2 2351.8,1452.8 2353.4,1452.8 C2354.9,1452.8 2356.5,1450.0 2358.1,1450.0 C2359.7,1450.0 2361.2,1450.3 2362.8,1450.7 C2364.4,1451.0 2366.0,1451.6 2367.5,1452.2 C2369.1,1452.8 2370.7,1454.4 2372.3,1454.4 C2373.8,1454.4 2375.4,1454.1 2377.0,1453.6 C2378.6,1453.2 2380.1,1451.4 2381.7,1451.4 C2383.3,1451.4 2384.9,1452.6 2386.4,1452.6 C2388.0,1452.6 2389.6,1451.4 2391.1,1451.2 C2392.7,1451.0 2394.3,1451.1 2395.9,1450.9 C2397.4,1450.7 2399.0,1449.3 2400.6,1449.3 C2402.2,1449.3 2403.7,1451.3 2405.3,1451.3 C2406.9,1451.3 2408.5,1451.0 2410.0,1450.9 C2411.6,1450.8 2413.2,1450.8 2414.8,1450.7 C2416.3,1450.6 2417.9,1449.5 2419.5,1449.5 C2421.1,1449.5 2422.6,1450.2 2424.2,1450.2 C2425.8,1450.2 2427.3,1449.9 2428.9,1449.7 C2430.5,1449.4 2432.1,1448.8 2433.6,1448.7 C2435.2,1448.5 2436.8,1448.5 2438.4,1448.5 C2439.9,1448.5 2441.5,1449.5 2443.1,1449.7 C2444.7,1449.8 2446.2,1449.9 2447.8,1449.9 C2449.4,1449.9 2451.0,1449.7 2452.5,1449.6 C2454.1,1449.5 2455.7,1449.4 2457.2,1449.4 C2458.8,1449.3 2460.4,1449.2 2462.0,1449.2 C2463.5,1449.2 2465.1,1449.7 2466.7,1449.7 C2468.3,1449.7 2469.8,1447.7 2471.4,1447.7 C2473.0,1447.7 2474.6,1449.5 2476.1,1450.3 C2477.7,1451.1 2479.3,1451.8 2480.9,1452.8 C2482.4,1453.8 2484.0,1456.4 2485.6,1456.4 C2487.2,1456.4 2488.7,1455.4 2490.3,1454.8 C2491.9,1454.2 2493.4,1453.6 2495.0,1453.0 C2496.6,1452.3 2498.2,1450.7 2499.7,1450.7 C2501.3,1450.7 2502.9,1450.9 2504.5,1451.1 C2506.0,1451.3 2507.6,1452.1 2509.2,1452.1 C2510.8,1452.1 2512.3,1450.4 2513.9,1450.4 C2515.5,1450.4 2517.1,1451.5 2518.6,1451.5 C2520.2,1451.5 2521.8,1449.6 2523.4,1449.6 C2524.9,1449.6 2526.5,1452.8 2528.1,1452.8 C2529.6,1452.8 2531.2,1452.1 2532.8,1451.8 C2534.4,1451.5 2535.9,1451.4 2537.5,1451.1 C2539.1,1450.7 2540.7,1449.8 2542.2,1449.8 C2543.8,1449.8 2545.4,1450.2 2547.0,1450.4 C2548.5,1450.6 2550.1,1451.1 2551.7,1451.2 C2553.3,1451.4 2554.8,1451.5 2556.4,1451.5 C2558.0,1451.5 2559.6,1450.7 2561.1,1450.0 C2562.7,1449.3 2564.3,1447.5 2565.8,1447.5 C2567.4,1447.5 2569.0,1447.6 2570.6,1448.0 C2572.1,1448.3 2573.7,1448.7 2575.3,1449.4 C2576.9,1450.1 2578.4,1452.0 2580.0,1452.0 C2581.6,1452.0 2583.2,1451.1 2584.7,1451.1 C2586.3,1451.1 2587.9,1451.5 2589.5,1451.5 C2591.0,1451.5 2592.6,1451.0 2594.2,1450.8 C2595.7,1450.5 2597.3,1450.2 2598.9,1449.9 C2600.5,1449.5 2602.0,1448.4 2603.6,1448.4 C2605.2,1448.4 2606.8,1450.3 2608.3,1450.3 C2609.9,1450.3 2611.5,1449.5 2613.1,1449.5 C2614.6,1449.5 2616.2,1451.2 2617.8,1451.2 C2619.4,1451.2 2620.9,1449.0 2622.5,1449.0 C2624.1,1449.0 2625.7,1449.3 2627.2,1449.4 C2628.8,1449.4 2630.4,1449.4 2631.9,1449.4 C2633.5,1449.5 2635.1,1450.1 2636.7,1450.1 C2638.2,1450.1 2639.8,1450.0 2641.4,1449.8 C2643.0,1449.7 2644.5,1448.0 2646.1,1448.0 C2647.7,1448.0 2649.3,1448.5 2650.8,1449.2 C2652.4,1449.8 2654.0,1452.1 2655.6,1452.1 C2657.1,1452.1 2658.7,1452.0 2660.3,1452.0 C2661.9,1452.0 2663.4,1459.0 2665.0,1466.0" fill="none" stroke="#e9a83a" stroke-width="3.5" stroke-linejoin="round" stroke-linecap="round" />
<path d="M1725.4,1407.9 C1727.4,1402.0 1729.5,1396.0 1731.6,1396.0 C1733.8,1396.0 1736.0,1407.9 1738.2,1407.9 C1740.4,1407.9 1742.7,1404.8 1744.9,1404.8 C1746.8,1404.8 1748.7,1426.9 1750.6,1436.8 C1752.9,1448.1 1755.1,1467.8 1757.3,1467.8 C1759.5,1467.8 1761.7,1464.1 1763.9,1456.7 C1766.2,1449.3 1768.4,1418.9 1770.6,1412.4 C1773.1,1405.0 1775.6,1401.3 1778.1,1401.3 C1780.1,1401.3 1782.0,1409.3 1783.9,1409.3 C1786.1,1409.3 1788.3,1405.2 1790.6,1403.5 C1792.8,1401.8 1795.0,1399.1 1797.2,1399.1 C1799.4,1399.1 1801.6,1418.1 1803.9,1418.1 C1806.1,1418.1 1808.3,1410.2 1810.5,1410.2 C1812.7,1410.2 1814.9,1418.1 1817.2,1418.1 C1819.4,1418.1 1821.6,1416.3 1823.8,1414.6 C1826.0,1412.9 1828.2,1407.9 1830.5,1407.9 C1832.7,1407.9 1834.9,1423.5 1837.1,1423.5 C1839.3,1423.5 1841.6,1412.5 1843.8,1410.2 C1846.0,1407.8 1848.2,1406.6 1850.4,1406.6 C1852.6,1406.6 1854.9,1412.4 1857.1,1412.4 C1859.3,1412.4 1861.5,1401.3 1863.7,1401.3 C1865.9,1401.3 1868.2,1409.3 1870.4,1409.3 C1874.8,1409.3 1879.2,1408.3 1883.7,1406.6 C1885.9,1405.8 1888.1,1404.5 1890.3,1403.5 C1894.0,1401.9 1897.7,1401.6 1901.4,1399.1 C1903.6,1397.5 1905.9,1393.3 1908.1,1393.3 C1910.3,1393.3 1912.5,1407.9 1914.7,1407.9 C1916.9,1407.9 1919.2,1399.1 1921.4,1399.1 C1923.6,1399.1 1925.8,1399.8 1928.0,1401.3 C1930.2,1402.8 1932.5,1407.9 1934.7,1407.9 C1936.9,1407.9 1939.1,1396.0 1941.3,1396.0 C1943.5,1396.0 1945.8,1411.0 1948.0,1411.0 C1950.2,1411.0 1952.4,1403.5 1954.6,1403.5 C1956.9,1403.5 1959.1,1423.8 1961.3,1430.1 C1963.5,1436.4 1965.7,1434.0 1967.9,1441.2 C1969.9,1447.4 1971.8,1467.8 1973.7,1467.8 C1975.9,1467.8 1978.1,1433.4 1980.4,1423.5 C1982.6,1413.5 1984.8,1407.9 1987.0,1407.9 C1991.4,1407.9 1995.9,1407.9 2000.3,1407.9 C2002.4,1407.9 2004.4,1401.3 2006.5,1401.3 C2008.7,1401.3 2011.0,1423.5 2013.2,1427.9 C2015.4,1432.3 2017.6,1430.1 2019.8,1434.5 C2022.0,1439.0 2024.3,1467.8 2026.5,1467.8 C2028.7,1467.8 2030.9,1451.7 2033.1,1441.2 C2035.3,1430.7 2037.6,1404.8 2039.8,1404.8 C2042.0,1404.8 2044.2,1414.6 2046.4,1414.6 C2048.6,1414.6 2050.9,1403.5 2053.1,1403.5 C2055.3,1403.5 2057.5,1416.8 2059.7,1416.8 C2062.0,1416.8 2064.2,1407.9 2066.4,1407.9 C2068.3,1407.9 2070.2,1414.6 2072.2,1414.6 C2074.4,1414.6 2076.6,1409.3 2078.8,1409.3 C2081.0,1409.3 2083.2,1409.3 2085.5,1409.3 C2087.7,1409.3 2089.9,1396.9 2092.1,1396.9 C2094.3,1396.9 2096.5,1396.9 2098.8,1396.9 C2101.0,1396.9 2103.2,1409.3 2105.4,1409.3 C2107.6,1409.3 2109.8,1403.5 2112.1,1403.5 C2111.4,1403.5 2110.7,1403.5 2110.0,1403.5 C2112.5,1403.5 2115.0,1447.8 2117.5,1447.8 C2119.8,1447.8 2122.0,1433.4 2124.2,1427.9 C2126.4,1422.4 2128.6,1414.6 2130.8,1414.6 C2133.1,1414.6 2135.3,1467.8 2137.5,1467.8 C2139.7,1467.8 2141.9,1449.5 2144.1,1439.0 C2146.4,1428.5 2148.6,1404.8 2150.8,1404.8 C2153.0,1404.8 2155.2,1467.8 2157.5,1467.8 C2159.7,1467.8 2161.9,1443.8 2164.1,1434.5 C2166.3,1425.3 2168.5,1412.4 2170.8,1412.4 C2173.0,1412.4 2175.2,1432.0 2177.4,1441.2 C2179.6,1450.4 2181.8,1467.8 2184.1,1467.8 C2186.3,1467.8 2188.5,1422.7 2190.7,1416.8 C2192.9,1410.9 2195.1,1410.5 2197.4,1407.9 C2199.6,1405.4 2201.8,1401.3 2204.0,1401.3 C2207.7,1401.3 2211.4,1419.9 2215.1,1419.9 C2217.3,1419.9 2219.5,1412.1 2221.8,1409.3 C2224.4,1405.9 2227.1,1402.2 2229.7,1402.2 C2233.7,1402.2 2237.7,1405.1 2241.7,1411.0 C2243.6,1413.9 2245.6,1460.8 2247.5,1463.4 C2249.7,1466.3 2251.9,1467.8 2254.1,1467.8 C2256.3,1467.8 2258.6,1409.3 2260.8,1409.3 C2263.0,1409.3 2265.2,1416.8 2267.4,1416.8 C2269.6,1416.8 2271.9,1399.1 2274.1,1399.1 C2276.3,1399.1 2278.5,1405.7 2280.7,1405.7 C2282.9,1405.7 2285.2,1404.6 2287.4,1403.5 C2289.6,1402.4 2291.8,1399.1 2294.0,1399.1 C2296.3,1399.1 2298.5,1412.4 2300.7,1412.4 C2302.9,1412.4 2305.1,1396.9 2307.3,1396.9 C2309.6,1396.9 2311.8,1456.7 2314.0,1461.2 C2316.2,1465.6 2318.4,1467.8 2320.6,1467.8 C2324.8,1467.8 2328.9,1391.5 2333.1,1391.5 C2335.3,1391.5 2337.5,1407.9 2339.7,1407.9 C2341.9,1407.9 2344.1,1405.0 2346.4,1403.5 C2348.6,1402.0 2350.8,1399.1 2353.0,1399.1 C2355.2,1399.1 2357.5,1405.4 2359.7,1409.3 C2361.9,1413.2 2364.1,1422.6 2366.3,1422.6 C2368.5,1422.6 2370.8,1399.1 2373.0,1399.1 C2375.2,1399.1 2377.4,1403.5 2379.6,1403.5 C2381.8,1403.5 2384.1,1394.6 2386.3,1394.6 C2388.5,1394.6 2390.7,1410.2 2392.9,1410.2 C2395.1,1410.2 2397.4,1410.2 2399.6,1410.2 C2404.0,1410.2 2408.4,1394.6 2412.9,1394.6 C2415.1,1394.6 2417.3,1396.1 2419.5,1399.1 C2421.3,1401.4 2423.1,1414.6 2424.9,1414.6 C2427.1,1414.6 2429.3,1406.6 2431.5,1404.8 C2433.7,1403.1 2435.9,1403.4 2438.2,1402.2 C2440.4,1401.0 2442.6,1397.7 2444.8,1397.7 C2447.0,1397.7 2449.2,1413.7 2451.5,1413.7 C2455.9,1413.7 2460.3,1407.0 2464.8,1404.8 C2467.0,1403.7 2469.2,1403.9 2471.4,1402.2 C2473.6,1400.4 2475.9,1387.1 2478.1,1387.1 C2480.3,1387.1 2482.5,1387.1 2484.7,1387.1 C2486.9,1387.1 2489.2,1402.6 2491.4,1403.5 C2493.6,1404.4 2495.8,1404.8 2498.0,1404.8 C2499.9,1404.8 2501.9,1403.5 2503.8,1403.5 C2506.0,1403.5 2508.2,1412.4 2510.4,1412.4 C2512.7,1412.4 2514.9,1407.9 2517.1,1407.9 C2519.3,1407.9 2521.5,1413.7 2523.7,1413.7 C2526.0,1413.7 2528.2,1396.9 2530.4,1396.9 C2532.6,1396.9 2534.8,1404.5 2537.1,1404.8 C2541.5,1405.4 2545.9,1405.1 2550.4,1405.7 C2552.6,1406.0 2554.8,1415.3 2557.0,1416.8 C2559.2,1418.3 2561.4,1419.0 2563.7,1419.0 C2565.9,1419.0 2568.1,1409.3 2570.3,1409.3 C2572.5,1409.3 2574.7,1411.0 2577.0,1411.0 C2579.2,1411.0 2581.4,1410.7 2583.6,1410.2 C2586.9,1409.3 2590.1,1391.5 2593.4,1391.5 C2595.6,1391.5 2597.8,1394.1 2600.0,1396.9 C2602.2,1399.6 2604.5,1405.0 2606.7,1407.9 C2608.9,1410.9 2611.1,1414.6 2613.3,1414.6 C2617.8,1414.6 2622.2,1407.9 2626.6,1407.9 C2628.8,1407.9 2631.1,1422.6 2633.3,1422.6 C2635.5,1422.6 2637.7,1410.9 2639.9,1407.9 C2642.2,1405.0 2644.4,1403.5 2646.6,1403.5 C2648.8,1403.5 2651.0,1404.8 2653.2,1404.8 C2655.5,1404.8 2657.7,1401.3 2659.9,1401.3 C2661.7,1401.3 2663.4,1434.5 2665.2,1467.8" fill="none" stroke="#69707d" stroke-width="3.5" stroke-linejoin="round" stroke-linecap="round" />
<path d="M1725.4,1173.8 C1727.4,1150.1 1729.5,1126.3 1731.6,1126.3 C1733.9,1126.3 1736.3,1141.9 1738.7,1141.9 C1740.7,1141.9 1742.8,1129.4 1744.9,1129.4 C1747.1,1129.4 1749.3,1131.4 1751.5,1135.2 C1753.5,1138.5 1755.4,1162.7 1757.3,1162.7 C1760.0,1162.7 1762.6,1160.9 1765.3,1157.4 C1767.3,1154.6 1769.4,1125.9 1771.5,1125.5 C1775.6,1124.6 1779.8,1124.1 1783.9,1124.1 C1786.4,1124.1 1788.9,1141.9 1791.4,1141.9 C1793.7,1141.9 1795.9,1123.2 1798.1,1123.2 C1800.3,1123.2 1802.5,1139.6 1804.7,1139.6 C1806.7,1139.6 1808.6,1122.8 1810.5,1122.8 C1812.7,1122.8 1814.9,1145.4 1817.2,1145.4 C1819.4,1145.4 1821.6,1131.7 1823.8,1131.7 C1826.0,1131.7 1828.2,1135.3 1830.5,1136.1 C1834.6,1137.6 1838.7,1138.3 1842.9,1138.3 C1845.4,1138.3 1847.9,1128.6 1850.4,1128.6 C1852.6,1128.6 1854.9,1141.9 1857.1,1141.9 C1859.3,1141.9 1861.5,1127.2 1863.7,1127.2 C1867.9,1127.2 1872.0,1149.8 1876.1,1149.8 C1880.6,1149.8 1885.0,1119.7 1889.4,1119.7 C1891.7,1119.7 1893.9,1121.8 1896.1,1124.1 C1898.3,1126.5 1900.5,1133.9 1902.7,1133.9 C1906.7,1133.9 1910.7,1133.6 1914.7,1133.0 C1916.9,1132.7 1919.2,1127.7 1921.4,1127.7 C1923.9,1127.7 1926.4,1129.9 1928.9,1129.9 C1930.8,1129.9 1932.8,1126.9 1934.7,1126.3 C1936.9,1125.8 1939.1,1125.5 1941.3,1125.5 C1943.5,1125.5 1945.8,1132.1 1948.0,1133.0 C1950.2,1133.9 1952.4,1133.4 1954.6,1134.3 C1958.8,1136.0 1962.9,1137.6 1967.1,1144.1 C1969.3,1147.6 1971.5,1161.8 1973.7,1161.8 C1975.9,1161.8 1978.1,1159.1 1980.4,1155.2 C1984.6,1147.6 1988.9,1113.0 1993.2,1113.0 C1997.6,1113.0 2002.1,1152.9 2006.5,1152.9 C2008.7,1152.9 2011.0,1126.3 2013.2,1126.3 C2015.4,1126.3 2017.6,1128.6 2019.8,1133.0 C2022.0,1137.4 2024.3,1161.8 2026.5,1161.8 C2028.7,1161.8 2030.9,1145.2 2033.1,1139.6 C2035.3,1134.1 2037.6,1128.6 2039.8,1128.6 C2042.0,1128.6 2044.2,1128.6 2046.4,1128.6 C2048.6,1128.6 2050.9,1136.1 2053.1,1136.1 C2055.3,1136.1 2057.5,1135.1 2059.7,1133.0 C2062.0,1130.9 2064.2,1119.7 2066.4,1119.7 C2068.3,1119.7 2070.2,1144.1 2072.2,1144.1 C2074.4,1144.1 2076.6,1136.3 2078.8,1133.0 C2081.0,1129.7 2083.2,1124.1 2085.5,1124.1 C2087.7,1124.1 2089.9,1130.8 2092.1,1131.7 C2094.3,1132.5 2096.5,1132.1 2098.8,1133.0 C2101.0,1133.9 2103.2,1142.7 2105.4,1142.7 C2107.3,1142.7 2109.3,1127.2 2111.2,1127.2 C2113.0,1127.2 2114.8,1280.0 2116.7,1286.0 C2119.2,1294.3 2121.7,1298.4 2124.2,1298.4 C2126.4,1298.4 2128.6,1139.6 2130.8,1139.6 C2133.1,1139.6 2135.3,1168.5 2137.5,1168.5 C2139.7,1168.5 2141.9,1168.5 2144.1,1168.5 C2146.4,1168.5 2148.6,1129.4 2150.8,1129.4 C2153.0,1129.4 2155.2,1165.4 2157.5,1165.4 C2161.9,1165.4 2166.3,1137.4 2170.8,1137.4 C2174.9,1137.4 2179.0,1174.2 2183.2,1174.2 C2185.4,1174.2 2187.6,1130.8 2189.8,1130.8 C2192.0,1130.8 2194.3,1141.9 2196.5,1141.9 C2198.7,1141.9 2200.9,1126.2 2203.1,1124.1 C2205.3,1122.1 2207.6,1121.0 2209.8,1121.0 C2212.0,1121.0 2214.2,1129.9 2216.4,1129.9 C2218.6,1129.9 2220.9,1118.4 2223.1,1118.4 C2225.0,1118.4 2226.9,1137.4 2228.8,1137.4 C2233.1,1137.4 2237.4,1135.2 2241.7,1135.2 C2245.8,1135.2 2250.0,1158.7 2254.1,1158.7 C2258.6,1158.7 2263.0,1121.0 2267.4,1121.0 C2269.6,1121.0 2271.9,1133.0 2274.1,1133.0 C2276.3,1133.0 2278.5,1118.4 2280.7,1118.4 C2282.9,1118.4 2285.2,1130.8 2287.4,1130.8 C2291.8,1130.8 2296.3,1125.5 2300.7,1125.5 C2306.9,1125.5 2313.1,1172.9 2319.3,1172.9 C2321.5,1172.9 2323.7,1133.6 2326.0,1128.6 C2328.2,1123.5 2330.4,1121.0 2332.6,1121.0 C2334.8,1121.0 2337.1,1122.8 2339.3,1122.8 C2343.7,1122.8 2348.1,1115.3 2352.6,1115.3 C2356.7,1115.3 2360.8,1144.1 2365.0,1144.1 C2367.5,1144.1 2370.0,1130.8 2372.5,1130.8 C2374.4,1130.8 2376.4,1140.5 2378.3,1140.5 C2384.9,1140.5 2391.6,1138.8 2398.2,1135.2 C2400.5,1134.0 2402.7,1128.1 2404.9,1126.3 C2409.3,1122.8 2413.8,1121.0 2418.2,1121.0 C2420.4,1121.0 2422.6,1140.5 2424.9,1140.5 C2428.6,1140.5 2432.2,1126.3 2435.9,1126.3 C2438.2,1126.3 2440.4,1136.1 2442.6,1136.1 C2445.1,1136.1 2447.6,1128.6 2450.1,1128.6 C2452.4,1128.6 2454.6,1137.4 2456.8,1137.4 C2461.2,1137.4 2465.7,1125.5 2470.1,1125.5 C2472.5,1125.5 2474.8,1129.9 2477.2,1129.9 C2479.3,1129.9 2481.3,1129.9 2483.4,1129.9 C2485.8,1129.9 2488.1,1137.4 2490.5,1137.4 C2492.6,1137.4 2494.6,1124.1 2496.7,1124.1 C2499.1,1124.1 2501.4,1138.8 2503.8,1138.8 C2506.0,1138.8 2508.2,1129.9 2510.4,1129.9 C2512.7,1129.9 2514.9,1131.2 2517.1,1133.0 C2518.9,1134.4 2520.6,1138.8 2522.4,1138.8 C2524.6,1138.8 2526.9,1121.9 2529.1,1121.9 C2531.3,1121.9 2533.5,1140.2 2535.7,1143.2 C2537.9,1146.1 2540.2,1145.6 2542.4,1147.6 C2544.6,1149.6 2546.8,1155.2 2549.0,1155.2 C2551.2,1155.2 2553.5,1139.6 2555.7,1139.6 C2557.9,1139.6 2560.1,1140.5 2562.3,1140.5 C2566.0,1140.5 2569.7,1122.8 2573.4,1122.8 C2575.6,1122.8 2577.8,1127.7 2580.1,1127.7 C2584.5,1127.7 2588.9,1127.7 2593.4,1127.7 C2595.6,1127.7 2597.8,1109.5 2600.0,1109.5 C2602.2,1109.5 2604.5,1128.6 2606.7,1128.6 C2608.9,1128.6 2611.1,1122.8 2613.3,1122.8 C2615.5,1122.8 2617.8,1140.5 2620.0,1140.5 C2622.2,1140.5 2624.4,1128.6 2626.6,1128.6 C2631.1,1128.6 2635.5,1144.1 2639.9,1144.1 C2642.2,1144.1 2644.4,1128.6 2646.6,1128.6 C2648.8,1128.6 2651.0,1150.7 2653.2,1150.7 C2655.5,1150.7 2657.7,1137.4 2659.9,1137.4 C2661.7,1137.4 2663.4,1282.7 2665.2,1427.9" fill="none" stroke="#4a7d4d" stroke-width="3.5" stroke-linejoin="round" stroke-linecap="round" />
<line x1="2268" y1="1092" x2="2268" y2="1468" stroke="#2e7d73" stroke-width="2"/>
<circle cx="2268" cy="1076.7" r="7.5" fill="#317a72"/>
<circle cx="437" cy="456.7" r="7.6" fill="#6bb396"/>
<circle cx="561" cy="456.7" r="7.6" fill="#6b94c0"/>
<circle cx="708.8" cy="456.7" r="7.6" fill="#c96a86"/>
<circle cx="902" cy="456.7" r="7.6" fill="#8d74b6"/>
<circle cx="580" cy="929.5" r="8" fill="#317a72"/><line x1="580" y1="933.5" x2="580" y2="945.5" stroke="#317a72" stroke-width="2.5"/>
<circle cx="576" cy="1553.8" r="10" fill="#6a94c0"/>
<circle cx="744" cy="1553.8" r="10" fill="#d1bf62"/>
<circle cx="956" cy="1553.8" r="10" fill="#d48c53"/>
<circle cx="1170.7" cy="1551.6" r="8" fill="#317a72"/><line x1="1170.7" y1="1555.6" x2="1170.7" y2="1567.6" stroke="#317a72" stroke-width="2.5"/>
<circle cx="1736" cy="1549.8" r="10" fill="#4a7d4d"/>
<circle cx="1998.5" cy="1549.8" r="10" fill="#6b707c"/>
<circle cx="2252.5" cy="1549.8" r="10" fill="#e8a83c"/>
<circle cx="1736" cy="1587.9" r="10" fill="#b84a3a"/>
<circle cx="1976.8" cy="1584.8" r="8" fill="#317a72"/><line x1="1976.8" y1="1588.8" x2="1976.8" y2="1600.8" stroke="#317a72" stroke-width="2.5"/>
<!-- icons -->
<path d="M680.5,43.4 L688.4,50.7 Q690.0,52.8 691.6,50.7 L699.5,43.4" fill="none" stroke="#2f6bb0" stroke-width="2.0" stroke-linecap="round" stroke-linejoin="round"/>
<path d="M1678.5,43.5 L1687.2,50.9 Q1688.9,52.9 1690.6,50.9 L1699.3,43.5" fill="none" stroke="#2f6bb0" stroke-width="2.0" stroke-linecap="round" stroke-linejoin="round"/>
<path d="M2487.5,399.5 L2496.2,408.2 Q2497.8,410.3 2499.4,408.2 L2508.1,399.5" fill="none" stroke="#2f6bb0" stroke-width="1.7" stroke-linecap="round" stroke-linejoin="round"/>
<path d="M2648.1,165.5 L2657.1,173.2 Q2658.8,175.2 2660.5,173.2 L2669.6,165.5" fill="none" stroke="#343741" stroke-width="2.0" stroke-linecap="round" stroke-linejoin="round"/>
<path d="M310.0,519.5 L318.4,527.3 Q320.0,529.4 321.6,527.3 L330.0,519.5" fill="none" stroke="#343741" stroke-width="2.0" stroke-linecap="round" stroke-linejoin="round"/>
<g fill="none" stroke="#343741" stroke-width="2"><path d="M54.9,179.8 A11.6,11.6 0 1 1 62.3,176.5 L69.2,183.5" stroke-linecap="butt" stroke-linejoin="miter"/></g>
<g fill="none" stroke="#2f6bb0" stroke-width="1.8">
<rect x="1640.9" y="38.9" width="24.2" height="22" rx="3"/>
<line x1="1641" y1="43.8" x2="1665" y2="43.8"/>
<line x1="1648.3" y1="36.2" x2="1648.3" y2="40.6" stroke-linecap="round"/><line x1="1657.8" y1="36.2" x2="1657.8" y2="40.6" stroke-linecap="round"/>
</g>
<g fill="#2f6bb0">
<rect x="1645.3" y="48.1" width="3.9" height="1.8"/><rect x="1651.1" y="48.1" width="3.9" height="1.8"/><rect x="1656.8" y="48.1" width="3.9" height="1.8"/>
<rect x="1645.3" y="51.7" width="3.9" height="1.8"/><rect x="1651.1" y="51.7" width="3.9" height="1.8"/><rect x="1656.8" y="51.7" width="3.9" height="1.8"/>
<rect x="1645.3" y="55.1" width="3.9" height="1.8"/><rect x="1651.1" y="55.1" width="3.9" height="1.8"/><rect x="1656.8" y="55.1" width="3.9" height="1.8"/>
</g>
<g fill="none" stroke="#ffffff" stroke-width="1.7" stroke-linecap="round" stroke-linejoin="round">
<path d="M2537.6,40.1 A9.9,9.9 0 1 0 2541.8,47.4"/>
<polyline points="2541.6,36 2541.6,43.5 2534.1,43.5"/>
</g>
<!-- tooltip -->
<g>
<rect x="1568" y="394" width="418" height="140" rx="7" fill="#000" opacity="0.16" filter="url(#blur)"/>
<rect x="1566" y="388" width="422" height="138" rx="7" fill="#404040" />
<polygon points="1764,525 1789,525 1776.5,538.5" fill="#404040"/>
<line x1="1587" y1="452.5" x2="1966" y2="452.5" stroke="#5f5f5f" stroke-width="2"/>
</g>
</svg>
<div class="t" style="left:20.4px;top:16.3px;font-size:65.29px;letter-spacing:0.28px;font-weight:400;color:#1a1c21;">opbeans-node</div>
<div class="t" style="left:497.2px;top:31.9px;font-size:31.27px;letter-spacing:0.00px;font-weight:400;color:#2f6bb0;">Integrations</div>
<div class="t" style="left:1731.9px;top:34.1px;font-size:27.06px;letter-spacing:0.00px;font-weight:400;color:#343741;">Last 24 hours</div>
<div class="t" style="left:2315.2px;top:34.6px;font-size:26.48px;letter-spacing:0.00px;font-weight:400;color:#2f6bb0;">Show dates</div>
<div class="t" style="left:2559.4px;top:32.7px;font-size:29.94px;letter-spacing:0.00px;font-weight:400;color:#ffffff;-webkit-text-stroke:0.35px #ffffff;">Refresh</div>
<div class="t" style="left:91.2px;top:158.1px;font-size:26.79px;letter-spacing:0.00px;font-weight:400;color:#69707d;">Search transactions (E.g. transaction.duration.us &gt; 300000)</div>
<div class="t" style="left:2054.3px;top:159.8px;font-size:21.79px;letter-spacing:0.00px;font-weight:700;color:#1a1c21;">environment</div>
<div class="t" style="left:2229.0px;top:156.3px;font-size:25.83px;letter-spacing:0.00px;font-weight:400;color:#343741;">All</div>
<div class="t" style="left:48.8px;top:252.2px;font-size:30.44px;letter-spacing:0.00px;font-weight:400;color:#2f6bb0;">Transactions</div>
<div class="t" style="left:277.4px;top:252.1px;font-size:30.62px;letter-spacing:0.00px;font-weight:400;color:#343741;">Errors</div>
<div class="t" style="left:416.5px;top:250.9px;font-size:32.00px;letter-spacing:0.00px;font-weight:400;color:#343741;">Metrics</div>
<div class="t" style="left:577.0px;top:252.1px;font-size:30.59px;letter-spacing:0.00px;font-weight:400;color:#343741;">Service Map</div>
<div class="t" style="left:19.2px;top:363.0px;font-size:37.32px;letter-spacing:0.00px;font-weight:400;color:#1a1c21;-webkit-text-stroke:0.7px #1a1c21;">Filters</div>
<div class="t" style="left:20.8px;top:434.2px;font-size:21.87px;letter-spacing:-0.26px;font-weight:700;color:#1a1c21;">TRANSACTION TYPE</div>
<div class="t" style="left:33.3px;top:511.4px;font-size:26.98px;letter-spacing:0.00px;font-weight:400;color:#343741;">request</div>
<div class="t" style="left:21.5px;top:638.2px;font-size:22.24px;letter-spacing:-0.75px;font-weight:700;color:#1a1c21;">TRANSACTION RESULT</div>
<div class="t" style="left:20.3px;top:712.3px;font-size:22.15px;letter-spacing:0.00px;font-weight:700;color:#1a1c21;">HOST</div>
<div class="t" style="left:21.0px;top:786.6px;font-size:21.74px;letter-spacing:-0.30px;font-weight:700;color:#1a1c21;">CONTAINER ID</div>
<div class="t" style="left:20.3px;top:860.4px;font-size:21.98px;letter-spacing:0.00px;font-weight:700;color:#1a1c21;">POD</div>
<div class="t" style="left:21.4px;top:934.7px;font-size:21.62px;letter-spacing:-0.31px;font-weight:700;color:#1a1c21;">SERVICE VERSION</div>
<div class="t" style="left:423.7px;top:392.0px;font-size:28.21px;letter-spacing:0.00px;font-weight:700;color:#1a1c21;">Time spent by span type</div>
<div class="t" style="left:465.9px;top:445.7px;font-size:21.67px;letter-spacing:1.00px;font-weight:400;color:#69707d;">app</div>
<div class="t" style="left:590.0px;top:445.7px;font-size:21.67px;letter-spacing:1.89px;font-weight:400;color:#69707d;">http</div>
<div class="t" style="left:736.6px;top:445.7px;font-size:21.67px;letter-spacing:0.98px;font-weight:400;color:#69707d;">postgresql</div>
<div class="t" style="left:929.6px;top:445.7px;font-size:21.67px;letter-spacing:0.76px;font-weight:400;color:#69707d;">redis</div>
<div class="t" style="left:422.6px;top:498.4px;font-size:35.00px;letter-spacing:0.05px;font-weight:400;color:#1a1c21;-webkit-text-stroke:0.8px #1a1c21;">8.9%</div>
<div class="t" style="left:547.4px;top:498.4px;font-size:35.00px;letter-spacing:0.95px;font-weight:400;color:#1a1c21;-webkit-text-stroke:0.8px #1a1c21;">84.4%</div>
<div class="t" style="left:694.9px;top:498.4px;font-size:35.00px;letter-spacing:-0.21px;font-weight:400;color:#1a1c21;-webkit-text-stroke:0.8px #1a1c21;">5.9%</div>
<div class="t" style="left:887.9px;top:498.4px;font-size:35.00px;letter-spacing:-0.21px;font-weight:400;color:#1a1c21;-webkit-text-stroke:0.8px #1a1c21;">0.7%</div>
<div class="t" style="left:496.2px;top:577.0px;font-size:19.17px;letter-spacing:0.00px;font-weight:400;color:#69707d;">100 %</div>
<div class="t" style="left:505.9px;top:706.2px;font-size:19.61px;letter-spacing:0.00px;font-weight:400;color:#69707d;">50 %</div>
<div class="t" style="left:518.2px;top:836.7px;font-size:18.77px;letter-spacing:0.00px;font-weight:400;color:#69707d;">0 %</div>
<div class="t" style="left:536.3px;top:858.2px;font-size:20.80px;letter-spacing:0.00px;font-weight:400;color:#69707d;">03 PM</div>
<div class="t" style="left:799.1px;top:858.2px;font-size:20.80px;letter-spacing:0.00px;font-weight:400;color:#69707d;">06 PM</div>
<div class="t" style="left:1061.8px;top:858.2px;font-size:20.80px;letter-spacing:0.00px;font-weight:400;color:#69707d;">09 PM</div>
<div class="t" style="left:1322.4px;top:858.2px;font-size:20.80px;letter-spacing:0.00px;font-weight:400;color:#69707d;">Tue 04</div>
<div class="t" style="left:1587.3px;top:858.2px;font-size:20.80px;letter-spacing:0.00px;font-weight:400;color:#69707d;">03 AM</div>
<div class="t" style="left:1850.1px;top:858.2px;font-size:20.80px;letter-spacing:0.00px;font-weight:400;color:#69707d;">06 AM</div>
<div class="t" style="left:2112.8px;top:858.2px;font-size:20.80px;letter-spacing:0.00px;font-weight:400;color:#69707d;">09 AM</div>
<div class="t" style="left:2375.2px;top:858.2px;font-size:20.80px;letter-spacing:0.00px;font-weight:400;color:#69707d;">12 PM</div>
<div class="t" style="left:2639.0px;top:858.2px;font-size:20.80px;letter-spacing:0.00px;font-weight:400;color:#69707d;">03</div>
<div class="t" style="left:602.3px;top:918.5px;font-size:22.82px;letter-spacing:0.00px;font-weight:400;color:#98a2b3;">Service version</div>
<div class="t" style="left:2525.9px;top:391.2px;font-size:26.99px;letter-spacing:0.00px;font-weight:400;color:#2f6bb0;">Hide chart</div>
<div class="t" style="left:1585.3px;top:413.1px;font-size:27.44px;letter-spacing:0.00px;font-weight:700;color:#ffffff;">Feb 4, 2020, 04:49:59 (UTC-8)</div>
<div class="t" style="left:1587.0px;top:469.3px;font-size:30.37px;letter-spacing:0.00px;font-weight:400;color:#ffffff;">Version</div>
<div class="t" style="left:1907.8px;top:466.6px;font-size:26.48px;letter-spacing:0.00px;font-weight:400;color:#ffffff;">2.0.0</div>
<div class="t" style="left:423.0px;top:1030.9px;font-size:28.42px;letter-spacing:-0.12px;font-weight:700;color:#1a1c21;">Transaction duration</div>
<div class="t" style="left:464.7px;top:1081.9px;font-size:21.01px;letter-spacing:0.00px;font-weight:400;color:#69707d;">5,000 ms</div>
<div class="t" style="left:463.5px;top:1269.3px;font-size:21.22px;letter-spacing:0.05px;font-weight:400;color:#69707d;">2,500 ms</div>
<div class="t" style="left:505.9px;top:1457.6px;font-size:20.86px;letter-spacing:0.00px;font-weight:400;color:#69707d;">0 ms</div>
<div class="t" style="left:536.3px;top:1480.9px;font-size:20.80px;letter-spacing:0.00px;font-weight:400;color:#69707d;">03 PM</div>
<div class="t" style="left:653.8px;top:1480.9px;font-size:20.80px;letter-spacing:0.00px;font-weight:400;color:#69707d;">06 PM</div>
<div class="t" style="left:771.2px;top:1480.9px;font-size:20.80px;letter-spacing:0.00px;font-weight:400;color:#69707d;">09 PM</div>
<div class="t" style="left:886.4px;top:1480.9px;font-size:20.80px;letter-spacing:0.00px;font-weight:400;color:#69707d;">Tue 04</div>
<div class="t" style="left:1006.1px;top:1480.9px;font-size:20.80px;letter-spacing:0.00px;font-weight:400;color:#69707d;">03 AM</div>
<div class="t" style="left:1123.5px;top:1480.9px;font-size:20.80px;letter-spacing:0.00px;font-weight:400;color:#69707d;">06 AM</div>
<div class="t" style="left:1240.9px;top:1480.9px;font-size:20.80px;letter-spacing:0.00px;font-weight:400;color:#69707d;">09 AM</div>
<div class="t" style="left:1358.1px;top:1480.9px;font-size:20.80px;letter-spacing:0.00px;font-weight:400;color:#69707d;">12 PM</div>
<div class="t" style="left:1476.6px;top:1480.9px;font-size:20.80px;letter-spacing:0.00px;font-weight:400;color:#69707d;">03</div>
<div class="t" style="left:597.0px;top:1542.7px;font-size:21.66px;letter-spacing:0.00px;font-weight:400;color:#98a2b3;">Avg.</div>
<div class="t" style="left:646.0px;top:1542.8px;font-size:21.55px;letter-spacing:0.00px;font-weight:400;color:#000000;">61 ms</div>
<div class="t" style="left:762.9px;top:1541.2px;font-size:23.41px;letter-spacing:0.00px;font-weight:400;color:#98a2b3;">95th percentile</div>
<div class="t" style="left:973.9px;top:1541.0px;font-size:23.59px;letter-spacing:0.00px;font-weight:400;color:#98a2b3;">99th percentile</div>
<div class="t" style="left:1193.1px;top:1541.8px;font-size:22.70px;letter-spacing:0.00px;font-weight:400;color:#98a2b3;">Service version</div>
<div class="t" style="left:1581.2px;top:1030.9px;font-size:28.42px;letter-spacing:-0.13px;font-weight:700;color:#1a1c21;">Requests per minute</div>
<div class="t" style="left:1634.9px;top:1082.0px;font-size:20.96px;letter-spacing:0.00px;font-weight:400;color:#69707d;">180 rpm</div>
<div class="t" style="left:1644.0px;top:1269.3px;font-size:21.22px;letter-spacing:0.35px;font-weight:400;color:#69707d;">90 rpm</div>
<div class="t" style="left:1656.8px;top:1457.1px;font-size:21.51px;letter-spacing:-0.00px;font-weight:400;color:#69707d;">0 rpm</div>
<div class="t" style="left:1695.7px;top:1480.9px;font-size:20.80px;letter-spacing:0.00px;font-weight:400;color:#69707d;">03 PM</div>
<div class="t" style="left:1813.2px;top:1480.9px;font-size:20.80px;letter-spacing:0.00px;font-weight:400;color:#69707d;">06 PM</div>
<div class="t" style="left:1930.6px;top:1480.9px;font-size:20.80px;letter-spacing:0.00px;font-weight:400;color:#69707d;">09 PM</div>
<div class="t" style="left:2045.9px;top:1480.9px;font-size:20.80px;letter-spacing:0.00px;font-weight:400;color:#69707d;">Tue 04</div>
<div class="t" style="left:2165.5px;top:1480.9px;font-size:20.80px;letter-spacing:0.00px;font-weight:400;color:#69707d;">03 AM</div>
<div class="t" style="left:2283.0px;top:1480.9px;font-size:20.80px;letter-spacing:0.00px;font-weight:400;color:#69707d;">06 AM</div>
<div class="t" style="left:2400.4px;top:1480.9px;font-size:20.80px;letter-spacing:0.00px;font-weight:400;color:#69707d;">09 AM</div>
<div class="t" style="left:2517.5px;top:1480.9px;font-size:20.80px;letter-spacing:0.00px;font-weight:400;color:#69707d;">12 PM</div>
<div class="t" style="left:2636.7px;top:1480.9px;font-size:20.80px;letter-spacing:0.00px;font-weight:400;color:#69707d;">03</div>
<div class="t" style="left:1754.2px;top:1538.0px;font-size:22.44px;letter-spacing:0.00px;font-weight:400;color:#98a2b3;">HTTP 2xx</div>
<div class="t" style="left:1860.1px;top:1538.4px;font-size:21.92px;letter-spacing:0.00px;font-weight:400;color:#000000;">157.4 rpm</div>
<div class="t" style="left:2015.9px;top:1538.1px;font-size:22.31px;letter-spacing:0.00px;font-weight:400;color:#98a2b3;">HTTP 3xx</div>
<div class="t" style="left:2121.9px;top:1537.4px;font-size:23.13px;letter-spacing:0.00px;font-weight:400;color:#000000;">25.8 rpm</div>
<div class="t" style="left:2270.2px;top:1538.1px;font-size:22.33px;letter-spacing:0.00px;font-weight:400;color:#98a2b3;">HTTP 4xx</div>
<div class="t" style="left:2377.3px;top:1537.9px;font-size:22.62px;letter-spacing:0.00px;font-weight:400;color:#000000;">8.0 rpm</div>
<div class="t" style="left:1754.2px;top:1576.0px;font-size:22.44px;letter-spacing:0.00px;font-weight:400;color:#98a2b3;">HTTP 5xx</div>
<div class="t" style="left:1860.5px;top:1576.4px;font-size:21.97px;letter-spacing:0.00px;font-weight:400;color:#000000;">7.7 rpm</div>
<div class="t" style="left:1999.3px;top:1575.7px;font-size:22.82px;letter-spacing:0.00px;font-weight:400;color:#98a2b3;">Service version</div>
</body></html>
